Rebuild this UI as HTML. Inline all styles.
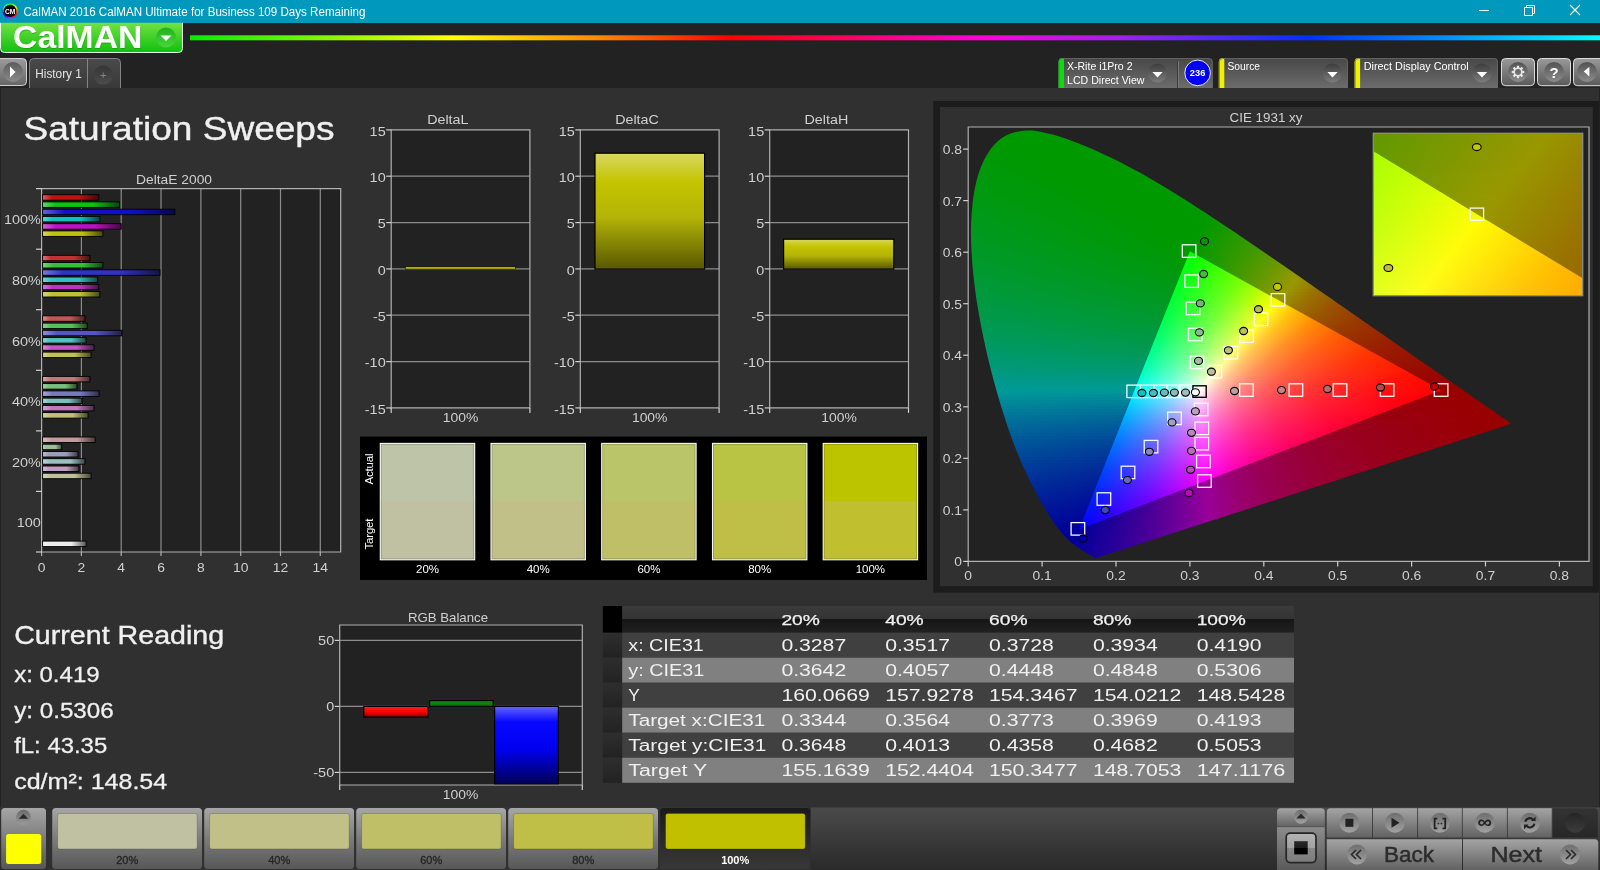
<!DOCTYPE html>
<html><head><meta charset="utf-8"><title>CalMAN 2016</title>
<style>html,body{margin:0;padding:0;background:#303030;overflow:hidden}svg{display:block;will-change:transform;font-family:"Liberation Sans",sans-serif}text{white-space:pre}</style>
</head><body>
<svg width="1600" height="870" viewBox="0 0 1600 870" font-family="'Liberation Sans', sans-serif"><defs><linearGradient id="gbtn" x1="0" y1="0" x2="0" y2="1"><stop offset="0" stop-color="#72e244"/><stop offset="0.5" stop-color="#3fd028"/><stop offset="1" stop-color="#0fc010"/></linearGradient><linearGradient id="gdd" x1="0" y1="0" x2="0" y2="1"><stop offset="0" stop-color="#1fb21f"/><stop offset="1" stop-color="#4ad63a"/></linearGradient><linearGradient id="rb" gradientUnits="userSpaceOnUse" x1="190" y1="0" x2="1600" y2="0"><stop offset="0.0000" stop-color="#00f000"/><stop offset="0.1858" stop-color="#ffff00"/><stop offset="0.2837" stop-color="#ff9000"/><stop offset="0.3830" stop-color="#ff0000"/><stop offset="0.5674" stop-color="#ff00e0"/><stop offset="0.6596" stop-color="#a020f0"/><stop offset="0.7943" stop-color="#0030ff"/><stop offset="1.0000" stop-color="#00ffff"/></linearGradient><linearGradient id="pb" x1="0" y1="0" x2="0" y2="1"><stop offset="0" stop-color="#9c9c9c"/><stop offset="1" stop-color="#666"/></linearGradient><linearGradient id="pbc" x1="0" y1="0" x2="0" y2="1"><stop offset="0" stop-color="#5c5c5c"/><stop offset="1" stop-color="#8a8a8a"/></linearGradient><linearGradient id="tab" x1="0" y1="0" x2="0" y2="1"><stop offset="0" stop-color="#4a4a4a"/><stop offset="1" stop-color="#393939"/></linearGradient><linearGradient id="plusc" x1="0" y1="0" x2="0" y2="1"><stop offset="0" stop-color="#353535"/><stop offset="1" stop-color="#4d4d4d"/></linearGradient><linearGradient id="pnl" x1="0" y1="0" x2="0" y2="1"><stop offset="0" stop-color="#474747"/><stop offset="1" stop-color="#6c6c6c"/></linearGradient><linearGradient id="ddc" x1="0" y1="0" x2="0" y2="1"><stop offset="0" stop-color="#3c3c3c"/><stop offset="1" stop-color="#7c7c7c"/></linearGradient><linearGradient id="tb" x1="0" y1="0" x2="0" y2="1"><stop offset="0" stop-color="#9a9a9a"/><stop offset="1" stop-color="#5a5a5a"/></linearGradient><linearGradient id="tbc" x1="0" y1="0" x2="0" y2="1"><stop offset="0" stop-color="#525252"/><stop offset="1" stop-color="#8c8c8c"/></linearGradient><linearGradient id="hb1" x1="0" y1="0" x2="1" y2="0"><stop offset="0" stop-color="#d66363"/><stop offset="0.17" stop-color="#c01010"/><stop offset="0.66" stop-color="#c01010"/><stop offset="1" stop-color="#480606"/></linearGradient><linearGradient id="hb2" x1="0" y1="0" x2="1" y2="0"><stop offset="0" stop-color="#63d663"/><stop offset="0.17" stop-color="#10c010"/><stop offset="0.66" stop-color="#10c010"/><stop offset="1" stop-color="#064806"/></linearGradient><linearGradient id="hb3" x1="0" y1="0" x2="1" y2="0"><stop offset="0" stop-color="#6363db"/><stop offset="0.17" stop-color="#1010c8"/><stop offset="0.66" stop-color="#1010c8"/><stop offset="1" stop-color="#06064c"/></linearGradient><linearGradient id="hb4" x1="0" y1="0" x2="1" y2="0"><stop offset="0" stop-color="#63d6d6"/><stop offset="0.17" stop-color="#10c0c0"/><stop offset="0.66" stop-color="#10c0c0"/><stop offset="1" stop-color="#064848"/></linearGradient><linearGradient id="hb5" x1="0" y1="0" x2="1" y2="0"><stop offset="0" stop-color="#d663d6"/><stop offset="0.17" stop-color="#c010c0"/><stop offset="0.66" stop-color="#c010c0"/><stop offset="1" stop-color="#480648"/></linearGradient><linearGradient id="hb6" x1="0" y1="0" x2="1" y2="0"><stop offset="0" stop-color="#d6d663"/><stop offset="0.17" stop-color="#c0c010"/><stop offset="0.66" stop-color="#c0c010"/><stop offset="1" stop-color="#484806"/></linearGradient><linearGradient id="hb7" x1="0" y1="0" x2="1" y2="0"><stop offset="0" stop-color="#d67a7a"/><stop offset="0.17" stop-color="#c03333"/><stop offset="0.66" stop-color="#c03333"/><stop offset="1" stop-color="#481313"/></linearGradient><linearGradient id="hb8" x1="0" y1="0" x2="1" y2="0"><stop offset="0" stop-color="#7ad67a"/><stop offset="0.17" stop-color="#33c033"/><stop offset="0.66" stop-color="#33c033"/><stop offset="1" stop-color="#134813"/></linearGradient><linearGradient id="hb9" x1="0" y1="0" x2="1" y2="0"><stop offset="0" stop-color="#7a7ad6"/><stop offset="0.17" stop-color="#3333c0"/><stop offset="0.66" stop-color="#3333c0"/><stop offset="1" stop-color="#131348"/></linearGradient><linearGradient id="hb10" x1="0" y1="0" x2="1" y2="0"><stop offset="0" stop-color="#7ad6d6"/><stop offset="0.17" stop-color="#33c0c0"/><stop offset="0.66" stop-color="#33c0c0"/><stop offset="1" stop-color="#134848"/></linearGradient><linearGradient id="hb11" x1="0" y1="0" x2="1" y2="0"><stop offset="0" stop-color="#d67ad6"/><stop offset="0.17" stop-color="#c033c0"/><stop offset="0.66" stop-color="#c033c0"/><stop offset="1" stop-color="#481348"/></linearGradient><linearGradient id="hb12" x1="0" y1="0" x2="1" y2="0"><stop offset="0" stop-color="#d6d67a"/><stop offset="0.17" stop-color="#c0c033"/><stop offset="0.66" stop-color="#c0c033"/><stop offset="1" stop-color="#484813"/></linearGradient><linearGradient id="hb13" x1="0" y1="0" x2="1" y2="0"><stop offset="0" stop-color="#d69191"/><stop offset="0.17" stop-color="#c05656"/><stop offset="0.66" stop-color="#c05656"/><stop offset="1" stop-color="#482020"/></linearGradient><linearGradient id="hb14" x1="0" y1="0" x2="1" y2="0"><stop offset="0" stop-color="#91d691"/><stop offset="0.17" stop-color="#56c056"/><stop offset="0.66" stop-color="#56c056"/><stop offset="1" stop-color="#204820"/></linearGradient><linearGradient id="hb15" x1="0" y1="0" x2="1" y2="0"><stop offset="0" stop-color="#9191d6"/><stop offset="0.17" stop-color="#5656c0"/><stop offset="0.66" stop-color="#5656c0"/><stop offset="1" stop-color="#202048"/></linearGradient><linearGradient id="hb16" x1="0" y1="0" x2="1" y2="0"><stop offset="0" stop-color="#91d6d6"/><stop offset="0.17" stop-color="#56c0c0"/><stop offset="0.66" stop-color="#56c0c0"/><stop offset="1" stop-color="#204848"/></linearGradient><linearGradient id="hb17" x1="0" y1="0" x2="1" y2="0"><stop offset="0" stop-color="#d691d6"/><stop offset="0.17" stop-color="#c056c0"/><stop offset="0.66" stop-color="#c056c0"/><stop offset="1" stop-color="#482048"/></linearGradient><linearGradient id="hb18" x1="0" y1="0" x2="1" y2="0"><stop offset="0" stop-color="#d6d691"/><stop offset="0.17" stop-color="#c0c056"/><stop offset="0.66" stop-color="#c0c056"/><stop offset="1" stop-color="#484820"/></linearGradient><linearGradient id="hb19" x1="0" y1="0" x2="1" y2="0"><stop offset="0" stop-color="#d6a8a8"/><stop offset="0.17" stop-color="#c07979"/><stop offset="0.66" stop-color="#c07979"/><stop offset="1" stop-color="#482e2e"/></linearGradient><linearGradient id="hb20" x1="0" y1="0" x2="1" y2="0"><stop offset="0" stop-color="#a8d6a8"/><stop offset="0.17" stop-color="#79c079"/><stop offset="0.66" stop-color="#79c079"/><stop offset="1" stop-color="#2e482e"/></linearGradient><linearGradient id="hb21" x1="0" y1="0" x2="1" y2="0"><stop offset="0" stop-color="#a8a8d6"/><stop offset="0.17" stop-color="#7979c0"/><stop offset="0.66" stop-color="#7979c0"/><stop offset="1" stop-color="#2e2e48"/></linearGradient><linearGradient id="hb22" x1="0" y1="0" x2="1" y2="0"><stop offset="0" stop-color="#a8d6d6"/><stop offset="0.17" stop-color="#79c0c0"/><stop offset="0.66" stop-color="#79c0c0"/><stop offset="1" stop-color="#2e4848"/></linearGradient><linearGradient id="hb23" x1="0" y1="0" x2="1" y2="0"><stop offset="0" stop-color="#d6a8d6"/><stop offset="0.17" stop-color="#c079c0"/><stop offset="0.66" stop-color="#c079c0"/><stop offset="1" stop-color="#482e48"/></linearGradient><linearGradient id="hb24" x1="0" y1="0" x2="1" y2="0"><stop offset="0" stop-color="#d6d6a8"/><stop offset="0.17" stop-color="#c0c079"/><stop offset="0.66" stop-color="#c0c079"/><stop offset="1" stop-color="#48482e"/></linearGradient><linearGradient id="hb25" x1="0" y1="0" x2="1" y2="0"><stop offset="0" stop-color="#d6bfbf"/><stop offset="0.17" stop-color="#c09c9c"/><stop offset="0.66" stop-color="#c09c9c"/><stop offset="1" stop-color="#483b3b"/></linearGradient><linearGradient id="hb26" x1="0" y1="0" x2="1" y2="0"><stop offset="0" stop-color="#bfd6bf"/><stop offset="0.17" stop-color="#9cc09c"/><stop offset="0.66" stop-color="#9cc09c"/><stop offset="1" stop-color="#3b483b"/></linearGradient><linearGradient id="hb27" x1="0" y1="0" x2="1" y2="0"><stop offset="0" stop-color="#bfbfd6"/><stop offset="0.17" stop-color="#9c9cc0"/><stop offset="0.66" stop-color="#9c9cc0"/><stop offset="1" stop-color="#3b3b48"/></linearGradient><linearGradient id="hb28" x1="0" y1="0" x2="1" y2="0"><stop offset="0" stop-color="#bfd6d6"/><stop offset="0.17" stop-color="#9cc0c0"/><stop offset="0.66" stop-color="#9cc0c0"/><stop offset="1" stop-color="#3b4848"/></linearGradient><linearGradient id="hb29" x1="0" y1="0" x2="1" y2="0"><stop offset="0" stop-color="#d6bfd6"/><stop offset="0.17" stop-color="#c09cc0"/><stop offset="0.66" stop-color="#c09cc0"/><stop offset="1" stop-color="#483b48"/></linearGradient><linearGradient id="hb30" x1="0" y1="0" x2="1" y2="0"><stop offset="0" stop-color="#d6d6bf"/><stop offset="0.17" stop-color="#c0c09c"/><stop offset="0.66" stop-color="#c0c09c"/><stop offset="1" stop-color="#48483b"/></linearGradient><linearGradient id="hb31" x1="0" y1="0" x2="1" y2="0"><stop offset="0" stop-color="#f2f2f2"/><stop offset="0.17" stop-color="#ebebeb"/><stop offset="0.66" stop-color="#ebebeb"/><stop offset="1" stop-color="#595959"/></linearGradient><linearGradient id="ybar" x1="0" y1="0" x2="0" y2="1"><stop offset="0" stop-color="#d8d860"/><stop offset="0.25" stop-color="#c4c400"/><stop offset="0.55" stop-color="#b4b408"/><stop offset="1" stop-color="#585800"/></linearGradient><linearGradient id="rbar" x1="0" y1="0" x2="0" y2="1"><stop offset="0" stop-color="#ff2020"/><stop offset="0.5" stop-color="#ff0000"/><stop offset="1" stop-color="#8a0000"/></linearGradient><linearGradient id="gbar" x1="0" y1="0" x2="0" y2="1"><stop offset="0" stop-color="#109010"/><stop offset="1" stop-color="#0a700a"/></linearGradient><linearGradient id="bbar" x1="0" y1="0" x2="0" y2="1"><stop offset="0" stop-color="#6464ff"/><stop offset="0.2" stop-color="#0808ff"/><stop offset="0.55" stop-color="#0000f0"/><stop offset="1" stop-color="#000058"/></linearGradient><linearGradient id="thd" x1="0" y1="0" x2="0" y2="1"><stop offset="0" stop-color="#3b3b3b"/><stop offset="0.47" stop-color="#343434"/><stop offset="0.48" stop-color="#151515"/><stop offset="1" stop-color="#212121"/></linearGradient><linearGradient id="rhd" x1="0" y1="0" x2="0" y2="1"><stop offset="0" stop-color="#2e2e2e"/><stop offset="1" stop-color="#222"/></linearGradient><clipPath id="hs"><path d="M1096.9 557.8L1096.8 557.8L1096.7 557.9L1096.7 557.9L1096.5 557.9L1096.4 557.9L1096.3 557.9L1096.1 557.9L1095.9 557.9L1095.6 557.9L1095.4 557.9L1095.1 557.8L1094.9 557.8L1094.6 557.7L1094.3 557.6L1094.1 557.4L1093.8 557.3L1093.4 557.1L1093.0 556.8L1092.6 556.6L1092.1 556.3L1091.6 556.0L1091.0 555.6L1090.4 555.2L1089.7 554.8L1088.9 554.3L1088.1 553.8L1087.2 553.3L1086.2 552.7L1085.1 552.0L1083.9 551.3L1082.5 550.4L1081.0 549.4L1079.3 548.3L1077.6 547.2L1076.0 546.1L1074.6 545.1L1073.4 544.2L1072.4 543.4L1071.4 542.7L1070.5 541.8L1069.5 540.9L1068.3 539.8L1067.1 538.6L1065.8 537.3L1064.4 535.8L1063.0 534.3L1061.5 532.5L1059.9 530.6L1058.3 528.6L1056.6 526.4L1054.9 524.0L1053.1 521.5L1051.2 518.7L1049.2 515.7L1047.1 512.4L1045.0 508.8L1042.8 505.1L1040.5 501.1L1038.1 496.7L1035.7 492.0L1033.1 487.0L1030.4 481.7L1027.6 476.0L1024.7 470.1L1021.8 463.7L1019.0 457.0L1016.1 449.8L1013.2 442.2L1010.3 434.3L1007.4 426.0L1004.6 417.3L1001.8 408.4L998.9 399.0L996.1 389.2L993.3 379.0L990.6 368.7L988.0 358.2L985.6 347.7L983.3 337.1L981.1 326.2L979.1 315.3L977.2 304.3L975.6 293.5L974.3 282.9L973.1 272.5L972.2 262.2L971.5 251.9L971.1 241.9L970.9 232.2L971.1 222.9L971.6 213.9L972.4 205.1L973.4 196.6L974.8 188.5L976.5 180.8L978.5 173.7L980.8 167.2L983.5 161.1L986.5 155.5L989.8 150.3L993.3 145.8L996.9 141.9L1000.8 138.7L1005.0 136.1L1009.3 134.0L1013.9 132.5L1018.5 131.4L1023.1 130.7L1027.8 130.4L1032.7 130.6L1037.6 131.3L1042.6 132.2L1047.6 133.4L1052.6 134.6L1057.6 135.9L1062.6 137.5L1067.6 139.3L1072.7 141.2L1077.6 143.1L1082.5 145.0L1087.3 147.0L1092.1 149.0L1096.8 151.1L1101.5 153.2L1106.1 155.4L1110.8 157.6L1115.3 159.8L1119.9 162.1L1124.4 164.4L1128.9 166.8L1133.4 169.2L1137.9 171.6L1142.4 174.1L1146.8 176.6L1151.3 179.2L1155.7 181.8L1160.2 184.4L1164.6 187.1L1169.1 189.8L1173.5 192.5L1177.9 195.2L1182.3 198.0L1186.7 200.8L1191.1 203.6L1195.5 206.4L1199.9 209.3L1204.3 212.1L1208.7 215.0L1213.1 217.9L1217.5 220.8L1221.9 223.7L1226.3 226.7L1230.7 229.6L1235.1 232.6L1239.5 235.6L1243.9 238.5L1248.3 241.5L1252.7 244.5L1257.1 247.5L1261.5 250.5L1265.9 253.5L1270.2 256.5L1274.6 259.5L1279.0 262.5L1283.4 265.5L1287.7 268.5L1292.1 271.5L1296.4 274.5L1300.7 277.5L1305.0 280.5L1309.3 283.4L1313.6 286.4L1317.8 289.4L1322.0 292.3L1326.2 295.2L1330.4 298.1L1334.6 301.0L1338.7 303.9L1342.9 306.8L1346.9 309.6L1351.0 312.4L1355.0 315.2L1359.0 318.0L1363.0 320.8L1366.9 323.5L1370.8 326.2L1374.7 328.9L1378.5 331.5L1382.3 334.1L1386.0 336.7L1389.7 339.3L1393.3 341.8L1396.8 344.2L1400.3 346.7L1403.8 349.1L1407.2 351.5L1410.5 353.8L1413.7 356.0L1416.9 358.2L1420.0 360.4L1422.9 362.4L1425.9 364.5L1428.7 366.5L1431.6 368.4L1434.3 370.3L1437.0 372.2L1439.7 374.1L1442.3 375.9L1444.8 377.6L1447.2 379.3L1449.6 380.9L1451.8 382.5L1454.0 384.0L1456.2 385.5L1458.2 386.9L1460.2 388.3L1462.2 389.6L1464.0 390.9L1465.8 392.1L1467.5 393.3L1469.2 394.5L1470.8 395.6L1472.3 396.7L1473.6 397.6L1474.9 398.5L1476.2 399.4L1477.6 400.4L1479.2 401.5L1481.1 402.8L1483.1 404.2L1485.3 405.7L1487.5 407.2L1489.5 408.6L1491.3 409.9L1493.0 411.0L1494.5 412.1L1495.9 413.1L1497.2 414.0L1498.4 414.8L1499.5 415.6L1500.6 416.4L1501.6 417.0L1502.5 417.6L1503.3 418.2L1504.0 418.7L1504.7 419.2L1505.3 419.6L1505.9 420.0L1506.4 420.3L1506.8 420.6L1507.2 420.9L1507.7 421.2L1508.1 421.6L1508.6 421.9L1509.1 422.2L1509.5 422.5L1509.9 422.8L1510.2 423.0L1510.4 423.2L1510.7 423.3L1510.8 423.4L1511.0 423.5L1511.1 423.6L1511.1 423.7z"/></clipPath><clipPath id="tri"><path d="M1441.2 390.3L1189.9 251.2L1079.0 529.5z"/></clipPath><linearGradient id="c1" gradientUnits="userSpaceOnUse" x1="1010" x2="1048" y1="0" y2="0"><stop offset="0.000" stop-color="#009900"/><stop offset="1.000" stop-color="#009900"/></linearGradient><linearGradient id="c2" gradientUnits="userSpaceOnUse" x1="1003" x2="1060" y1="0" y2="0"><stop offset="0.000" stop-color="#009900"/><stop offset="1.000" stop-color="#009900"/></linearGradient><linearGradient id="c3" gradientUnits="userSpaceOnUse" x1="998" x2="1069" y1="0" y2="0"><stop offset="0.000" stop-color="#009900"/><stop offset="1.000" stop-color="#009900"/></linearGradient><linearGradient id="c4" gradientUnits="userSpaceOnUse" x1="994" x2="1077" y1="0" y2="0"><stop offset="0.000" stop-color="#009900"/><stop offset="1.000" stop-color="#009900"/></linearGradient><linearGradient id="c5" gradientUnits="userSpaceOnUse" x1="992" x2="1085" y1="0" y2="0"><stop offset="0.000" stop-color="#009900"/><stop offset="1.000" stop-color="#009900"/></linearGradient><linearGradient id="c6" gradientUnits="userSpaceOnUse" x1="989" x2="1092" y1="0" y2="0"><stop offset="0.000" stop-color="#009902"/><stop offset="1.000" stop-color="#009900"/></linearGradient><linearGradient id="c7" gradientUnits="userSpaceOnUse" x1="987" x2="1099" y1="0" y2="0"><stop offset="0.000" stop-color="#009903"/><stop offset="0.679" stop-color="#009900"/><stop offset="1.000" stop-color="#009900"/></linearGradient><linearGradient id="c8" gradientUnits="userSpaceOnUse" x1="985" x2="1106" y1="0" y2="0"><stop offset="0.000" stop-color="#009904"/><stop offset="0.471" stop-color="#009900"/><stop offset="1.000" stop-color="#009900"/></linearGradient><linearGradient id="c9" gradientUnits="userSpaceOnUse" x1="983" x2="1112" y1="0" y2="0"><stop offset="0.000" stop-color="#009905"/><stop offset="0.450" stop-color="#009900"/><stop offset="1.000" stop-color="#009900"/></linearGradient><linearGradient id="c10" gradientUnits="userSpaceOnUse" x1="982" x2="1118" y1="0" y2="0"><stop offset="0.000" stop-color="#009906"/><stop offset="0.456" stop-color="#009900"/><stop offset="1.000" stop-color="#009900"/></linearGradient><linearGradient id="c11" gradientUnits="userSpaceOnUse" x1="980" x2="1124" y1="0" y2="0"><stop offset="0.000" stop-color="#009907"/><stop offset="0.465" stop-color="#009900"/><stop offset="1.000" stop-color="#009900"/></linearGradient><linearGradient id="c12" gradientUnits="userSpaceOnUse" x1="979" x2="1130" y1="0" y2="0"><stop offset="0.000" stop-color="#009908"/><stop offset="0.483" stop-color="#009900"/><stop offset="1.000" stop-color="#009900"/></linearGradient><linearGradient id="c13" gradientUnits="userSpaceOnUse" x1="978" x2="1136" y1="0" y2="0"><stop offset="0.000" stop-color="#009909"/><stop offset="0.494" stop-color="#009900"/><stop offset="1.000" stop-color="#009900"/></linearGradient><linearGradient id="c14" gradientUnits="userSpaceOnUse" x1="977" x2="1141" y1="0" y2="0"><stop offset="0.000" stop-color="#00990a"/><stop offset="0.512" stop-color="#009900"/><stop offset="1.000" stop-color="#009900"/></linearGradient><linearGradient id="c15" gradientUnits="userSpaceOnUse" x1="976" x2="1146" y1="0" y2="0"><stop offset="0.000" stop-color="#00990b"/><stop offset="0.529" stop-color="#009900"/><stop offset="1.000" stop-color="#009900"/></linearGradient><linearGradient id="c16" gradientUnits="userSpaceOnUse" x1="975" x2="1152" y1="0" y2="0"><stop offset="0.000" stop-color="#00990c"/><stop offset="0.542" stop-color="#009900"/><stop offset="1.000" stop-color="#009900"/></linearGradient><linearGradient id="c17" gradientUnits="userSpaceOnUse" x1="974" x2="1157" y1="0" y2="0"><stop offset="0.000" stop-color="#00990d"/><stop offset="0.557" stop-color="#009900"/><stop offset="1.000" stop-color="#009900"/></linearGradient><linearGradient id="c18" gradientUnits="userSpaceOnUse" x1="973" x2="1162" y1="0" y2="0"><stop offset="0.000" stop-color="#00990e"/><stop offset="0.571" stop-color="#009900"/><stop offset="1.000" stop-color="#009900"/></linearGradient><linearGradient id="c19" gradientUnits="userSpaceOnUse" x1="973" x2="1167" y1="0" y2="0"><stop offset="0.000" stop-color="#00990f"/><stop offset="0.582" stop-color="#009900"/><stop offset="1.000" stop-color="#009900"/></linearGradient><linearGradient id="c20" gradientUnits="userSpaceOnUse" x1="972" x2="1172" y1="0" y2="0"><stop offset="0.000" stop-color="#009910"/><stop offset="0.600" stop-color="#009900"/><stop offset="1.000" stop-color="#009900"/></linearGradient><linearGradient id="c21" gradientUnits="userSpaceOnUse" x1="972" x2="1177" y1="0" y2="0"><stop offset="0.000" stop-color="#009911"/><stop offset="0.605" stop-color="#009900"/><stop offset="1.000" stop-color="#009900"/></linearGradient><linearGradient id="c22" gradientUnits="userSpaceOnUse" x1="971" x2="1182" y1="0" y2="0"><stop offset="0.000" stop-color="#009912"/><stop offset="0.621" stop-color="#009900"/><stop offset="1.000" stop-color="#009900"/></linearGradient><linearGradient id="c23" gradientUnits="userSpaceOnUse" x1="971" x2="1186" y1="0" y2="0"><stop offset="0.000" stop-color="#009913"/><stop offset="0.633" stop-color="#009900"/><stop offset="1.000" stop-color="#009900"/></linearGradient><linearGradient id="c24" gradientUnits="userSpaceOnUse" x1="970" x2="1191" y1="0" y2="0"><stop offset="0.000" stop-color="#009914"/><stop offset="0.643" stop-color="#009900"/><stop offset="1.000" stop-color="#009900"/></linearGradient><linearGradient id="c25" gradientUnits="userSpaceOnUse" x1="970" x2="1196" y1="0" y2="0"><stop offset="0.000" stop-color="#009915"/><stop offset="0.650" stop-color="#009900"/><stop offset="1.000" stop-color="#009900"/></linearGradient><linearGradient id="c26" gradientUnits="userSpaceOnUse" x1="970" x2="1200" y1="0" y2="0"><stop offset="0.000" stop-color="#009916"/><stop offset="0.665" stop-color="#009900"/><stop offset="1.000" stop-color="#009900"/></linearGradient><linearGradient id="c27" gradientUnits="userSpaceOnUse" x1="969" x2="1205" y1="0" y2="0"><stop offset="0.000" stop-color="#009917"/><stop offset="0.674" stop-color="#009900"/><stop offset="1.000" stop-color="#009900"/></linearGradient><linearGradient id="c28" gradientUnits="userSpaceOnUse" x1="969" x2="1210" y1="0" y2="0"><stop offset="0.000" stop-color="#009918"/><stop offset="0.680" stop-color="#009900"/><stop offset="0.988" stop-color="#019900"/><stop offset="1.000" stop-color="#049900"/></linearGradient><linearGradient id="c29" gradientUnits="userSpaceOnUse" x1="969" x2="1214" y1="0" y2="0"><stop offset="0.000" stop-color="#00991a"/><stop offset="0.690" stop-color="#009900"/><stop offset="0.967" stop-color="#029900"/><stop offset="1.000" stop-color="#089900"/></linearGradient><linearGradient id="c30" gradientUnits="userSpaceOnUse" x1="969" x2="1219" y1="0" y2="0"><stop offset="0.000" stop-color="#00991b"/><stop offset="0.700" stop-color="#009900"/><stop offset="0.944" stop-color="#029900"/><stop offset="1.000" stop-color="#0e9900"/></linearGradient><linearGradient id="c31" gradientUnits="userSpaceOnUse" x1="969" x2="1223" y1="0" y2="0"><stop offset="0.000" stop-color="#00991c"/><stop offset="0.709" stop-color="#009900"/><stop offset="0.925" stop-color="#029900"/><stop offset="1.000" stop-color="#129900"/></linearGradient><linearGradient id="c32" gradientUnits="userSpaceOnUse" x1="969" x2="1228" y1="0" y2="0"><stop offset="0.000" stop-color="#00991d"/><stop offset="0.714" stop-color="#009900"/><stop offset="0.903" stop-color="#029900"/><stop offset="1.000" stop-color="#189900"/></linearGradient><linearGradient id="c33" gradientUnits="userSpaceOnUse" x1="968" x2="1232" y1="0" y2="0"><stop offset="0.000" stop-color="#00991e"/><stop offset="0.723" stop-color="#009900"/><stop offset="0.883" stop-color="#019900"/><stop offset="1.000" stop-color="#1d9900"/></linearGradient><linearGradient id="c34" gradientUnits="userSpaceOnUse" x1="968" x2="1237" y1="0" y2="0"><stop offset="0.000" stop-color="#00991f"/><stop offset="0.732" stop-color="#009900"/><stop offset="0.862" stop-color="#029900"/><stop offset="1.000" stop-color="#239900"/></linearGradient><linearGradient id="c35" gradientUnits="userSpaceOnUse" x1="968" x2="1241" y1="0" y2="0"><stop offset="0.000" stop-color="#009921"/><stop offset="0.740" stop-color="#009900"/><stop offset="0.846" stop-color="#029900"/><stop offset="1.000" stop-color="#299900"/></linearGradient><linearGradient id="c36" gradientUnits="userSpaceOnUse" x1="968" x2="1246" y1="0" y2="0"><stop offset="0.000" stop-color="#009922"/><stop offset="0.680" stop-color="#009901"/><stop offset="0.827" stop-color="#029900"/><stop offset="1.000" stop-color="#309900"/></linearGradient><linearGradient id="c37" gradientUnits="userSpaceOnUse" x1="968" x2="1250" y1="0" y2="0"><stop offset="0.000" stop-color="#009923"/><stop offset="0.670" stop-color="#009903"/><stop offset="0.809" stop-color="#019900"/><stop offset="1.000" stop-color="#369900"/></linearGradient><linearGradient id="c38" gradientUnits="userSpaceOnUse" x1="969" x2="1254" y1="0" y2="0"><stop offset="0.000" stop-color="#009924"/><stop offset="0.656" stop-color="#009904"/><stop offset="0.779" stop-color="#009900"/><stop offset="0.881" stop-color="#199900"/><stop offset="1.000" stop-color="#3c9900"/></linearGradient><linearGradient id="c39" gradientUnits="userSpaceOnUse" x1="969" x2="1259" y1="0" y2="0"><stop offset="0.000" stop-color="#009926"/><stop offset="0.645" stop-color="#009905"/><stop offset="0.776" stop-color="#029900"/><stop offset="1.000" stop-color="#449900"/></linearGradient><linearGradient id="c40" gradientUnits="userSpaceOnUse" x1="969" x2="1263" y1="0" y2="0"><stop offset="0.000" stop-color="#009927"/><stop offset="0.633" stop-color="#009907"/><stop offset="0.762" stop-color="#029900"/><stop offset="0.990" stop-color="#479900"/><stop offset="1.000" stop-color="#4b9900"/></linearGradient><linearGradient id="c41" gradientUnits="userSpaceOnUse" x1="969" x2="1268" y1="0" y2="0"><stop offset="0.000" stop-color="#009928"/><stop offset="0.619" stop-color="#009909"/><stop offset="0.746" stop-color="#029900"/><stop offset="0.967" stop-color="#479900"/><stop offset="1.000" stop-color="#539900"/></linearGradient><linearGradient id="c42" gradientUnits="userSpaceOnUse" x1="969" x2="1272" y1="0" y2="0"><stop offset="0.000" stop-color="#00992a"/><stop offset="0.607" stop-color="#00990a"/><stop offset="0.729" stop-color="#019901"/><stop offset="0.944" stop-color="#469900"/><stop offset="1.000" stop-color="#5a9900"/></linearGradient><linearGradient id="c43" gradientUnits="userSpaceOnUse" x1="969" x2="1276" y1="0" y2="0"><stop offset="0.000" stop-color="#00992b"/><stop offset="0.596" stop-color="#00990c"/><stop offset="0.717" stop-color="#029903"/><stop offset="0.831" stop-color="#259900"/><stop offset="1.000" stop-color="#629900"/></linearGradient><linearGradient id="c44" gradientUnits="userSpaceOnUse" x1="969" x2="1281" y1="0" y2="0"><stop offset="0.000" stop-color="#00992c"/><stop offset="0.587" stop-color="#00990d"/><stop offset="0.702" stop-color="#029905"/><stop offset="0.804" stop-color="#229900"/><stop offset="0.994" stop-color="#699900"/><stop offset="1.000" stop-color="#6c9900"/></linearGradient><linearGradient id="c45" gradientUnits="userSpaceOnUse" x1="970" x2="1285" y1="0" y2="0"><stop offset="0.000" stop-color="#00992e"/><stop offset="0.578" stop-color="#00990f"/><stop offset="0.689" stop-color="#029907"/><stop offset="0.803" stop-color="#279900"/><stop offset="0.984" stop-color="#6d9900"/><stop offset="1.000" stop-color="#749900"/></linearGradient><linearGradient id="c46" gradientUnits="userSpaceOnUse" x1="970" x2="1289" y1="0" y2="0"><stop offset="0.000" stop-color="#00992f"/><stop offset="0.567" stop-color="#009910"/><stop offset="0.677" stop-color="#029908"/><stop offset="0.806" stop-color="#2e9900"/><stop offset="0.981" stop-color="#759900"/><stop offset="1.000" stop-color="#7e9900"/></linearGradient><linearGradient id="c47" gradientUnits="userSpaceOnUse" x1="970" x2="1294" y1="0" y2="0"><stop offset="0.000" stop-color="#009931"/><stop offset="0.556" stop-color="#009912"/><stop offset="0.660" stop-color="#01990a"/><stop offset="0.809" stop-color="#359900"/><stop offset="0.975" stop-color="#7d9900"/><stop offset="1.000" stop-color="#899900"/></linearGradient><linearGradient id="c48" gradientUnits="userSpaceOnUse" x1="971" x2="1298" y1="0" y2="0"><stop offset="0.000" stop-color="#009932"/><stop offset="0.547" stop-color="#009914"/><stop offset="0.648" stop-color="#02990c"/><stop offset="0.813" stop-color="#3e9900"/><stop offset="0.976" stop-color="#869900"/><stop offset="1.000" stop-color="#939900"/></linearGradient><linearGradient id="c49" gradientUnits="userSpaceOnUse" x1="971" x2="1302" y1="0" y2="0"><stop offset="0.000" stop-color="#009934"/><stop offset="0.538" stop-color="#009916"/><stop offset="0.637" stop-color="#02990e"/><stop offset="0.819" stop-color="#469900"/><stop offset="0.973" stop-color="#8f9900"/><stop offset="0.994" stop-color="#999800"/><stop offset="1.000" stop-color="#999500"/></linearGradient><linearGradient id="c50" gradientUnits="userSpaceOnUse" x1="971" x2="1307" y1="0" y2="0"><stop offset="0.000" stop-color="#009935"/><stop offset="0.530" stop-color="#009917"/><stop offset="0.625" stop-color="#029910"/><stop offset="0.804" stop-color="#479900"/><stop offset="0.952" stop-color="#909900"/><stop offset="0.973" stop-color="#999700"/><stop offset="1.000" stop-color="#998900"/></linearGradient><linearGradient id="c51" gradientUnits="userSpaceOnUse" x1="971" x2="1311" y1="0" y2="0"><stop offset="0.000" stop-color="#009937"/><stop offset="0.521" stop-color="#009919"/><stop offset="0.612" stop-color="#019912"/><stop offset="0.785" stop-color="#469902"/><stop offset="0.932" stop-color="#8f9900"/><stop offset="0.953" stop-color="#999800"/><stop offset="1.000" stop-color="#998000"/></linearGradient><linearGradient id="c52" gradientUnits="userSpaceOnUse" x1="972" x2="1315" y1="0" y2="0"><stop offset="0.000" stop-color="#009939"/><stop offset="0.513" stop-color="#00991b"/><stop offset="0.601" stop-color="#019914"/><stop offset="0.770" stop-color="#469904"/><stop offset="0.843" stop-color="#699900"/><stop offset="0.933" stop-color="#999800"/><stop offset="1.000" stop-color="#997800"/></linearGradient><linearGradient id="c53" gradientUnits="userSpaceOnUse" x1="972" x2="1320" y1="0" y2="0"><stop offset="0.000" stop-color="#00993a"/><stop offset="0.506" stop-color="#00991d"/><stop offset="0.589" stop-color="#029916"/><stop offset="0.753" stop-color="#469907"/><stop offset="0.839" stop-color="#719900"/><stop offset="0.914" stop-color="#999700"/><stop offset="0.991" stop-color="#997200"/><stop offset="1.000" stop-color="#996f00"/></linearGradient><linearGradient id="c54" gradientUnits="userSpaceOnUse" x1="973" x2="1324" y1="0" y2="0"><stop offset="0.000" stop-color="#00993c"/><stop offset="0.499" stop-color="#00991f"/><stop offset="0.578" stop-color="#029919"/><stop offset="0.741" stop-color="#479909"/><stop offset="0.840" stop-color="#7b9900"/><stop offset="0.895" stop-color="#999800"/><stop offset="0.972" stop-color="#997300"/><stop offset="1.000" stop-color="#996800"/></linearGradient><linearGradient id="c55" gradientUnits="userSpaceOnUse" x1="973" x2="1328" y1="0" y2="0"><stop offset="0.000" stop-color="#00993e"/><stop offset="0.490" stop-color="#009921"/><stop offset="0.569" stop-color="#02991b"/><stop offset="0.727" stop-color="#47990c"/><stop offset="0.845" stop-color="#879900"/><stop offset="0.879" stop-color="#999700"/><stop offset="0.952" stop-color="#997300"/><stop offset="1.000" stop-color="#996100"/></linearGradient><linearGradient id="c56" gradientUnits="userSpaceOnUse" x1="973" x2="1333" y1="0" y2="0"><stop offset="0.000" stop-color="#009940"/><stop offset="0.483" stop-color="#009923"/><stop offset="0.556" stop-color="#01991d"/><stop offset="0.708" stop-color="#46990f"/><stop offset="0.839" stop-color="#8e9900"/><stop offset="0.858" stop-color="#999700"/><stop offset="0.931" stop-color="#997300"/><stop offset="1.000" stop-color="#995a00"/></linearGradient><linearGradient id="c57" gradientUnits="userSpaceOnUse" x1="974" x2="1337" y1="0" y2="0"><stop offset="0.000" stop-color="#009941"/><stop offset="0.477" stop-color="#009925"/><stop offset="0.545" stop-color="#029920"/><stop offset="0.697" stop-color="#479911"/><stop offset="0.824" stop-color="#8f9902"/><stop offset="0.843" stop-color="#999600"/><stop offset="0.915" stop-color="#997200"/><stop offset="1.000" stop-color="#995500"/></linearGradient><linearGradient id="c58" gradientUnits="userSpaceOnUse" x1="974" x2="1341" y1="0" y2="0"><stop offset="0.000" stop-color="#009943"/><stop offset="0.471" stop-color="#009927"/><stop offset="0.537" stop-color="#029922"/><stop offset="0.684" stop-color="#479914"/><stop offset="0.807" stop-color="#8e9905"/><stop offset="0.826" stop-color="#999702"/><stop offset="0.894" stop-color="#997300"/><stop offset="0.989" stop-color="#995200"/><stop offset="1.000" stop-color="#994f00"/></linearGradient><linearGradient id="c59" gradientUnits="userSpaceOnUse" x1="975" x2="1346" y1="0" y2="0"><stop offset="0.000" stop-color="#009945"/><stop offset="0.464" stop-color="#00992a"/><stop offset="0.526" stop-color="#029924"/><stop offset="0.668" stop-color="#479916"/><stop offset="0.790" stop-color="#8f9908"/><stop offset="0.806" stop-color="#999805"/><stop offset="0.865" stop-color="#997600"/><stop offset="0.957" stop-color="#995500"/><stop offset="1.000" stop-color="#994a00"/></linearGradient><linearGradient id="c60" gradientUnits="userSpaceOnUse" x1="975" x2="1350" y1="0" y2="0"><stop offset="0.000" stop-color="#009947"/><stop offset="0.459" stop-color="#00992c"/><stop offset="0.515" stop-color="#019927"/><stop offset="0.653" stop-color="#45991a"/><stop offset="0.771" stop-color="#8d990b"/><stop offset="0.792" stop-color="#999708"/><stop offset="0.859" stop-color="#997200"/><stop offset="0.952" stop-color="#995100"/><stop offset="1.000" stop-color="#994500"/></linearGradient><linearGradient id="c61" gradientUnits="userSpaceOnUse" x1="976" x2="1354" y1="0" y2="0"><stop offset="0.000" stop-color="#009949"/><stop offset="0.452" stop-color="#00992e"/><stop offset="0.505" stop-color="#01992a"/><stop offset="0.643" stop-color="#46991c"/><stop offset="0.759" stop-color="#8f990e"/><stop offset="0.775" stop-color="#99970c"/><stop offset="0.839" stop-color="#997302"/><stop offset="0.929" stop-color="#995200"/><stop offset="1.000" stop-color="#994000"/></linearGradient><linearGradient id="c62" gradientUnits="userSpaceOnUse" x1="976" x2="1359" y1="0" y2="0"><stop offset="0.000" stop-color="#00994b"/><stop offset="0.446" stop-color="#009931"/><stop offset="0.496" stop-color="#02992c"/><stop offset="0.629" stop-color="#46991f"/><stop offset="0.742" stop-color="#8f9912"/><stop offset="0.757" stop-color="#99980f"/><stop offset="0.820" stop-color="#997305"/><stop offset="0.885" stop-color="#995900"/><stop offset="1.000" stop-color="#993b00"/></linearGradient><linearGradient id="c63" gradientUnits="userSpaceOnUse" x1="977" x2="1363" y1="0" y2="0"><stop offset="0.000" stop-color="#00994d"/><stop offset="0.443" stop-color="#009933"/><stop offset="0.487" stop-color="#02992f"/><stop offset="0.617" stop-color="#469923"/><stop offset="0.725" stop-color="#8e9915"/><stop offset="0.744" stop-color="#999713"/><stop offset="0.806" stop-color="#997207"/><stop offset="0.883" stop-color="#995400"/><stop offset="1.000" stop-color="#993700"/></linearGradient><linearGradient id="c64" gradientUnits="userSpaceOnUse" x1="977" x2="1367" y1="0" y2="0"><stop offset="0.000" stop-color="#00994f"/><stop offset="0.438" stop-color="#009935"/><stop offset="0.479" stop-color="#029932"/><stop offset="0.605" stop-color="#469926"/><stop offset="0.713" stop-color="#8f9919"/><stop offset="0.728" stop-color="#999816"/><stop offset="0.787" stop-color="#99730a"/><stop offset="0.872" stop-color="#995200"/><stop offset="0.995" stop-color="#993500"/><stop offset="1.000" stop-color="#993400"/></linearGradient><linearGradient id="c65" gradientUnits="userSpaceOnUse" x1="978" x2="1372" y1="0" y2="0"><stop offset="0.000" stop-color="#009952"/><stop offset="0.431" stop-color="#009938"/><stop offset="0.467" stop-color="#019935"/><stop offset="0.591" stop-color="#469929"/><stop offset="0.695" stop-color="#8e991d"/><stop offset="0.713" stop-color="#99961a"/><stop offset="0.772" stop-color="#99720d"/><stop offset="0.853" stop-color="#995102"/><stop offset="0.975" stop-color="#993400"/><stop offset="1.000" stop-color="#993000"/></linearGradient><linearGradient id="c66" gradientUnits="userSpaceOnUse" x1="978" x2="1376" y1="0" y2="0"><stop offset="0.000" stop-color="#009954"/><stop offset="0.427" stop-color="#00993b"/><stop offset="0.460" stop-color="#019938"/><stop offset="0.580" stop-color="#46992d"/><stop offset="0.683" stop-color="#8f9920"/><stop offset="0.698" stop-color="#99971e"/><stop offset="0.756" stop-color="#997210"/><stop offset="0.837" stop-color="#995104"/><stop offset="0.910" stop-color="#993d00"/><stop offset="1.000" stop-color="#992c00"/></linearGradient><linearGradient id="c67" gradientUnits="userSpaceOnUse" x1="979" x2="1380" y1="0" y2="0"><stop offset="0.000" stop-color="#009956"/><stop offset="0.424" stop-color="#00993d"/><stop offset="0.451" stop-color="#02993b"/><stop offset="0.569" stop-color="#469930"/><stop offset="0.668" stop-color="#8e9924"/><stop offset="0.683" stop-color="#999822"/><stop offset="0.738" stop-color="#997314"/><stop offset="0.815" stop-color="#995207"/><stop offset="0.903" stop-color="#993b00"/><stop offset="1.000" stop-color="#992900"/></linearGradient><linearGradient id="c68" gradientUnits="userSpaceOnUse" x1="980" x2="1385" y1="0" y2="0"><stop offset="0.000" stop-color="#009958"/><stop offset="0.420" stop-color="#009940"/><stop offset="0.442" stop-color="#02993e"/><stop offset="0.558" stop-color="#479933"/><stop offset="0.654" stop-color="#8f9928"/><stop offset="0.669" stop-color="#999726"/><stop offset="0.723" stop-color="#997217"/><stop offset="0.800" stop-color="#995109"/><stop offset="0.901" stop-color="#993600"/><stop offset="1.000" stop-color="#992600"/></linearGradient><linearGradient id="c69" gradientUnits="userSpaceOnUse" x1="980" x2="1389" y1="0" y2="0"><stop offset="0.000" stop-color="#00995b"/><stop offset="0.418" stop-color="#009943"/><stop offset="0.435" stop-color="#029942"/><stop offset="0.548" stop-color="#479937"/><stop offset="0.643" stop-color="#90992c"/><stop offset="0.655" stop-color="#99972a"/><stop offset="0.707" stop-color="#99741b"/><stop offset="0.780" stop-color="#99530c"/><stop offset="0.888" stop-color="#993500"/><stop offset="1.000" stop-color="#992300"/></linearGradient><linearGradient id="c70" gradientUnits="userSpaceOnUse" x1="981" x2="1393" y1="0" y2="0"><stop offset="0.000" stop-color="#00995d"/><stop offset="0.415" stop-color="#009946"/><stop offset="0.430" stop-color="#049945"/><stop offset="0.539" stop-color="#49993b"/><stop offset="0.631" stop-color="#919930"/><stop offset="0.643" stop-color="#99962e"/><stop offset="0.694" stop-color="#99721e"/><stop offset="0.767" stop-color="#99510f"/><stop offset="0.874" stop-color="#993401"/><stop offset="1.000" stop-color="#992000"/></linearGradient><linearGradient id="c71" gradientUnits="userSpaceOnUse" x1="981" x2="1398" y1="0" y2="0"><stop offset="0.000" stop-color="#009960"/><stop offset="0.412" stop-color="#009949"/><stop offset="0.501" stop-color="#369941"/><stop offset="0.595" stop-color="#7d9937"/><stop offset="0.628" stop-color="#999733"/><stop offset="0.679" stop-color="#997221"/><stop offset="0.748" stop-color="#995212"/><stop offset="0.851" stop-color="#993504"/><stop offset="0.935" stop-color="#992600"/><stop offset="1.000" stop-color="#991d00"/></linearGradient><linearGradient id="c72" gradientUnits="userSpaceOnUse" x1="982" x2="1402" y1="0" y2="0"><stop offset="0.000" stop-color="#009963"/><stop offset="0.410" stop-color="#02994c"/><stop offset="0.514" stop-color="#479943"/><stop offset="0.602" stop-color="#8f9939"/><stop offset="0.614" stop-color="#999838"/><stop offset="0.662" stop-color="#997426"/><stop offset="0.731" stop-color="#995215"/><stop offset="0.831" stop-color="#993506"/><stop offset="0.926" stop-color="#992400"/><stop offset="1.000" stop-color="#991a00"/></linearGradient><linearGradient id="c73" gradientUnits="userSpaceOnUse" x1="983" x2="1406" y1="0" y2="0"><stop offset="0.000" stop-color="#009965"/><stop offset="0.400" stop-color="#019950"/><stop offset="0.501" stop-color="#459948"/><stop offset="0.589" stop-color="#8e993e"/><stop offset="0.603" stop-color="#99963c"/><stop offset="0.650" stop-color="#997229"/><stop offset="0.716" stop-color="#995218"/><stop offset="0.816" stop-color="#993508"/><stop offset="0.927" stop-color="#992100"/><stop offset="1.000" stop-color="#991800"/></linearGradient><linearGradient id="c74" gradientUnits="userSpaceOnUse" x1="983" x2="1410" y1="0" y2="0"><stop offset="0.000" stop-color="#009968"/><stop offset="0.393" stop-color="#019954"/><stop offset="0.492" stop-color="#45994c"/><stop offset="0.576" stop-color="#8d9943"/><stop offset="0.590" stop-color="#999741"/><stop offset="0.637" stop-color="#99732d"/><stop offset="0.703" stop-color="#99521b"/><stop offset="0.799" stop-color="#99350b"/><stop offset="0.927" stop-color="#991e00"/><stop offset="1.000" stop-color="#991500"/></linearGradient><linearGradient id="c75" gradientUnits="userSpaceOnUse" x1="984" x2="1415" y1="0" y2="0"><stop offset="0.000" stop-color="#00996b"/><stop offset="0.385" stop-color="#019958"/><stop offset="0.483" stop-color="#469950"/><stop offset="0.564" stop-color="#8e9948"/><stop offset="0.575" stop-color="#999847"/><stop offset="0.619" stop-color="#997432"/><stop offset="0.682" stop-color="#99531f"/><stop offset="0.775" stop-color="#99360e"/><stop offset="0.919" stop-color="#991c00"/><stop offset="1.000" stop-color="#991300"/></linearGradient><linearGradient id="c76" gradientUnits="userSpaceOnUse" x1="985" x2="1419" y1="0" y2="0"><stop offset="0.000" stop-color="#00996e"/><stop offset="0.378" stop-color="#02995c"/><stop offset="0.472" stop-color="#469955"/><stop offset="0.553" stop-color="#8f994d"/><stop offset="0.565" stop-color="#99974b"/><stop offset="0.608" stop-color="#997335"/><stop offset="0.671" stop-color="#995221"/><stop offset="0.763" stop-color="#993410"/><stop offset="0.906" stop-color="#991b00"/><stop offset="1.000" stop-color="#991100"/></linearGradient><linearGradient id="c77" gradientUnits="userSpaceOnUse" x1="985" x2="1423" y1="0" y2="0"><stop offset="0.000" stop-color="#009971"/><stop offset="0.372" stop-color="#029960"/><stop offset="0.463" stop-color="#46995a"/><stop offset="0.541" stop-color="#8e9953"/><stop offset="0.553" stop-color="#999851"/><stop offset="0.596" stop-color="#99733a"/><stop offset="0.655" stop-color="#995225"/><stop offset="0.744" stop-color="#993513"/><stop offset="0.881" stop-color="#991c03"/><stop offset="1.000" stop-color="#990f00"/></linearGradient><linearGradient id="c78" gradientUnits="userSpaceOnUse" x1="986" x2="1428" y1="0" y2="0"><stop offset="0.000" stop-color="#009974"/><stop offset="0.362" stop-color="#019965"/><stop offset="0.452" stop-color="#46995f"/><stop offset="0.527" stop-color="#8d9958"/><stop offset="0.541" stop-color="#999656"/><stop offset="0.584" stop-color="#99713d"/><stop offset="0.643" stop-color="#995128"/><stop offset="0.731" stop-color="#993415"/><stop offset="0.867" stop-color="#991b04"/><stop offset="0.964" stop-color="#991000"/><stop offset="1.000" stop-color="#990d00"/></linearGradient><linearGradient id="c79" gradientUnits="userSpaceOnUse" x1="987" x2="1432" y1="0" y2="0"><stop offset="0.000" stop-color="#009978"/><stop offset="0.355" stop-color="#01996a"/><stop offset="0.443" stop-color="#469964"/><stop offset="0.517" stop-color="#8e995e"/><stop offset="0.528" stop-color="#99975c"/><stop offset="0.569" stop-color="#997343"/><stop offset="0.625" stop-color="#99532d"/><stop offset="0.708" stop-color="#993519"/><stop offset="0.838" stop-color="#991c07"/><stop offset="0.953" stop-color="#990f00"/><stop offset="1.000" stop-color="#990b00"/></linearGradient><linearGradient id="c80" gradientUnits="userSpaceOnUse" x1="988" x2="1436" y1="0" y2="0"><stop offset="0.000" stop-color="#00997b"/><stop offset="0.348" stop-color="#01996e"/><stop offset="0.433" stop-color="#469969"/><stop offset="0.504" stop-color="#8d9964"/><stop offset="0.516" stop-color="#999863"/><stop offset="0.556" stop-color="#997348"/><stop offset="0.612" stop-color="#995230"/><stop offset="0.694" stop-color="#99351b"/><stop offset="0.821" stop-color="#991c09"/><stop offset="0.953" stop-color="#990d00"/><stop offset="1.000" stop-color="#990900"/></linearGradient><linearGradient id="c81" gradientUnits="userSpaceOnUse" x1="988" x2="1441" y1="0" y2="0"><stop offset="0.000" stop-color="#00997f"/><stop offset="0.342" stop-color="#029973"/><stop offset="0.424" stop-color="#45996f"/><stop offset="0.494" stop-color="#8e996a"/><stop offset="0.506" stop-color="#999768"/><stop offset="0.545" stop-color="#99714c"/><stop offset="0.600" stop-color="#995133"/><stop offset="0.682" stop-color="#99341d"/><stop offset="0.808" stop-color="#991b0a"/><stop offset="0.954" stop-color="#990a00"/><stop offset="1.000" stop-color="#990700"/></linearGradient><linearGradient id="c82" gradientUnits="userSpaceOnUse" x1="989" x2="1445" y1="0" y2="0"><stop offset="0.000" stop-color="#009982"/><stop offset="0.333" stop-color="#009979"/><stop offset="0.414" stop-color="#459975"/><stop offset="0.482" stop-color="#8d9971"/><stop offset="0.493" stop-color="#99986f"/><stop offset="0.531" stop-color="#997352"/><stop offset="0.583" stop-color="#995239"/><stop offset="0.660" stop-color="#993522"/><stop offset="0.781" stop-color="#991c0e"/><stop offset="0.950" stop-color="#990900"/><stop offset="1.000" stop-color="#990500"/></linearGradient><linearGradient id="c83" gradientUnits="userSpaceOnUse" x1="990" x2="1449" y1="0" y2="0"><stop offset="0.000" stop-color="#009986"/><stop offset="0.327" stop-color="#01997e"/><stop offset="0.405" stop-color="#45997b"/><stop offset="0.471" stop-color="#8c9978"/><stop offset="0.481" stop-color="#999977"/><stop offset="0.519" stop-color="#997358"/><stop offset="0.569" stop-color="#99533d"/><stop offset="0.643" stop-color="#993625"/><stop offset="0.758" stop-color="#991c11"/><stop offset="0.946" stop-color="#990700"/><stop offset="1.000" stop-color="#990300"/></linearGradient><linearGradient id="c84" gradientUnits="userSpaceOnUse" x1="991" x2="1454" y1="0" y2="0"><stop offset="0.000" stop-color="#00998a"/><stop offset="0.320" stop-color="#019984"/><stop offset="0.395" stop-color="#459981"/><stop offset="0.460" stop-color="#8d997f"/><stop offset="0.471" stop-color="#99977c"/><stop offset="0.505" stop-color="#99735e"/><stop offset="0.555" stop-color="#995342"/><stop offset="0.629" stop-color="#993528"/><stop offset="0.743" stop-color="#991c12"/><stop offset="0.933" stop-color="#990600"/><stop offset="1.000" stop-color="#990200"/></linearGradient><linearGradient id="c85" gradientUnits="userSpaceOnUse" x1="992" x2="1458" y1="0" y2="0"><stop offset="0.000" stop-color="#00998e"/><stop offset="0.313" stop-color="#019989"/><stop offset="0.386" stop-color="#459988"/><stop offset="0.448" stop-color="#8c9986"/><stop offset="0.459" stop-color="#999885"/><stop offset="0.494" stop-color="#997464"/><stop offset="0.541" stop-color="#995347"/><stop offset="0.612" stop-color="#99362d"/><stop offset="0.721" stop-color="#991c16"/><stop offset="0.903" stop-color="#990702"/><stop offset="1.000" stop-color="#990000"/></linearGradient><linearGradient id="c86" gradientUnits="userSpaceOnUse" x1="992" x2="1462" y1="0" y2="0"><stop offset="0.000" stop-color="#009992"/><stop offset="0.309" stop-color="#02998f"/><stop offset="0.381" stop-color="#47998e"/><stop offset="0.440" stop-color="#8d998d"/><stop offset="0.449" stop-color="#99998d"/><stop offset="0.483" stop-color="#99746a"/><stop offset="0.530" stop-color="#99534b"/><stop offset="0.598" stop-color="#993630"/><stop offset="0.704" stop-color="#991c18"/><stop offset="0.883" stop-color="#990704"/><stop offset="0.996" stop-color="#990000"/><stop offset="1.000" stop-color="#990000"/></linearGradient><linearGradient id="c87" gradientUnits="userSpaceOnUse" x1="993" x2="1467" y1="0" y2="0"><stop offset="0.000" stop-color="#009996"/><stop offset="0.300" stop-color="#009996"/><stop offset="0.369" stop-color="#449996"/><stop offset="0.428" stop-color="#8c9995"/><stop offset="0.439" stop-color="#999794"/><stop offset="0.470" stop-color="#997471"/><stop offset="0.515" stop-color="#995451"/><stop offset="0.580" stop-color="#993635"/><stop offset="0.681" stop-color="#991d1c"/><stop offset="0.850" stop-color="#990807"/><stop offset="0.979" stop-color="#990000"/><stop offset="1.000" stop-color="#990000"/></linearGradient><linearGradient id="c88" gradientUnits="userSpaceOnUse" x1="994" x2="1471" y1="0" y2="0"><stop offset="0.000" stop-color="#009799"/><stop offset="0.294" stop-color="#019699"/><stop offset="0.363" stop-color="#459599"/><stop offset="0.421" stop-color="#8c9599"/><stop offset="0.432" stop-color="#999397"/><stop offset="0.463" stop-color="#997074"/><stop offset="0.509" stop-color="#994f52"/><stop offset="0.577" stop-color="#993335"/><stop offset="0.681" stop-color="#991a1c"/><stop offset="0.857" stop-color="#990506"/><stop offset="0.971" stop-color="#990000"/><stop offset="1.000" stop-color="#990000"/></linearGradient><linearGradient id="c89" gradientUnits="userSpaceOnUse" x1="995" x2="1475" y1="0" y2="0"><stop offset="0.000" stop-color="#009399"/><stop offset="0.287" stop-color="#018f99"/><stop offset="0.358" stop-color="#468e99"/><stop offset="0.419" stop-color="#8f8d99"/><stop offset="0.427" stop-color="#998b98"/><stop offset="0.460" stop-color="#996973"/><stop offset="0.506" stop-color="#994a52"/><stop offset="0.575" stop-color="#992f35"/><stop offset="0.681" stop-color="#99171c"/><stop offset="0.858" stop-color="#990306"/><stop offset="0.979" stop-color="#990000"/><stop offset="1.000" stop-color="#990000"/></linearGradient><linearGradient id="c90" gradientUnits="userSpaceOnUse" x1="996" x2="1480" y1="0" y2="0"><stop offset="0.000" stop-color="#008e99"/><stop offset="0.281" stop-color="#018999"/><stop offset="0.353" stop-color="#478799"/><stop offset="0.413" stop-color="#8e8599"/><stop offset="0.421" stop-color="#998498"/><stop offset="0.455" stop-color="#996374"/><stop offset="0.500" stop-color="#994654"/><stop offset="0.568" stop-color="#992c36"/><stop offset="0.674" stop-color="#99151d"/><stop offset="0.849" stop-color="#990207"/><stop offset="0.988" stop-color="#990000"/><stop offset="1.000" stop-color="#990000"/></linearGradient><linearGradient id="c91" gradientUnits="userSpaceOnUse" x1="997" x2="1484" y1="0" y2="0"><stop offset="0.000" stop-color="#008a99"/><stop offset="0.275" stop-color="#028399"/><stop offset="0.347" stop-color="#468199"/><stop offset="0.409" stop-color="#8e7e99"/><stop offset="0.417" stop-color="#997d99"/><stop offset="0.450" stop-color="#995e75"/><stop offset="0.497" stop-color="#994254"/><stop offset="0.565" stop-color="#992937"/><stop offset="0.671" stop-color="#99131d"/><stop offset="0.848" stop-color="#990008"/><stop offset="0.992" stop-color="#990000"/><stop offset="1.000" stop-color="#990000"/></linearGradient><linearGradient id="c92" gradientUnits="userSpaceOnUse" x1="998" x2="1488" y1="0" y2="0"><stop offset="0.000" stop-color="#008699"/><stop offset="0.269" stop-color="#027e99"/><stop offset="0.343" stop-color="#477a99"/><stop offset="0.404" stop-color="#8e7799"/><stop offset="0.414" stop-color="#997497"/><stop offset="0.449" stop-color="#995672"/><stop offset="0.498" stop-color="#993b51"/><stop offset="0.569" stop-color="#992434"/><stop offset="0.682" stop-color="#990f1b"/><stop offset="0.847" stop-color="#990008"/><stop offset="0.994" stop-color="#990000"/><stop offset="1.000" stop-color="#990000"/></linearGradient><linearGradient id="c93" gradientUnits="userSpaceOnUse" x1="999" x2="1493" y1="0" y2="0"><stop offset="0.000" stop-color="#008299"/><stop offset="0.261" stop-color="#017899"/><stop offset="0.336" stop-color="#457499"/><stop offset="0.399" stop-color="#8d7099"/><stop offset="0.409" stop-color="#996e97"/><stop offset="0.443" stop-color="#995273"/><stop offset="0.492" stop-color="#993852"/><stop offset="0.563" stop-color="#992136"/><stop offset="0.674" stop-color="#990d1c"/><stop offset="0.826" stop-color="#99000a"/><stop offset="0.992" stop-color="#990000"/><stop offset="1.000" stop-color="#990000"/></linearGradient><linearGradient id="c94" gradientUnits="userSpaceOnUse" x1="999" x2="1497" y1="0" y2="0"><stop offset="0.000" stop-color="#007e99"/><stop offset="0.257" stop-color="#017399"/><stop offset="0.333" stop-color="#466e99"/><stop offset="0.398" stop-color="#906999"/><stop offset="0.406" stop-color="#996898"/><stop offset="0.440" stop-color="#994d74"/><stop offset="0.488" stop-color="#993554"/><stop offset="0.558" stop-color="#991f37"/><stop offset="0.669" stop-color="#990b1d"/><stop offset="0.805" stop-color="#99000c"/><stop offset="0.992" stop-color="#990000"/><stop offset="1.000" stop-color="#990000"/></linearGradient><linearGradient id="c95" gradientUnits="userSpaceOnUse" x1="1000" x2="1501" y1="0" y2="0"><stop offset="0.000" stop-color="#007a99"/><stop offset="0.251" stop-color="#016e99"/><stop offset="0.327" stop-color="#456999"/><stop offset="0.391" stop-color="#8d6399"/><stop offset="0.401" stop-color="#996299"/><stop offset="0.437" stop-color="#994773"/><stop offset="0.487" stop-color="#993052"/><stop offset="0.561" stop-color="#991b35"/><stop offset="0.675" stop-color="#99081c"/><stop offset="0.786" stop-color="#99000e"/><stop offset="0.990" stop-color="#990000"/><stop offset="1.000" stop-color="#990000"/></linearGradient><linearGradient id="c96" gradientUnits="userSpaceOnUse" x1="1001" x2="1505" y1="0" y2="0"><stop offset="0.000" stop-color="#007699"/><stop offset="0.246" stop-color="#016999"/><stop offset="0.323" stop-color="#466499"/><stop offset="0.389" stop-color="#8f5d99"/><stop offset="0.399" stop-color="#995b97"/><stop offset="0.435" stop-color="#994273"/><stop offset="0.486" stop-color="#992b51"/><stop offset="0.562" stop-color="#991734"/><stop offset="0.679" stop-color="#99061b"/><stop offset="0.770" stop-color="#99000f"/><stop offset="0.986" stop-color="#990000"/><stop offset="1.000" stop-color="#990000"/></linearGradient><linearGradient id="c97" gradientUnits="userSpaceOnUse" x1="1002" x2="1510" y1="0" y2="0"><stop offset="0.000" stop-color="#007299"/><stop offset="0.240" stop-color="#026599"/><stop offset="0.319" stop-color="#475e99"/><stop offset="0.384" stop-color="#8f5899"/><stop offset="0.394" stop-color="#995597"/><stop offset="0.431" stop-color="#993d72"/><stop offset="0.482" stop-color="#992751"/><stop offset="0.559" stop-color="#991434"/><stop offset="0.677" stop-color="#99041b"/><stop offset="0.764" stop-color="#990010"/><stop offset="0.986" stop-color="#990000"/><stop offset="1.000" stop-color="#990000"/></linearGradient><linearGradient id="c98" gradientUnits="userSpaceOnUse" x1="1003" x2="1514" y1="0" y2="0"><stop offset="0.000" stop-color="#006e99"/><stop offset="0.235" stop-color="#026099"/><stop offset="0.313" stop-color="#465999"/><stop offset="0.380" stop-color="#8e5299"/><stop offset="0.389" stop-color="#995098"/><stop offset="0.427" stop-color="#993973"/><stop offset="0.479" stop-color="#992451"/><stop offset="0.556" stop-color="#991235"/><stop offset="0.675" stop-color="#99021b"/><stop offset="0.877" stop-color="#990006"/><stop offset="1.000" stop-color="#990000"/></linearGradient><linearGradient id="c99" gradientUnits="userSpaceOnUse" x1="1004" x2="1513" y1="0" y2="0"><stop offset="0.000" stop-color="#006b99"/><stop offset="0.230" stop-color="#015c99"/><stop offset="0.310" stop-color="#455599"/><stop offset="0.379" stop-color="#8e4d99"/><stop offset="0.389" stop-color="#994b98"/><stop offset="0.426" stop-color="#993574"/><stop offset="0.479" stop-color="#992152"/><stop offset="0.556" stop-color="#991036"/><stop offset="0.676" stop-color="#99001c"/><stop offset="0.876" stop-color="#990007"/><stop offset="1.000" stop-color="#990000"/></linearGradient><linearGradient id="c100" gradientUnits="userSpaceOnUse" x1="1005" x2="1503" y1="0" y2="0"><stop offset="0.000" stop-color="#006799"/><stop offset="0.231" stop-color="#015899"/><stop offset="0.315" stop-color="#465099"/><stop offset="0.386" stop-color="#8e4799"/><stop offset="0.398" stop-color="#994596"/><stop offset="0.438" stop-color="#992f71"/><stop offset="0.494" stop-color="#991d51"/><stop offset="0.576" stop-color="#990c34"/><stop offset="0.695" stop-color="#99001c"/><stop offset="0.904" stop-color="#990007"/><stop offset="1.000" stop-color="#990001"/></linearGradient><linearGradient id="c101" gradientUnits="userSpaceOnUse" x1="1006" x2="1494" y1="0" y2="0"><stop offset="0.000" stop-color="#006399"/><stop offset="0.232" stop-color="#015499"/><stop offset="0.320" stop-color="#474b99"/><stop offset="0.393" stop-color="#904299"/><stop offset="0.404" stop-color="#994097"/><stop offset="0.445" stop-color="#992c72"/><stop offset="0.502" stop-color="#991a52"/><stop offset="0.586" stop-color="#990a35"/><stop offset="0.693" stop-color="#99001f"/><stop offset="0.895" stop-color="#990009"/><stop offset="1.000" stop-color="#990002"/></linearGradient><linearGradient id="c102" gradientUnits="userSpaceOnUse" x1="1007" x2="1485" y1="0" y2="0"><stop offset="0.000" stop-color="#006099"/><stop offset="0.232" stop-color="#025099"/><stop offset="0.322" stop-color="#464799"/><stop offset="0.400" stop-color="#903d99"/><stop offset="0.410" stop-color="#993b97"/><stop offset="0.452" stop-color="#992873"/><stop offset="0.510" stop-color="#991752"/><stop offset="0.596" stop-color="#990836"/><stop offset="0.690" stop-color="#990022"/><stop offset="0.887" stop-color="#99000c"/><stop offset="1.000" stop-color="#990004"/></linearGradient><linearGradient id="c103" gradientUnits="userSpaceOnUse" x1="1008" x2="1476" y1="0" y2="0"><stop offset="0.000" stop-color="#005c99"/><stop offset="0.233" stop-color="#024c99"/><stop offset="0.327" stop-color="#474399"/><stop offset="0.406" stop-color="#8f3999"/><stop offset="0.417" stop-color="#993798"/><stop offset="0.459" stop-color="#992574"/><stop offset="0.521" stop-color="#991452"/><stop offset="0.611" stop-color="#990635"/><stop offset="0.692" stop-color="#990025"/><stop offset="0.885" stop-color="#99000e"/><stop offset="1.000" stop-color="#990006"/></linearGradient><linearGradient id="c104" gradientUnits="userSpaceOnUse" x1="1010" x2="1466" y1="0" y2="0"><stop offset="0.000" stop-color="#005999"/><stop offset="0.230" stop-color="#014899"/><stop offset="0.329" stop-color="#463f99"/><stop offset="0.412" stop-color="#8f3499"/><stop offset="0.425" stop-color="#993196"/><stop offset="0.471" stop-color="#992072"/><stop offset="0.537" stop-color="#991051"/><stop offset="0.634" stop-color="#990334"/><stop offset="0.746" stop-color="#990020"/><stop offset="0.971" stop-color="#99000a"/><stop offset="1.000" stop-color="#990008"/></linearGradient><linearGradient id="c105" gradientUnits="userSpaceOnUse" x1="1011" x2="1457" y1="0" y2="0"><stop offset="0.000" stop-color="#005699"/><stop offset="0.231" stop-color="#014599"/><stop offset="0.332" stop-color="#453b99"/><stop offset="0.417" stop-color="#8d3099"/><stop offset="0.433" stop-color="#992d97"/><stop offset="0.480" stop-color="#991d73"/><stop offset="0.547" stop-color="#990e52"/><stop offset="0.646" stop-color="#990135"/><stop offset="0.800" stop-color="#99001b"/><stop offset="1.000" stop-color="#99000a"/></linearGradient><linearGradient id="c106" gradientUnits="userSpaceOnUse" x1="1012" x2="1448" y1="0" y2="0"><stop offset="0.000" stop-color="#005299"/><stop offset="0.232" stop-color="#014199"/><stop offset="0.337" stop-color="#463799"/><stop offset="0.427" stop-color="#8e2b99"/><stop offset="0.440" stop-color="#992997"/><stop offset="0.491" stop-color="#991972"/><stop offset="0.562" stop-color="#990b51"/><stop offset="0.665" stop-color="#990034"/><stop offset="0.826" stop-color="#99001b"/><stop offset="1.000" stop-color="#99000c"/></linearGradient><linearGradient id="c107" gradientUnits="userSpaceOnUse" x1="1013" x2="1438" y1="0" y2="0"><stop offset="0.000" stop-color="#004f99"/><stop offset="0.233" stop-color="#013e99"/><stop offset="0.344" stop-color="#473399"/><stop offset="0.438" stop-color="#902799"/><stop offset="0.449" stop-color="#992597"/><stop offset="0.501" stop-color="#991673"/><stop offset="0.574" stop-color="#990952"/><stop offset="0.666" stop-color="#990038"/><stop offset="0.824" stop-color="#99001e"/><stop offset="1.000" stop-color="#99000e"/></linearGradient><linearGradient id="c108" gradientUnits="userSpaceOnUse" x1="1014" x2="1429" y1="0" y2="0"><stop offset="0.000" stop-color="#004c99"/><stop offset="0.234" stop-color="#023b99"/><stop offset="0.347" stop-color="#462f99"/><stop offset="0.443" stop-color="#8e2399"/><stop offset="0.458" stop-color="#992198"/><stop offset="0.511" stop-color="#991373"/><stop offset="0.586" stop-color="#990652"/><stop offset="0.665" stop-color="#99003c"/><stop offset="0.817" stop-color="#990022"/><stop offset="1.000" stop-color="#990010"/></linearGradient><linearGradient id="c109" gradientUnits="userSpaceOnUse" x1="1015" x2="1420" y1="0" y2="0"><stop offset="0.000" stop-color="#004999"/><stop offset="0.235" stop-color="#023899"/><stop offset="0.353" stop-color="#472c99"/><stop offset="0.454" stop-color="#901f99"/><stop offset="0.469" stop-color="#991d96"/><stop offset="0.526" stop-color="#990f71"/><stop offset="0.605" stop-color="#990351"/><stop offset="0.684" stop-color="#99003c"/><stop offset="0.844" stop-color="#990021"/><stop offset="1.000" stop-color="#990012"/></linearGradient><linearGradient id="c110" gradientUnits="userSpaceOnUse" x1="1016" x2="1411" y1="0" y2="0"><stop offset="0.000" stop-color="#004699"/><stop offset="0.233" stop-color="#013599"/><stop offset="0.357" stop-color="#462899"/><stop offset="0.461" stop-color="#8d1c99"/><stop offset="0.478" stop-color="#991997"/><stop offset="0.537" stop-color="#990c72"/><stop offset="0.618" stop-color="#990152"/><stop offset="0.737" stop-color="#990035"/><stop offset="0.924" stop-color="#99001b"/><stop offset="1.000" stop-color="#990015"/></linearGradient><linearGradient id="c111" gradientUnits="userSpaceOnUse" x1="1018" x2="1401" y1="0" y2="0"><stop offset="0.000" stop-color="#004399"/><stop offset="0.232" stop-color="#013299"/><stop offset="0.363" stop-color="#462599"/><stop offset="0.473" stop-color="#8f1899"/><stop offset="0.488" stop-color="#991597"/><stop offset="0.548" stop-color="#990973"/><stop offset="0.634" stop-color="#990052"/><stop offset="0.760" stop-color="#990035"/><stop offset="0.956" stop-color="#99001b"/><stop offset="1.000" stop-color="#990017"/></linearGradient><linearGradient id="c112" gradientUnits="userSpaceOnUse" x1="1019" x2="1392" y1="0" y2="0"><stop offset="0.000" stop-color="#004099"/><stop offset="0.233" stop-color="#012f99"/><stop offset="0.367" stop-color="#462299"/><stop offset="0.483" stop-color="#8f1499"/><stop offset="0.499" stop-color="#991298"/><stop offset="0.563" stop-color="#990672"/><stop offset="0.635" stop-color="#990057"/><stop offset="0.759" stop-color="#990039"/><stop offset="0.949" stop-color="#99001f"/><stop offset="1.000" stop-color="#99001a"/></linearGradient><linearGradient id="c113" gradientUnits="userSpaceOnUse" x1="1020" x2="1383" y1="0" y2="0"><stop offset="0.000" stop-color="#003d99"/><stop offset="0.234" stop-color="#022c99"/><stop offset="0.375" stop-color="#461f99"/><stop offset="0.493" stop-color="#8f1199"/><stop offset="0.510" stop-color="#990e98"/><stop offset="0.576" stop-color="#990473"/><stop offset="0.645" stop-color="#990059"/><stop offset="0.769" stop-color="#99003b"/><stop offset="0.959" stop-color="#990021"/><stop offset="1.000" stop-color="#99001d"/></linearGradient><linearGradient id="c114" gradientUnits="userSpaceOnUse" x1="1022" x2="1374" y1="0" y2="0"><stop offset="0.000" stop-color="#003a99"/><stop offset="0.233" stop-color="#022999"/><stop offset="0.381" stop-color="#471b99"/><stop offset="0.506" stop-color="#900d99"/><stop offset="0.523" stop-color="#990b96"/><stop offset="0.591" stop-color="#990172"/><stop offset="0.688" stop-color="#990052"/><stop offset="0.830" stop-color="#990035"/><stop offset="1.000" stop-color="#990020"/></linearGradient><linearGradient id="c115" gradientUnits="userSpaceOnUse" x1="1023" x2="1364" y1="0" y2="0"><stop offset="0.000" stop-color="#003799"/><stop offset="0.235" stop-color="#022699"/><stop offset="0.387" stop-color="#461999"/><stop offset="0.516" stop-color="#8e0a99"/><stop offset="0.537" stop-color="#990797"/><stop offset="0.610" stop-color="#990072"/><stop offset="0.713" stop-color="#990051"/><stop offset="0.862" stop-color="#990034"/><stop offset="1.000" stop-color="#990023"/></linearGradient><linearGradient id="c116" gradientUnits="userSpaceOnUse" x1="1025" x2="1355" y1="0" y2="0"><stop offset="0.000" stop-color="#003499"/><stop offset="0.230" stop-color="#012499"/><stop offset="0.391" stop-color="#451699"/><stop offset="0.527" stop-color="#8e0799"/><stop offset="0.548" stop-color="#990497"/><stop offset="0.609" stop-color="#990079"/><stop offset="0.709" stop-color="#990057"/><stop offset="0.855" stop-color="#990039"/><stop offset="1.000" stop-color="#990027"/></linearGradient><linearGradient id="c117" gradientUnits="userSpaceOnUse" x1="1026" x2="1346" y1="0" y2="0"><stop offset="0.000" stop-color="#003199"/><stop offset="0.231" stop-color="#012299"/><stop offset="0.400" stop-color="#461399"/><stop offset="0.544" stop-color="#900499"/><stop offset="0.562" stop-color="#990198"/><stop offset="0.641" stop-color="#990073"/><stop offset="0.750" stop-color="#990052"/><stop offset="0.912" stop-color="#990035"/><stop offset="1.000" stop-color="#99002a"/></linearGradient><linearGradient id="c118" gradientUnits="userSpaceOnUse" x1="1028" x2="1337" y1="0" y2="0"><stop offset="0.000" stop-color="#002e99"/><stop offset="0.230" stop-color="#011f99"/><stop offset="0.408" stop-color="#471099"/><stop offset="0.557" stop-color="#8f0199"/><stop offset="0.579" stop-color="#990096"/><stop offset="0.663" stop-color="#990072"/><stop offset="0.780" stop-color="#990051"/><stop offset="0.951" stop-color="#990034"/><stop offset="1.000" stop-color="#99002e"/></linearGradient><linearGradient id="c119" gradientUnits="userSpaceOnUse" x1="1029" x2="1327" y1="0" y2="0"><stop offset="0.000" stop-color="#002b99"/><stop offset="0.232" stop-color="#021d99"/><stop offset="0.416" stop-color="#460e99"/><stop offset="0.574" stop-color="#8f0099"/><stop offset="0.597" stop-color="#990097"/><stop offset="0.685" stop-color="#990072"/><stop offset="0.809" stop-color="#990051"/><stop offset="0.990" stop-color="#990034"/><stop offset="1.000" stop-color="#990033"/></linearGradient><linearGradient id="c120" gradientUnits="userSpaceOnUse" x1="1031" x2="1318" y1="0" y2="0"><stop offset="0.000" stop-color="#002999"/><stop offset="0.230" stop-color="#021a99"/><stop offset="0.425" stop-color="#470b99"/><stop offset="0.564" stop-color="#830099"/><stop offset="0.613" stop-color="#990097"/><stop offset="0.704" stop-color="#990073"/><stop offset="0.833" stop-color="#990052"/><stop offset="1.000" stop-color="#990037"/></linearGradient><linearGradient id="c121" gradientUnits="userSpaceOnUse" x1="1032" x2="1309" y1="0" y2="0"><stop offset="0.000" stop-color="#002699"/><stop offset="0.231" stop-color="#021899"/><stop offset="0.437" stop-color="#470899"/><stop offset="0.556" stop-color="#780099"/><stop offset="0.632" stop-color="#990097"/><stop offset="0.729" stop-color="#990072"/><stop offset="0.866" stop-color="#990051"/><stop offset="1.000" stop-color="#99003c"/></linearGradient><linearGradient id="c122" gradientUnits="userSpaceOnUse" x1="1034" x2="1300" y1="0" y2="0"><stop offset="0.000" stop-color="#002399"/><stop offset="0.226" stop-color="#011699"/><stop offset="0.444" stop-color="#470699"/><stop offset="0.545" stop-color="#6d0099"/><stop offset="0.650" stop-color="#990098"/><stop offset="0.752" stop-color="#990073"/><stop offset="0.895" stop-color="#990052"/><stop offset="1.000" stop-color="#990041"/></linearGradient><linearGradient id="c123" gradientUnits="userSpaceOnUse" x1="1035" x2="1290" y1="0" y2="0"><stop offset="0.000" stop-color="#002199"/><stop offset="0.227" stop-color="#011499"/><stop offset="0.455" stop-color="#460499"/><stop offset="0.557" stop-color="#6a0099"/><stop offset="0.675" stop-color="#990098"/><stop offset="0.780" stop-color="#990073"/><stop offset="0.929" stop-color="#990052"/><stop offset="1.000" stop-color="#990047"/></linearGradient><linearGradient id="c124" gradientUnits="userSpaceOnUse" x1="1037" x2="1281" y1="0" y2="0"><stop offset="0.000" stop-color="#001e99"/><stop offset="0.225" stop-color="#011299"/><stop offset="0.467" stop-color="#470199"/><stop offset="0.672" stop-color="#900099"/><stop offset="0.701" stop-color="#990097"/><stop offset="0.816" stop-color="#990072"/><stop offset="0.975" stop-color="#990051"/><stop offset="1.000" stop-color="#99004d"/></linearGradient><linearGradient id="c125" gradientUnits="userSpaceOnUse" x1="1039" x2="1272" y1="0" y2="0"><stop offset="0.000" stop-color="#001b99"/><stop offset="0.223" stop-color="#020f99"/><stop offset="0.481" stop-color="#470099"/><stop offset="0.695" stop-color="#8f0099"/><stop offset="0.725" stop-color="#990097"/><stop offset="0.845" stop-color="#990072"/><stop offset="1.000" stop-color="#990054"/></linearGradient><linearGradient id="c126" gradientUnits="userSpaceOnUse" x1="1040" x2="1262" y1="0" y2="0"><stop offset="0.000" stop-color="#001999"/><stop offset="0.225" stop-color="#020d99"/><stop offset="0.482" stop-color="#430099"/><stop offset="0.716" stop-color="#8c0099"/><stop offset="0.757" stop-color="#990098"/><stop offset="0.883" stop-color="#990073"/><stop offset="1.000" stop-color="#99005c"/></linearGradient><linearGradient id="c127" gradientUnits="userSpaceOnUse" x1="1042" x2="1253" y1="0" y2="0"><stop offset="0.000" stop-color="#001699"/><stop offset="0.223" stop-color="#020b99"/><stop offset="0.460" stop-color="#390099"/><stop offset="0.711" stop-color="#810099"/><stop offset="0.787" stop-color="#990098"/><stop offset="0.924" stop-color="#990073"/><stop offset="1.000" stop-color="#990064"/></linearGradient><linearGradient id="c128" gradientUnits="userSpaceOnUse" x1="1044" x2="1244" y1="0" y2="0"><stop offset="0.000" stop-color="#001499"/><stop offset="0.215" stop-color="#010a99"/><stop offset="0.440" stop-color="#320099"/><stop offset="0.715" stop-color="#7a0099"/><stop offset="0.820" stop-color="#990098"/><stop offset="0.965" stop-color="#990073"/><stop offset="1.000" stop-color="#99006c"/></linearGradient><linearGradient id="c129" gradientUnits="userSpaceOnUse" x1="1046" x2="1235" y1="0" y2="0"><stop offset="0.000" stop-color="#001199"/><stop offset="0.212" stop-color="#010899"/><stop offset="0.418" stop-color="#2b0099"/><stop offset="0.714" stop-color="#710099"/><stop offset="0.862" stop-color="#990097"/><stop offset="1.000" stop-color="#990076"/></linearGradient><linearGradient id="c130" gradientUnits="userSpaceOnUse" x1="1048" x2="1225" y1="0" y2="0"><stop offset="0.000" stop-color="#000f99"/><stop offset="0.209" stop-color="#020699"/><stop offset="0.401" stop-color="#250099"/><stop offset="0.729" stop-color="#6c0099"/><stop offset="0.910" stop-color="#990097"/><stop offset="1.000" stop-color="#990082"/></linearGradient><linearGradient id="c131" gradientUnits="userSpaceOnUse" x1="1050" x2="1216" y1="0" y2="0"><stop offset="0.000" stop-color="#000c99"/><stop offset="0.205" stop-color="#020499"/><stop offset="0.392" stop-color="#210099"/><stop offset="0.747" stop-color="#680099"/><stop offset="0.958" stop-color="#990098"/><stop offset="1.000" stop-color="#99008e"/></linearGradient><linearGradient id="c132" gradientUnits="userSpaceOnUse" x1="1052" x2="1207" y1="0" y2="0"><stop offset="0.000" stop-color="#000a99"/><stop offset="0.200" stop-color="#020299"/><stop offset="0.619" stop-color="#470099"/><stop offset="0.974" stop-color="#910099"/><stop offset="1.000" stop-color="#970099"/></linearGradient><linearGradient id="c133" gradientUnits="userSpaceOnUse" x1="1054" x2="1198" y1="0" y2="0"><stop offset="0.000" stop-color="#000799"/><stop offset="0.194" stop-color="#020199"/><stop offset="0.646" stop-color="#470099"/><stop offset="1.000" stop-color="#8a0099"/></linearGradient><linearGradient id="c134" gradientUnits="userSpaceOnUse" x1="1056" x2="1188" y1="0" y2="0"><stop offset="0.000" stop-color="#000599"/><stop offset="0.189" stop-color="#020099"/><stop offset="0.689" stop-color="#470099"/><stop offset="1.000" stop-color="#7b0099"/></linearGradient><linearGradient id="c135" gradientUnits="userSpaceOnUse" x1="1059" x2="1179" y1="0" y2="0"><stop offset="0.000" stop-color="#000299"/><stop offset="0.167" stop-color="#010099"/><stop offset="0.725" stop-color="#470099"/><stop offset="1.000" stop-color="#6f0099"/></linearGradient><linearGradient id="c136" gradientUnits="userSpaceOnUse" x1="1061" x2="1170" y1="0" y2="0"><stop offset="0.000" stop-color="#000099"/><stop offset="0.156" stop-color="#020099"/><stop offset="0.780" stop-color="#470099"/><stop offset="1.000" stop-color="#640099"/></linearGradient><linearGradient id="c137" gradientUnits="userSpaceOnUse" x1="1064" x2="1161" y1="0" y2="0"><stop offset="0.000" stop-color="#000099"/><stop offset="0.134" stop-color="#020099"/><stop offset="0.835" stop-color="#470099"/><stop offset="1.000" stop-color="#590099"/></linearGradient><linearGradient id="c138" gradientUnits="userSpaceOnUse" x1="1067" x2="1151" y1="0" y2="0"><stop offset="0.000" stop-color="#000099"/><stop offset="0.119" stop-color="#030099"/><stop offset="0.940" stop-color="#480099"/><stop offset="1.000" stop-color="#4e0099"/></linearGradient><linearGradient id="c139" gradientUnits="userSpaceOnUse" x1="1071" x2="1142" y1="0" y2="0"><stop offset="0.000" stop-color="#000099"/><stop offset="0.761" stop-color="#320099"/><stop offset="1.000" stop-color="#440099"/></linearGradient><linearGradient id="c140" gradientUnits="userSpaceOnUse" x1="1075" x2="1133" y1="0" y2="0"><stop offset="0.000" stop-color="#030099"/><stop offset="1.000" stop-color="#3b0099"/></linearGradient><linearGradient id="c141" gradientUnits="userSpaceOnUse" x1="1079" x2="1124" y1="0" y2="0"><stop offset="0.000" stop-color="#080099"/><stop offset="1.000" stop-color="#320099"/></linearGradient><linearGradient id="c142" gradientUnits="userSpaceOnUse" x1="1084" x2="1114" y1="0" y2="0"><stop offset="0.000" stop-color="#0d0099"/><stop offset="1.000" stop-color="#290099"/></linearGradient><linearGradient id="c143" gradientUnits="userSpaceOnUse" x1="1089" x2="1105" y1="0" y2="0"><stop offset="0.000" stop-color="#120099"/><stop offset="1.000" stop-color="#210099"/></linearGradient><linearGradient id="c144" gradientUnits="userSpaceOnUse" x1="1187" x2="1194" y1="0" y2="0"><stop offset="0.000" stop-color="#00ff01"/><stop offset="1.000" stop-color="#06ff00"/></linearGradient><linearGradient id="c145" gradientUnits="userSpaceOnUse" x1="1186" x2="1198" y1="0" y2="0"><stop offset="0.000" stop-color="#00ff03"/><stop offset="0.667" stop-color="#08ff00"/><stop offset="1.000" stop-color="#0eff00"/></linearGradient><linearGradient id="c146" gradientUnits="userSpaceOnUse" x1="1185" x2="1201" y1="0" y2="0"><stop offset="0.000" stop-color="#00ff05"/><stop offset="0.562" stop-color="#09ff01"/><stop offset="1.000" stop-color="#14ff00"/></linearGradient><linearGradient id="c147" gradientUnits="userSpaceOnUse" x1="1185" x2="1205" y1="0" y2="0"><stop offset="0.000" stop-color="#00ff06"/><stop offset="0.550" stop-color="#0dff02"/><stop offset="1.000" stop-color="#1cff00"/></linearGradient><linearGradient id="c148" gradientUnits="userSpaceOnUse" x1="1184" x2="1208" y1="0" y2="0"><stop offset="0.000" stop-color="#00ff08"/><stop offset="0.375" stop-color="#0aff05"/><stop offset="1.000" stop-color="#23ff00"/></linearGradient><linearGradient id="c149" gradientUnits="userSpaceOnUse" x1="1183" x2="1212" y1="0" y2="0"><stop offset="0.000" stop-color="#00ff0a"/><stop offset="0.276" stop-color="#08ff07"/><stop offset="1.000" stop-color="#2bff00"/></linearGradient><linearGradient id="c150" gradientUnits="userSpaceOnUse" x1="1182" x2="1216" y1="0" y2="0"><stop offset="0.000" stop-color="#00ff0d"/><stop offset="0.235" stop-color="#08ff09"/><stop offset="1.000" stop-color="#34ff00"/></linearGradient><linearGradient id="c151" gradientUnits="userSpaceOnUse" x1="1181" x2="1219" y1="0" y2="0"><stop offset="0.000" stop-color="#00ff0f"/><stop offset="0.211" stop-color="#08ff0b"/><stop offset="1.000" stop-color="#3cff00"/></linearGradient><linearGradient id="c152" gradientUnits="userSpaceOnUse" x1="1181" x2="1223" y1="0" y2="0"><stop offset="0.000" stop-color="#00ff10"/><stop offset="0.214" stop-color="#0bff0d"/><stop offset="1.000" stop-color="#45ff00"/></linearGradient><linearGradient id="c153" gradientUnits="userSpaceOnUse" x1="1180" x2="1226" y1="0" y2="0"><stop offset="0.000" stop-color="#00ff12"/><stop offset="0.174" stop-color="#09ff0f"/><stop offset="1.000" stop-color="#4dff00"/></linearGradient><linearGradient id="c154" gradientUnits="userSpaceOnUse" x1="1179" x2="1230" y1="0" y2="0"><stop offset="0.000" stop-color="#00ff15"/><stop offset="0.137" stop-color="#07ff12"/><stop offset="1.000" stop-color="#57ff00"/></linearGradient><linearGradient id="c155" gradientUnits="userSpaceOnUse" x1="1178" x2="1234" y1="0" y2="0"><stop offset="0.000" stop-color="#00ff17"/><stop offset="0.125" stop-color="#06ff14"/><stop offset="1.000" stop-color="#61ff00"/></linearGradient><linearGradient id="c156" gradientUnits="userSpaceOnUse" x1="1178" x2="1237" y1="0" y2="0"><stop offset="0.000" stop-color="#00ff19"/><stop offset="0.169" stop-color="#0dff15"/><stop offset="1.000" stop-color="#6aff00"/></linearGradient><linearGradient id="c157" gradientUnits="userSpaceOnUse" x1="1177" x2="1241" y1="0" y2="0"><stop offset="0.000" stop-color="#00ff1b"/><stop offset="0.141" stop-color="#0bff17"/><stop offset="1.000" stop-color="#75ff00"/></linearGradient><linearGradient id="c158" gradientUnits="userSpaceOnUse" x1="1176" x2="1244" y1="0" y2="0"><stop offset="0.000" stop-color="#00ff1d"/><stop offset="0.103" stop-color="#07ff1a"/><stop offset="0.926" stop-color="#73ff01"/><stop offset="1.000" stop-color="#7eff00"/></linearGradient><linearGradient id="c159" gradientUnits="userSpaceOnUse" x1="1175" x2="1248" y1="0" y2="0"><stop offset="0.000" stop-color="#00ff20"/><stop offset="0.096" stop-color="#07ff1d"/><stop offset="0.863" stop-color="#74ff03"/><stop offset="1.000" stop-color="#8aff00"/></linearGradient><linearGradient id="c160" gradientUnits="userSpaceOnUse" x1="1174" x2="1252" y1="0" y2="0"><stop offset="0.000" stop-color="#00ff22"/><stop offset="0.090" stop-color="#07ff1f"/><stop offset="0.795" stop-color="#72ff06"/><stop offset="1.000" stop-color="#97ff00"/></linearGradient><linearGradient id="c161" gradientUnits="userSpaceOnUse" x1="1174" x2="1255" y1="0" y2="0"><stop offset="0.000" stop-color="#00ff24"/><stop offset="0.111" stop-color="#0cff20"/><stop offset="0.790" stop-color="#7aff07"/><stop offset="1.000" stop-color="#a1ff00"/></linearGradient><linearGradient id="c162" gradientUnits="userSpaceOnUse" x1="1173" x2="1259" y1="0" y2="0"><stop offset="0.000" stop-color="#00ff26"/><stop offset="0.093" stop-color="#0aff23"/><stop offset="0.721" stop-color="#76ff0a"/><stop offset="1.000" stop-color="#aeff00"/></linearGradient><linearGradient id="c163" gradientUnits="userSpaceOnUse" x1="1172" x2="1263" y1="0" y2="0"><stop offset="0.000" stop-color="#00ff29"/><stop offset="0.077" stop-color="#07ff26"/><stop offset="0.670" stop-color="#74ff0e"/><stop offset="1.000" stop-color="#bcff00"/></linearGradient><linearGradient id="c164" gradientUnits="userSpaceOnUse" x1="1171" x2="1266" y1="0" y2="0"><stop offset="0.000" stop-color="#00ff2b"/><stop offset="0.063" stop-color="#05ff29"/><stop offset="0.632" stop-color="#73ff11"/><stop offset="1.000" stop-color="#c8ff00"/></linearGradient><linearGradient id="c165" gradientUnits="userSpaceOnUse" x1="1170" x2="1270" y1="0" y2="0"><stop offset="0.000" stop-color="#00ff2e"/><stop offset="0.070" stop-color="#07ff2b"/><stop offset="0.600" stop-color="#73ff13"/><stop offset="1.000" stop-color="#d7ff00"/></linearGradient><linearGradient id="c166" gradientUnits="userSpaceOnUse" x1="1170" x2="1273" y1="0" y2="0"><stop offset="0.000" stop-color="#00ff30"/><stop offset="0.078" stop-color="#0aff2d"/><stop offset="0.583" stop-color="#76ff15"/><stop offset="1.000" stop-color="#e4ff00"/></linearGradient><linearGradient id="c167" gradientUnits="userSpaceOnUse" x1="1169" x2="1277" y1="0" y2="0"><stop offset="0.000" stop-color="#00ff33"/><stop offset="0.065" stop-color="#08ff30"/><stop offset="0.546" stop-color="#75ff19"/><stop offset="0.954" stop-color="#e6ff00"/><stop offset="1.000" stop-color="#f4ff00"/></linearGradient><linearGradient id="c168" gradientUnits="userSpaceOnUse" x1="1168" x2="1281" y1="0" y2="0"><stop offset="0.000" stop-color="#00ff36"/><stop offset="0.053" stop-color="#06ff33"/><stop offset="0.513" stop-color="#73ff1c"/><stop offset="0.903" stop-color="#e5ff04"/><stop offset="0.991" stop-color="#fffc00"/><stop offset="1.000" stop-color="#fff900"/></linearGradient><linearGradient id="c169" gradientUnits="userSpaceOnUse" x1="1167" x2="1284" y1="0" y2="0"><stop offset="0.000" stop-color="#00ff38"/><stop offset="0.051" stop-color="#06ff36"/><stop offset="0.487" stop-color="#71ff1f"/><stop offset="0.863" stop-color="#e4ff07"/><stop offset="0.949" stop-color="#fffd01"/><stop offset="1.000" stop-color="#ffec00"/></linearGradient><linearGradient id="c170" gradientUnits="userSpaceOnUse" x1="1166" x2="1288" y1="0" y2="0"><stop offset="0.000" stop-color="#00ff3b"/><stop offset="0.049" stop-color="#05ff39"/><stop offset="0.467" stop-color="#72ff22"/><stop offset="0.820" stop-color="#e3ff0b"/><stop offset="0.902" stop-color="#fffd05"/><stop offset="1.000" stop-color="#ffdd00"/></linearGradient><linearGradient id="c171" gradientUnits="userSpaceOnUse" x1="1166" x2="1291" y1="0" y2="0"><stop offset="0.000" stop-color="#00ff3e"/><stop offset="0.064" stop-color="#0bff3a"/><stop offset="0.464" stop-color="#77ff24"/><stop offset="0.808" stop-color="#ebff0d"/><stop offset="0.872" stop-color="#fffb08"/><stop offset="1.000" stop-color="#ffd100"/></linearGradient><linearGradient id="c172" gradientUnits="userSpaceOnUse" x1="1165" x2="1295" y1="0" y2="0"><stop offset="0.000" stop-color="#00ff40"/><stop offset="0.054" stop-color="#08ff3e"/><stop offset="0.438" stop-color="#76ff28"/><stop offset="0.762" stop-color="#e7ff11"/><stop offset="0.831" stop-color="#fffc0b"/><stop offset="1.000" stop-color="#ffc500"/></linearGradient><linearGradient id="c173" gradientUnits="userSpaceOnUse" x1="1164" x2="1299" y1="0" y2="0"><stop offset="0.000" stop-color="#00ff43"/><stop offset="0.044" stop-color="#06ff41"/><stop offset="0.415" stop-color="#74ff2b"/><stop offset="0.726" stop-color="#e6ff15"/><stop offset="0.793" stop-color="#fffd0f"/><stop offset="0.963" stop-color="#ffc300"/><stop offset="1.000" stop-color="#ffb900"/></linearGradient><linearGradient id="c174" gradientUnits="userSpaceOnUse" x1="1163" x2="1302" y1="0" y2="0"><stop offset="0.000" stop-color="#00ff46"/><stop offset="0.043" stop-color="#06ff44"/><stop offset="0.396" stop-color="#72ff2f"/><stop offset="0.698" stop-color="#e5ff19"/><stop offset="0.763" stop-color="#fffe13"/><stop offset="0.928" stop-color="#ffc303"/><stop offset="1.000" stop-color="#ffaf00"/></linearGradient><linearGradient id="c175" gradientUnits="userSpaceOnUse" x1="1162" x2="1306" y1="0" y2="0"><stop offset="0.000" stop-color="#00ff49"/><stop offset="0.042" stop-color="#05ff47"/><stop offset="0.382" stop-color="#73ff32"/><stop offset="0.667" stop-color="#e4ff1d"/><stop offset="0.729" stop-color="#fffe17"/><stop offset="0.882" stop-color="#ffc507"/><stop offset="1.000" stop-color="#ffa500"/></linearGradient><linearGradient id="c176" gradientUnits="userSpaceOnUse" x1="1162" x2="1309" y1="0" y2="0"><stop offset="0.000" stop-color="#00ff4c"/><stop offset="0.048" stop-color="#09ff49"/><stop offset="0.374" stop-color="#76ff35"/><stop offset="0.653" stop-color="#e9ff1f"/><stop offset="0.707" stop-color="#fffc1a"/><stop offset="0.857" stop-color="#ffc309"/><stop offset="1.000" stop-color="#ff9d00"/></linearGradient><linearGradient id="c177" gradientUnits="userSpaceOnUse" x1="1161" x2="1313" y1="0" y2="0"><stop offset="0.000" stop-color="#00ff4f"/><stop offset="0.039" stop-color="#07ff4d"/><stop offset="0.355" stop-color="#74ff39"/><stop offset="0.625" stop-color="#e8ff23"/><stop offset="0.678" stop-color="#fffd1e"/><stop offset="0.822" stop-color="#ffc30d"/><stop offset="1.000" stop-color="#ff9300"/></linearGradient><linearGradient id="c178" gradientUnits="userSpaceOnUse" x1="1160" x2="1317" y1="0" y2="0"><stop offset="0.000" stop-color="#00ff52"/><stop offset="0.038" stop-color="#06ff50"/><stop offset="0.338" stop-color="#72ff3d"/><stop offset="0.592" stop-color="#e3ff28"/><stop offset="0.650" stop-color="#fffe23"/><stop offset="0.790" stop-color="#ffc310"/><stop offset="0.981" stop-color="#ff8f00"/><stop offset="1.000" stop-color="#ff8b00"/></linearGradient><linearGradient id="c179" gradientUnits="userSpaceOnUse" x1="1159" x2="1320" y1="0" y2="0"><stop offset="0.000" stop-color="#00ff56"/><stop offset="0.031" stop-color="#04ff54"/><stop offset="0.323" stop-color="#70ff41"/><stop offset="0.571" stop-color="#e2ff2c"/><stop offset="0.634" stop-color="#fffb26"/><stop offset="0.770" stop-color="#ffc113"/><stop offset="0.957" stop-color="#ff8d01"/><stop offset="1.000" stop-color="#ff8400"/></linearGradient><linearGradient id="c180" gradientUnits="userSpaceOnUse" x1="1158" x2="1324" y1="0" y2="0"><stop offset="0.000" stop-color="#00ff59"/><stop offset="0.036" stop-color="#06ff57"/><stop offset="0.313" stop-color="#71ff44"/><stop offset="0.554" stop-color="#e4ff30"/><stop offset="0.608" stop-color="#fffc2a"/><stop offset="0.741" stop-color="#ffc116"/><stop offset="0.922" stop-color="#ff8d04"/><stop offset="1.000" stop-color="#ff7c00"/></linearGradient><linearGradient id="c181" gradientUnits="userSpaceOnUse" x1="1158" x2="1328" y1="0" y2="0"><stop offset="0.000" stop-color="#00ff5c"/><stop offset="0.035" stop-color="#07ff5a"/><stop offset="0.306" stop-color="#74ff47"/><stop offset="0.535" stop-color="#e7ff34"/><stop offset="0.582" stop-color="#fffd2f"/><stop offset="0.706" stop-color="#ffc31a"/><stop offset="0.876" stop-color="#ff8f08"/><stop offset="1.000" stop-color="#ff7500"/></linearGradient><linearGradient id="c182" gradientUnits="userSpaceOnUse" x1="1157" x2="1331" y1="0" y2="0"><stop offset="0.000" stop-color="#00ff60"/><stop offset="0.034" stop-color="#07ff5d"/><stop offset="0.293" stop-color="#73ff4b"/><stop offset="0.517" stop-color="#e5ff38"/><stop offset="0.563" stop-color="#fffe33"/><stop offset="0.684" stop-color="#ffc41e"/><stop offset="0.851" stop-color="#ff8f0a"/><stop offset="1.000" stop-color="#ff6f00"/></linearGradient><linearGradient id="c183" gradientUnits="userSpaceOnUse" x1="1156" x2="1335" y1="0" y2="0"><stop offset="0.000" stop-color="#00ff63"/><stop offset="0.028" stop-color="#05ff61"/><stop offset="0.279" stop-color="#71ff50"/><stop offset="0.492" stop-color="#e1ff3d"/><stop offset="0.542" stop-color="#ffff38"/><stop offset="0.659" stop-color="#ffc421"/><stop offset="0.821" stop-color="#ff8e0d"/><stop offset="1.000" stop-color="#ff6800"/></linearGradient><linearGradient id="c184" gradientUnits="userSpaceOnUse" x1="1155" x2="1338" y1="0" y2="0"><stop offset="0.000" stop-color="#00ff67"/><stop offset="0.027" stop-color="#04ff65"/><stop offset="0.273" stop-color="#71ff53"/><stop offset="0.481" stop-color="#e3ff41"/><stop offset="0.530" stop-color="#fffc3c"/><stop offset="0.645" stop-color="#ffc224"/><stop offset="0.803" stop-color="#ff8d0f"/><stop offset="1.000" stop-color="#ff6300"/></linearGradient><linearGradient id="c185" gradientUnits="userSpaceOnUse" x1="1154" x2="1342" y1="0" y2="0"><stop offset="0.000" stop-color="#00ff6a"/><stop offset="0.032" stop-color="#06ff68"/><stop offset="0.266" stop-color="#72ff57"/><stop offset="0.468" stop-color="#e5ff45"/><stop offset="0.511" stop-color="#fffd41"/><stop offset="0.617" stop-color="#ffc429"/><stop offset="0.766" stop-color="#ff8f13"/><stop offset="0.979" stop-color="#ff6000"/><stop offset="1.000" stop-color="#ff5d00"/></linearGradient><linearGradient id="c186" gradientUnits="userSpaceOnUse" x1="1154" x2="1346" y1="0" y2="0"><stop offset="0.000" stop-color="#00ff6e"/><stop offset="0.031" stop-color="#08ff6c"/><stop offset="0.260" stop-color="#76ff5b"/><stop offset="0.453" stop-color="#e8ff4a"/><stop offset="0.490" stop-color="#fffe46"/><stop offset="0.594" stop-color="#ffc42d"/><stop offset="0.740" stop-color="#ff8f16"/><stop offset="0.948" stop-color="#ff6002"/><stop offset="1.000" stop-color="#ff5700"/></linearGradient><linearGradient id="c187" gradientUnits="userSpaceOnUse" x1="1153" x2="1349" y1="0" y2="0"><stop offset="0.000" stop-color="#00ff72"/><stop offset="0.026" stop-color="#05ff70"/><stop offset="0.245" stop-color="#71ff60"/><stop offset="0.434" stop-color="#e3ff4f"/><stop offset="0.474" stop-color="#ffff4b"/><stop offset="0.577" stop-color="#ffc431"/><stop offset="0.714" stop-color="#ff901a"/><stop offset="0.913" stop-color="#ff6105"/><stop offset="1.000" stop-color="#ff5200"/></linearGradient><linearGradient id="c188" gradientUnits="userSpaceOnUse" x1="1152" x2="1353" y1="0" y2="0"><stop offset="0.000" stop-color="#00ff75"/><stop offset="0.025" stop-color="#05ff74"/><stop offset="0.239" stop-color="#71ff64"/><stop offset="0.418" stop-color="#e2ff54"/><stop offset="0.463" stop-color="#fffc4e"/><stop offset="0.562" stop-color="#ffc234"/><stop offset="0.697" stop-color="#ff8e1c"/><stop offset="0.891" stop-color="#ff5f07"/><stop offset="1.000" stop-color="#ff4d00"/></linearGradient><linearGradient id="c189" gradientUnits="userSpaceOnUse" x1="1151" x2="1356" y1="0" y2="0"><stop offset="0.000" stop-color="#00ff79"/><stop offset="0.024" stop-color="#04ff78"/><stop offset="0.229" stop-color="#6fff69"/><stop offset="0.405" stop-color="#e1ff59"/><stop offset="0.449" stop-color="#fffd54"/><stop offset="0.546" stop-color="#ffc238"/><stop offset="0.678" stop-color="#ff8e1f"/><stop offset="0.868" stop-color="#ff5f09"/><stop offset="1.000" stop-color="#ff4900"/></linearGradient><linearGradient id="c190" gradientUnits="userSpaceOnUse" x1="1150" x2="1360" y1="0" y2="0"><stop offset="0.000" stop-color="#00ff7d"/><stop offset="0.024" stop-color="#04ff7c"/><stop offset="0.224" stop-color="#70ff6d"/><stop offset="0.395" stop-color="#e3ff5e"/><stop offset="0.433" stop-color="#fffe59"/><stop offset="0.524" stop-color="#ffc53d"/><stop offset="0.648" stop-color="#ff9124"/><stop offset="0.829" stop-color="#ff610d"/><stop offset="1.000" stop-color="#ff4400"/></linearGradient><linearGradient id="c191" gradientUnits="userSpaceOnUse" x1="1150" x2="1364" y1="0" y2="0"><stop offset="0.000" stop-color="#00ff81"/><stop offset="0.028" stop-color="#08ff7f"/><stop offset="0.220" stop-color="#74ff71"/><stop offset="0.383" stop-color="#e5ff62"/><stop offset="0.416" stop-color="#ffff5f"/><stop offset="0.505" stop-color="#ffc542"/><stop offset="0.626" stop-color="#ff9027"/><stop offset="0.799" stop-color="#ff6110"/><stop offset="1.000" stop-color="#ff4000"/></linearGradient><linearGradient id="c192" gradientUnits="userSpaceOnUse" x1="1149" x2="1367" y1="0" y2="0"><stop offset="0.000" stop-color="#00ff85"/><stop offset="0.023" stop-color="#05ff84"/><stop offset="0.211" stop-color="#72ff76"/><stop offset="0.372" stop-color="#e4ff68"/><stop offset="0.408" stop-color="#fffc63"/><stop offset="0.495" stop-color="#ffc245"/><stop offset="0.615" stop-color="#ff8e2a"/><stop offset="0.784" stop-color="#ff6011"/><stop offset="1.000" stop-color="#ff3c00"/></linearGradient><linearGradient id="c193" gradientUnits="userSpaceOnUse" x1="1148" x2="1371" y1="0" y2="0"><stop offset="0.000" stop-color="#00ff8a"/><stop offset="0.022" stop-color="#05ff88"/><stop offset="0.206" stop-color="#73ff7b"/><stop offset="0.359" stop-color="#e3ff6d"/><stop offset="0.395" stop-color="#fffd69"/><stop offset="0.480" stop-color="#ffc349"/><stop offset="0.596" stop-color="#ff8e2d"/><stop offset="0.762" stop-color="#ff5f14"/><stop offset="1.000" stop-color="#ff3800"/></linearGradient><linearGradient id="c194" gradientUnits="userSpaceOnUse" x1="1147" x2="1374" y1="0" y2="0"><stop offset="0.000" stop-color="#00ff8e"/><stop offset="0.022" stop-color="#04ff8d"/><stop offset="0.198" stop-color="#70ff80"/><stop offset="0.348" stop-color="#e1ff73"/><stop offset="0.383" stop-color="#fffe6f"/><stop offset="0.463" stop-color="#ffc54f"/><stop offset="0.573" stop-color="#ff9132"/><stop offset="0.731" stop-color="#ff6218"/><stop offset="0.969" stop-color="#ff3801"/><stop offset="1.000" stop-color="#ff3400"/></linearGradient><linearGradient id="c195" gradientUnits="userSpaceOnUse" x1="1146" x2="1378" y1="0" y2="0"><stop offset="0.000" stop-color="#00ff93"/><stop offset="0.022" stop-color="#04ff91"/><stop offset="0.194" stop-color="#71ff85"/><stop offset="0.341" stop-color="#e4ff78"/><stop offset="0.371" stop-color="#ffff75"/><stop offset="0.453" stop-color="#ffc352"/><stop offset="0.560" stop-color="#ff8f35"/><stop offset="0.716" stop-color="#ff601a"/><stop offset="0.948" stop-color="#ff3702"/><stop offset="1.000" stop-color="#ff3000"/></linearGradient><linearGradient id="c196" gradientUnits="userSpaceOnUse" x1="1146" x2="1382" y1="0" y2="0"><stop offset="0.000" stop-color="#00ff97"/><stop offset="0.021" stop-color="#06ff96"/><stop offset="0.186" stop-color="#72ff8a"/><stop offset="0.326" stop-color="#e2ff7e"/><stop offset="0.360" stop-color="#fffd79"/><stop offset="0.436" stop-color="#ffc357"/><stop offset="0.542" stop-color="#ff8e38"/><stop offset="0.695" stop-color="#ff5f1d"/><stop offset="0.924" stop-color="#ff3604"/><stop offset="1.000" stop-color="#ff2d00"/></linearGradient><linearGradient id="c197" gradientUnits="userSpaceOnUse" x1="1145" x2="1385" y1="0" y2="0"><stop offset="0.000" stop-color="#00ff9c"/><stop offset="0.021" stop-color="#06ff9a"/><stop offset="0.183" stop-color="#73ff8f"/><stop offset="0.321" stop-color="#e5ff83"/><stop offset="0.350" stop-color="#fffe80"/><stop offset="0.425" stop-color="#ffc35c"/><stop offset="0.529" stop-color="#ff8e3c"/><stop offset="0.675" stop-color="#ff6020"/><stop offset="0.896" stop-color="#ff3707"/><stop offset="1.000" stop-color="#ff2a00"/></linearGradient><linearGradient id="c198" gradientUnits="userSpaceOnUse" x1="1144" x2="1389" y1="0" y2="0"><stop offset="0.000" stop-color="#00ffa1"/><stop offset="0.020" stop-color="#05ff9f"/><stop offset="0.176" stop-color="#71ff95"/><stop offset="0.310" stop-color="#e4ff89"/><stop offset="0.339" stop-color="#ffff86"/><stop offset="0.408" stop-color="#ffc663"/><stop offset="0.506" stop-color="#ff9142"/><stop offset="0.645" stop-color="#ff6224"/><stop offset="0.853" stop-color="#ff390a"/><stop offset="1.000" stop-color="#ff2600"/></linearGradient><linearGradient id="c199" gradientUnits="userSpaceOnUse" x1="1143" x2="1393" y1="0" y2="0"><stop offset="0.000" stop-color="#00ffa5"/><stop offset="0.020" stop-color="#05ffa4"/><stop offset="0.172" stop-color="#71ff9a"/><stop offset="0.300" stop-color="#e2ff90"/><stop offset="0.332" stop-color="#fffc8b"/><stop offset="0.404" stop-color="#ffc165"/><stop offset="0.500" stop-color="#ff8d43"/><stop offset="0.640" stop-color="#ff5e25"/><stop offset="0.852" stop-color="#ff350a"/><stop offset="1.000" stop-color="#ff2300"/></linearGradient><linearGradient id="c200" gradientUnits="userSpaceOnUse" x1="1142" x2="1396" y1="0" y2="0"><stop offset="0.000" stop-color="#00ffaa"/><stop offset="0.020" stop-color="#04ffa9"/><stop offset="0.165" stop-color="#6fffa0"/><stop offset="0.291" stop-color="#e1ff96"/><stop offset="0.323" stop-color="#fffd92"/><stop offset="0.390" stop-color="#ffc46c"/><stop offset="0.484" stop-color="#ff8e48"/><stop offset="0.618" stop-color="#ff6029"/><stop offset="0.819" stop-color="#ff370e"/><stop offset="1.000" stop-color="#ff2000"/></linearGradient><linearGradient id="c201" gradientUnits="userSpaceOnUse" x1="1142" x2="1400" y1="0" y2="0"><stop offset="0.000" stop-color="#00ffaf"/><stop offset="0.019" stop-color="#06ffae"/><stop offset="0.163" stop-color="#73ffa5"/><stop offset="0.283" stop-color="#e3ff9c"/><stop offset="0.310" stop-color="#fffe99"/><stop offset="0.376" stop-color="#ffc471"/><stop offset="0.465" stop-color="#ff904e"/><stop offset="0.593" stop-color="#ff612e"/><stop offset="0.787" stop-color="#ff3811"/><stop offset="1.000" stop-color="#ff1d00"/></linearGradient><linearGradient id="c202" gradientUnits="userSpaceOnUse" x1="1141" x2="1403" y1="0" y2="0"><stop offset="0.000" stop-color="#00ffb5"/><stop offset="0.019" stop-color="#06ffb4"/><stop offset="0.156" stop-color="#71ffab"/><stop offset="0.275" stop-color="#e2ffa3"/><stop offset="0.302" stop-color="#ffffa0"/><stop offset="0.366" stop-color="#ffc477"/><stop offset="0.454" stop-color="#ff8f52"/><stop offset="0.580" stop-color="#ff6031"/><stop offset="0.771" stop-color="#ff3713"/><stop offset="1.000" stop-color="#ff1a00"/></linearGradient><linearGradient id="c203" gradientUnits="userSpaceOnUse" x1="1140" x2="1407" y1="0" y2="0"><stop offset="0.000" stop-color="#00ffba"/><stop offset="0.015" stop-color="#03ffb9"/><stop offset="0.150" stop-color="#6effb2"/><stop offset="0.266" stop-color="#e1ffaa"/><stop offset="0.296" stop-color="#fffca5"/><stop offset="0.360" stop-color="#ffc17a"/><stop offset="0.446" stop-color="#ff8d55"/><stop offset="0.569" stop-color="#ff5f33"/><stop offset="0.757" stop-color="#ff3615"/><stop offset="1.000" stop-color="#ff1700"/></linearGradient><linearGradient id="c204" gradientUnits="userSpaceOnUse" x1="1139" x2="1411" y1="0" y2="0"><stop offset="0.000" stop-color="#00ffc0"/><stop offset="0.018" stop-color="#05ffbf"/><stop offset="0.151" stop-color="#73ffb8"/><stop offset="0.261" stop-color="#e3ffb0"/><stop offset="0.287" stop-color="#fffdad"/><stop offset="0.346" stop-color="#ffc482"/><stop offset="0.426" stop-color="#ff905c"/><stop offset="0.544" stop-color="#ff6138"/><stop offset="0.721" stop-color="#ff3819"/><stop offset="1.000" stop-color="#ff1500"/></linearGradient><linearGradient id="c205" gradientUnits="userSpaceOnUse" x1="1138" x2="1414" y1="0" y2="0"><stop offset="0.000" stop-color="#00ffc5"/><stop offset="0.018" stop-color="#04ffc4"/><stop offset="0.145" stop-color="#70ffbe"/><stop offset="0.254" stop-color="#e2ffb7"/><stop offset="0.279" stop-color="#fffeb5"/><stop offset="0.337" stop-color="#ffc488"/><stop offset="0.417" stop-color="#ff9060"/><stop offset="0.533" stop-color="#ff613b"/><stop offset="0.707" stop-color="#ff371b"/><stop offset="0.986" stop-color="#ff1400"/><stop offset="1.000" stop-color="#ff1200"/></linearGradient><linearGradient id="c206" gradientUnits="userSpaceOnUse" x1="1138" x2="1418" y1="0" y2="0"><stop offset="0.000" stop-color="#00ffcb"/><stop offset="0.018" stop-color="#07ffca"/><stop offset="0.143" stop-color="#74ffc4"/><stop offset="0.246" stop-color="#e5ffbe"/><stop offset="0.268" stop-color="#ffffbd"/><stop offset="0.325" stop-color="#ffc58f"/><stop offset="0.404" stop-color="#ff9065"/><stop offset="0.514" stop-color="#ff6140"/><stop offset="0.682" stop-color="#ff381f"/><stop offset="0.950" stop-color="#ff1402"/><stop offset="1.000" stop-color="#ff1000"/></linearGradient><linearGradient id="c207" gradientUnits="userSpaceOnUse" x1="1137" x2="1421" y1="0" y2="0"><stop offset="0.000" stop-color="#00ffd1"/><stop offset="0.014" stop-color="#03ffd0"/><stop offset="0.134" stop-color="#6effcb"/><stop offset="0.236" stop-color="#dfffc6"/><stop offset="0.264" stop-color="#fffcc2"/><stop offset="0.320" stop-color="#ffc292"/><stop offset="0.398" stop-color="#ff8d68"/><stop offset="0.507" stop-color="#ff5f42"/><stop offset="0.673" stop-color="#ff3620"/><stop offset="0.940" stop-color="#ff1303"/><stop offset="1.000" stop-color="#ff0d00"/></linearGradient><linearGradient id="c208" gradientUnits="userSpaceOnUse" x1="1136" x2="1425" y1="0" y2="0"><stop offset="0.000" stop-color="#00ffd7"/><stop offset="0.014" stop-color="#03ffd7"/><stop offset="0.131" stop-color="#6fffd2"/><stop offset="0.232" stop-color="#e2ffce"/><stop offset="0.256" stop-color="#fffdcb"/><stop offset="0.311" stop-color="#ffc299"/><stop offset="0.388" stop-color="#ff8d6c"/><stop offset="0.495" stop-color="#ff5e45"/><stop offset="0.657" stop-color="#ff3523"/><stop offset="0.917" stop-color="#ff1205"/><stop offset="1.000" stop-color="#ff0b00"/></linearGradient><linearGradient id="c209" gradientUnits="userSpaceOnUse" x1="1135" x2="1429" y1="0" y2="0"><stop offset="0.000" stop-color="#00ffdd"/><stop offset="0.014" stop-color="#02ffdd"/><stop offset="0.126" stop-color="#6dffd9"/><stop offset="0.224" stop-color="#e0ffd5"/><stop offset="0.248" stop-color="#fffed4"/><stop offset="0.299" stop-color="#ffc5a2"/><stop offset="0.371" stop-color="#ff9074"/><stop offset="0.473" stop-color="#ff614c"/><stop offset="0.626" stop-color="#ff3828"/><stop offset="0.871" stop-color="#ff1409"/><stop offset="1.000" stop-color="#ff0900"/></linearGradient><linearGradient id="c210" gradientUnits="userSpaceOnUse" x1="1134" x2="1432" y1="0" y2="0"><stop offset="0.000" stop-color="#00ffe4"/><stop offset="0.017" stop-color="#05ffe3"/><stop offset="0.128" stop-color="#71ffe0"/><stop offset="0.221" stop-color="#e3ffdd"/><stop offset="0.242" stop-color="#ffffdd"/><stop offset="0.295" stop-color="#ffc2a6"/><stop offset="0.366" stop-color="#ff8e78"/><stop offset="0.466" stop-color="#ff5f4e"/><stop offset="0.617" stop-color="#ff362a"/><stop offset="0.859" stop-color="#ff130a"/><stop offset="1.000" stop-color="#ff0700"/></linearGradient><linearGradient id="c211" gradientUnits="userSpaceOnUse" x1="1134" x2="1436" y1="0" y2="0"><stop offset="0.000" stop-color="#00ffea"/><stop offset="0.013" stop-color="#04ffea"/><stop offset="0.119" stop-color="#6fffe8"/><stop offset="0.212" stop-color="#e1ffe6"/><stop offset="0.235" stop-color="#fffce2"/><stop offset="0.285" stop-color="#ffc2ad"/><stop offset="0.354" stop-color="#ff8d7d"/><stop offset="0.454" stop-color="#ff5e52"/><stop offset="0.603" stop-color="#ff352c"/><stop offset="0.841" stop-color="#ff120c"/><stop offset="1.000" stop-color="#ff0400"/></linearGradient><linearGradient id="c212" gradientUnits="userSpaceOnUse" x1="1133" x2="1439" y1="0" y2="0"><stop offset="0.000" stop-color="#00fff1"/><stop offset="0.013" stop-color="#04fff1"/><stop offset="0.118" stop-color="#70ffef"/><stop offset="0.206" stop-color="#e0ffee"/><stop offset="0.229" stop-color="#fffdec"/><stop offset="0.278" stop-color="#ffc2b4"/><stop offset="0.343" stop-color="#ff8f84"/><stop offset="0.438" stop-color="#ff6058"/><stop offset="0.582" stop-color="#ff3730"/><stop offset="0.810" stop-color="#ff130f"/><stop offset="1.000" stop-color="#ff0200"/></linearGradient><linearGradient id="c213" gradientUnits="userSpaceOnUse" x1="1132" x2="1443" y1="0" y2="0"><stop offset="0.000" stop-color="#00fff8"/><stop offset="0.013" stop-color="#03fff8"/><stop offset="0.116" stop-color="#71fff7"/><stop offset="0.203" stop-color="#e3fff7"/><stop offset="0.222" stop-color="#fffef6"/><stop offset="0.267" stop-color="#ffc6bf"/><stop offset="0.331" stop-color="#ff918b"/><stop offset="0.421" stop-color="#ff625e"/><stop offset="0.556" stop-color="#ff3936"/><stop offset="0.772" stop-color="#ff1513"/><stop offset="1.000" stop-color="#ff0000"/></linearGradient><linearGradient id="c214" gradientUnits="userSpaceOnUse" x1="1131" x2="1444" y1="0" y2="0"><stop offset="0.000" stop-color="#00ffff"/><stop offset="0.013" stop-color="#02ffff"/><stop offset="0.112" stop-color="#6effff"/><stop offset="0.198" stop-color="#e0feff"/><stop offset="0.220" stop-color="#fffbfc"/><stop offset="0.265" stop-color="#ffc3c3"/><stop offset="0.329" stop-color="#ff8e8f"/><stop offset="0.419" stop-color="#ff6060"/><stop offset="0.553" stop-color="#ff3738"/><stop offset="0.770" stop-color="#ff1414"/><stop offset="1.000" stop-color="#ff0000"/></linearGradient><linearGradient id="c215" gradientUnits="userSpaceOnUse" x1="1131" x2="1439" y1="0" y2="0"><stop offset="0.000" stop-color="#00f8ff"/><stop offset="0.013" stop-color="#05f8ff"/><stop offset="0.117" stop-color="#73f6ff"/><stop offset="0.205" stop-color="#e5f5ff"/><stop offset="0.224" stop-color="#fff2fc"/><stop offset="0.273" stop-color="#ffb9c1"/><stop offset="0.338" stop-color="#ff878e"/><stop offset="0.432" stop-color="#ff5a5f"/><stop offset="0.575" stop-color="#ff3236"/><stop offset="0.802" stop-color="#ff1013"/><stop offset="1.000" stop-color="#ff0002"/></linearGradient><linearGradient id="c216" gradientUnits="userSpaceOnUse" x1="1130" x2="1434" y1="0" y2="0"><stop offset="0.000" stop-color="#00f1ff"/><stop offset="0.013" stop-color="#04f1ff"/><stop offset="0.118" stop-color="#70efff"/><stop offset="0.207" stop-color="#e0edff"/><stop offset="0.230" stop-color="#ffeafd"/><stop offset="0.280" stop-color="#ffb3c2"/><stop offset="0.345" stop-color="#ff838f"/><stop offset="0.441" stop-color="#ff5760"/><stop offset="0.586" stop-color="#ff3037"/><stop offset="0.816" stop-color="#ff0e14"/><stop offset="1.000" stop-color="#ff0004"/></linearGradient><linearGradient id="c217" gradientUnits="userSpaceOnUse" x1="1129" x2="1429" y1="0" y2="0"><stop offset="0.000" stop-color="#00eaff"/><stop offset="0.013" stop-color="#04eaff"/><stop offset="0.123" stop-color="#71e7ff"/><stop offset="0.217" stop-color="#e4e4ff"/><stop offset="0.237" stop-color="#ffe2fe"/><stop offset="0.287" stop-color="#ffadc4"/><stop offset="0.357" stop-color="#ff7c8e"/><stop offset="0.457" stop-color="#ff515f"/><stop offset="0.607" stop-color="#ff2b36"/><stop offset="0.847" stop-color="#ff0b13"/><stop offset="1.000" stop-color="#ff0006"/></linearGradient><linearGradient id="c218" gradientUnits="userSpaceOnUse" x1="1128" x2="1424" y1="0" y2="0"><stop offset="0.000" stop-color="#00e3ff"/><stop offset="0.014" stop-color="#03e3ff"/><stop offset="0.125" stop-color="#6fe0ff"/><stop offset="0.220" stop-color="#e0dcff"/><stop offset="0.243" stop-color="#ffdafe"/><stop offset="0.294" stop-color="#ffa7c5"/><stop offset="0.365" stop-color="#ff7890"/><stop offset="0.466" stop-color="#ff4e61"/><stop offset="0.618" stop-color="#ff2937"/><stop offset="0.861" stop-color="#ff0a14"/><stop offset="1.000" stop-color="#ff0008"/></linearGradient><linearGradient id="c219" gradientUnits="userSpaceOnUse" x1="1127" x2="1418" y1="0" y2="0"><stop offset="0.000" stop-color="#00ddff"/><stop offset="0.014" stop-color="#02ddff"/><stop offset="0.131" stop-color="#70d8ff"/><stop offset="0.230" stop-color="#e4d4ff"/><stop offset="0.251" stop-color="#ffd3ff"/><stop offset="0.302" stop-color="#ffa1c6"/><stop offset="0.375" stop-color="#ff7491"/><stop offset="0.478" stop-color="#ff4b62"/><stop offset="0.632" stop-color="#ff2738"/><stop offset="0.880" stop-color="#ff0815"/><stop offset="1.000" stop-color="#ff000a"/></linearGradient><linearGradient id="c220" gradientUnits="userSpaceOnUse" x1="1127" x2="1413" y1="0" y2="0"><stop offset="0.000" stop-color="#00d7ff"/><stop offset="0.017" stop-color="#07d6ff"/><stop offset="0.136" stop-color="#75d1ff"/><stop offset="0.238" stop-color="#e8ccff"/><stop offset="0.255" stop-color="#fecbff"/><stop offset="0.311" stop-color="#ff99c4"/><stop offset="0.385" stop-color="#ff6e90"/><stop offset="0.490" stop-color="#ff4762"/><stop offset="0.650" stop-color="#ff2438"/><stop offset="0.906" stop-color="#ff0615"/><stop offset="1.000" stop-color="#ff000c"/></linearGradient><linearGradient id="c221" gradientUnits="userSpaceOnUse" x1="1126" x2="1408" y1="0" y2="0"><stop offset="0.000" stop-color="#00d1ff"/><stop offset="0.018" stop-color="#07d0ff"/><stop offset="0.138" stop-color="#72caff"/><stop offset="0.241" stop-color="#e3c5ff"/><stop offset="0.266" stop-color="#ffc0fc"/><stop offset="0.323" stop-color="#ff91c2"/><stop offset="0.401" stop-color="#ff668d"/><stop offset="0.514" stop-color="#ff405e"/><stop offset="0.684" stop-color="#ff1e35"/><stop offset="0.957" stop-color="#ff0212"/><stop offset="1.000" stop-color="#ff000f"/></linearGradient><linearGradient id="c222" gradientUnits="userSpaceOnUse" x1="1125" x2="1403" y1="0" y2="0"><stop offset="0.000" stop-color="#00cbff"/><stop offset="0.014" stop-color="#03caff"/><stop offset="0.140" stop-color="#70c4ff"/><stop offset="0.248" stop-color="#e3bdff"/><stop offset="0.273" stop-color="#ffb9fc"/><stop offset="0.331" stop-color="#ff8cc3"/><stop offset="0.410" stop-color="#ff628f"/><stop offset="0.525" stop-color="#ff3d60"/><stop offset="0.698" stop-color="#ff1c36"/><stop offset="0.975" stop-color="#ff0013"/><stop offset="1.000" stop-color="#ff0011"/></linearGradient><linearGradient id="c223" gradientUnits="userSpaceOnUse" x1="1124" x2="1398" y1="0" y2="0"><stop offset="0.000" stop-color="#00c5ff"/><stop offset="0.015" stop-color="#03c4ff"/><stop offset="0.142" stop-color="#6ebdff"/><stop offset="0.252" stop-color="#dfb6ff"/><stop offset="0.281" stop-color="#ffb3fd"/><stop offset="0.339" stop-color="#ff87c4"/><stop offset="0.420" stop-color="#ff5f90"/><stop offset="0.536" stop-color="#ff3a61"/><stop offset="0.712" stop-color="#ff1a37"/><stop offset="0.993" stop-color="#ff0014"/><stop offset="1.000" stop-color="#ff0013"/></linearGradient><linearGradient id="c224" gradientUnits="userSpaceOnUse" x1="1123" x2="1392" y1="0" y2="0"><stop offset="0.000" stop-color="#00bfff"/><stop offset="0.019" stop-color="#05beff"/><stop offset="0.152" stop-color="#72b7ff"/><stop offset="0.264" stop-color="#e3afff"/><stop offset="0.290" stop-color="#ffacfe"/><stop offset="0.349" stop-color="#ff81c5"/><stop offset="0.431" stop-color="#ff5b91"/><stop offset="0.550" stop-color="#ff3762"/><stop offset="0.729" stop-color="#ff1839"/><stop offset="1.000" stop-color="#ff0016"/></linearGradient><linearGradient id="c225" gradientUnits="userSpaceOnUse" x1="1123" x2="1387" y1="0" y2="0"><stop offset="0.000" stop-color="#00baff"/><stop offset="0.019" stop-color="#07b9ff"/><stop offset="0.155" stop-color="#73b1ff"/><stop offset="0.273" stop-color="#e7a8ff"/><stop offset="0.295" stop-color="#ffa5fe"/><stop offset="0.356" stop-color="#ff7cc6"/><stop offset="0.443" stop-color="#ff5690"/><stop offset="0.564" stop-color="#ff3462"/><stop offset="0.750" stop-color="#ff1638"/><stop offset="1.000" stop-color="#ff0019"/></linearGradient><linearGradient id="c226" gradientUnits="userSpaceOnUse" x1="1122" x2="1382" y1="0" y2="0"><stop offset="0.000" stop-color="#00b4ff"/><stop offset="0.019" stop-color="#06b3ff"/><stop offset="0.162" stop-color="#74aaff"/><stop offset="0.281" stop-color="#e6a1ff"/><stop offset="0.304" stop-color="#ff9fff"/><stop offset="0.369" stop-color="#ff75c4"/><stop offset="0.458" stop-color="#ff5190"/><stop offset="0.585" stop-color="#ff3061"/><stop offset="0.777" stop-color="#ff1237"/><stop offset="1.000" stop-color="#ff001c"/></linearGradient><linearGradient id="c227" gradientUnits="userSpaceOnUse" x1="1121" x2="1377" y1="0" y2="0"><stop offset="0.000" stop-color="#00afff"/><stop offset="0.020" stop-color="#06aeff"/><stop offset="0.164" stop-color="#72a5ff"/><stop offset="0.289" stop-color="#e69bff"/><stop offset="0.312" stop-color="#ff98ff"/><stop offset="0.379" stop-color="#ff71c5"/><stop offset="0.469" stop-color="#ff4d91"/><stop offset="0.598" stop-color="#ff2d62"/><stop offset="0.793" stop-color="#ff1038"/><stop offset="1.000" stop-color="#ff001e"/></linearGradient><linearGradient id="c228" gradientUnits="userSpaceOnUse" x1="1120" x2="1372" y1="0" y2="0"><stop offset="0.000" stop-color="#00aaff"/><stop offset="0.016" stop-color="#02a9ff"/><stop offset="0.167" stop-color="#709fff"/><stop offset="0.294" stop-color="#e295ff"/><stop offset="0.325" stop-color="#ff90fc"/><stop offset="0.393" stop-color="#ff6ac3"/><stop offset="0.488" stop-color="#ff478e"/><stop offset="0.623" stop-color="#ff2860"/><stop offset="0.825" stop-color="#ff0d37"/><stop offset="1.000" stop-color="#ff0021"/></linearGradient><linearGradient id="c229" gradientUnits="userSpaceOnUse" x1="1119" x2="1366" y1="0" y2="0"><stop offset="0.000" stop-color="#00a5ff"/><stop offset="0.020" stop-color="#04a4ff"/><stop offset="0.174" stop-color="#7199ff"/><stop offset="0.304" stop-color="#e28eff"/><stop offset="0.336" stop-color="#ff8afc"/><stop offset="0.409" stop-color="#ff64c1"/><stop offset="0.506" stop-color="#ff428e"/><stop offset="0.648" stop-color="#ff245f"/><stop offset="0.862" stop-color="#ff0a36"/><stop offset="1.000" stop-color="#ff0025"/></linearGradient><linearGradient id="c230" gradientUnits="userSpaceOnUse" x1="1119" x2="1361" y1="0" y2="0"><stop offset="0.000" stop-color="#00a0ff"/><stop offset="0.021" stop-color="#069fff"/><stop offset="0.178" stop-color="#7294ff"/><stop offset="0.314" stop-color="#e588ff"/><stop offset="0.343" stop-color="#ff84fd"/><stop offset="0.417" stop-color="#ff5fc2"/><stop offset="0.521" stop-color="#ff3e8d"/><stop offset="0.665" stop-color="#ff215f"/><stop offset="0.884" stop-color="#ff0836"/><stop offset="1.000" stop-color="#ff0028"/></linearGradient><linearGradient id="c231" gradientUnits="userSpaceOnUse" x1="1118" x2="1356" y1="0" y2="0"><stop offset="0.000" stop-color="#009bff"/><stop offset="0.021" stop-color="#069aff"/><stop offset="0.185" stop-color="#738eff"/><stop offset="0.324" stop-color="#e582ff"/><stop offset="0.353" stop-color="#ff7efd"/><stop offset="0.429" stop-color="#ff5bc3"/><stop offset="0.534" stop-color="#ff3b8e"/><stop offset="0.685" stop-color="#ff1e5f"/><stop offset="0.912" stop-color="#ff0536"/><stop offset="1.000" stop-color="#ff002b"/></linearGradient><linearGradient id="c232" gradientUnits="userSpaceOnUse" x1="1117" x2="1351" y1="0" y2="0"><stop offset="0.000" stop-color="#0097ff"/><stop offset="0.021" stop-color="#0595ff"/><stop offset="0.188" stop-color="#7189ff"/><stop offset="0.333" stop-color="#e57cff"/><stop offset="0.363" stop-color="#ff79fe"/><stop offset="0.440" stop-color="#ff57c4"/><stop offset="0.547" stop-color="#ff388f"/><stop offset="0.701" stop-color="#ff1c60"/><stop offset="0.932" stop-color="#ff0337"/><stop offset="1.000" stop-color="#ff002e"/></linearGradient><linearGradient id="c233" gradientUnits="userSpaceOnUse" x1="1116" x2="1346" y1="0" y2="0"><stop offset="0.000" stop-color="#0092ff"/><stop offset="0.022" stop-color="#0591ff"/><stop offset="0.196" stop-color="#7284ff"/><stop offset="0.343" stop-color="#e577ff"/><stop offset="0.374" stop-color="#ff73fe"/><stop offset="0.452" stop-color="#ff52c5"/><stop offset="0.561" stop-color="#ff3490"/><stop offset="0.717" stop-color="#ff1961"/><stop offset="0.952" stop-color="#ff0238"/><stop offset="1.000" stop-color="#ff0032"/></linearGradient><linearGradient id="c234" gradientUnits="userSpaceOnUse" x1="1115" x2="1340" y1="0" y2="0"><stop offset="0.000" stop-color="#008eff"/><stop offset="0.022" stop-color="#048cff"/><stop offset="0.200" stop-color="#707fff"/><stop offset="0.351" stop-color="#e171ff"/><stop offset="0.387" stop-color="#ff6eff"/><stop offset="0.467" stop-color="#ff4ec6"/><stop offset="0.578" stop-color="#ff3191"/><stop offset="0.738" stop-color="#ff1762"/><stop offset="0.978" stop-color="#ff0039"/><stop offset="1.000" stop-color="#ff0036"/></linearGradient><linearGradient id="c235" gradientUnits="userSpaceOnUse" x1="1115" x2="1335" y1="0" y2="0"><stop offset="0.000" stop-color="#0089ff"/><stop offset="0.027" stop-color="#0887ff"/><stop offset="0.209" stop-color="#747aff"/><stop offset="0.368" stop-color="#e86bff"/><stop offset="0.400" stop-color="#ff66fc"/><stop offset="0.486" stop-color="#ff47c2"/><stop offset="0.605" stop-color="#ff2b8d"/><stop offset="0.773" stop-color="#ff135f"/><stop offset="1.000" stop-color="#ff003a"/></linearGradient><linearGradient id="c236" gradientUnits="userSpaceOnUse" x1="1114" x2="1330" y1="0" y2="0"><stop offset="0.000" stop-color="#0085ff"/><stop offset="0.023" stop-color="#0584ff"/><stop offset="0.213" stop-color="#7275ff"/><stop offset="0.375" stop-color="#e466ff"/><stop offset="0.412" stop-color="#ff61fc"/><stop offset="0.500" stop-color="#ff43c2"/><stop offset="0.620" stop-color="#ff288e"/><stop offset="0.792" stop-color="#ff1060"/><stop offset="1.000" stop-color="#ff003d"/></linearGradient><linearGradient id="c237" gradientUnits="userSpaceOnUse" x1="1113" x2="1325" y1="0" y2="0"><stop offset="0.000" stop-color="#0081ff"/><stop offset="0.024" stop-color="#057fff"/><stop offset="0.222" stop-color="#7370ff"/><stop offset="0.387" stop-color="#e461ff"/><stop offset="0.425" stop-color="#ff5cfd"/><stop offset="0.514" stop-color="#ff3fc3"/><stop offset="0.637" stop-color="#ff258f"/><stop offset="0.816" stop-color="#ff0e60"/><stop offset="1.000" stop-color="#ff0041"/></linearGradient><linearGradient id="c238" gradientUnits="userSpaceOnUse" x1="1112" x2="1320" y1="0" y2="0"><stop offset="0.000" stop-color="#007dff"/><stop offset="0.024" stop-color="#047bff"/><stop offset="0.226" stop-color="#716cff"/><stop offset="0.399" stop-color="#e45cff"/><stop offset="0.438" stop-color="#ff57fd"/><stop offset="0.529" stop-color="#ff3cc4"/><stop offset="0.659" stop-color="#ff228f"/><stop offset="0.841" stop-color="#ff0b60"/><stop offset="1.000" stop-color="#ff0046"/></linearGradient><linearGradient id="c239" gradientUnits="userSpaceOnUse" x1="1111" x2="1314" y1="0" y2="0"><stop offset="0.000" stop-color="#0079ff"/><stop offset="0.025" stop-color="#0477ff"/><stop offset="0.236" stop-color="#7268ff"/><stop offset="0.414" stop-color="#e457ff"/><stop offset="0.453" stop-color="#ff53fe"/><stop offset="0.547" stop-color="#ff38c5"/><stop offset="0.680" stop-color="#ff1f90"/><stop offset="0.867" stop-color="#ff0961"/><stop offset="1.000" stop-color="#ff004b"/></linearGradient><linearGradient id="c240" gradientUnits="userSpaceOnUse" x1="1111" x2="1309" y1="0" y2="0"><stop offset="0.000" stop-color="#0075ff"/><stop offset="0.030" stop-color="#0873ff"/><stop offset="0.247" stop-color="#7663ff"/><stop offset="0.429" stop-color="#e752ff"/><stop offset="0.465" stop-color="#ff4efe"/><stop offset="0.566" stop-color="#ff33c3"/><stop offset="0.702" stop-color="#ff1b8f"/><stop offset="0.899" stop-color="#ff0660"/><stop offset="1.000" stop-color="#ff004f"/></linearGradient><linearGradient id="c241" gradientUnits="userSpaceOnUse" x1="1110" x2="1304" y1="0" y2="0"><stop offset="0.000" stop-color="#0071ff"/><stop offset="0.026" stop-color="#056fff"/><stop offset="0.247" stop-color="#715fff"/><stop offset="0.438" stop-color="#e34eff"/><stop offset="0.479" stop-color="#ff49ff"/><stop offset="0.582" stop-color="#ff2fc4"/><stop offset="0.722" stop-color="#ff1990"/><stop offset="0.923" stop-color="#ff0461"/><stop offset="1.000" stop-color="#ff0054"/></linearGradient><linearGradient id="c242" gradientUnits="userSpaceOnUse" x1="1109" x2="1299" y1="0" y2="0"><stop offset="0.000" stop-color="#006dff"/><stop offset="0.026" stop-color="#056cff"/><stop offset="0.258" stop-color="#725bff"/><stop offset="0.453" stop-color="#e349ff"/><stop offset="0.500" stop-color="#ff43fc"/><stop offset="0.605" stop-color="#ff2bc3"/><stop offset="0.753" stop-color="#ff158e"/><stop offset="0.963" stop-color="#ff015f"/><stop offset="1.000" stop-color="#ff0059"/></linearGradient><linearGradient id="c243" gradientUnits="userSpaceOnUse" x1="1108" x2="1294" y1="0" y2="0"><stop offset="0.000" stop-color="#006aff"/><stop offset="0.027" stop-color="#0468ff"/><stop offset="0.263" stop-color="#7057ff"/><stop offset="0.468" stop-color="#e344ff"/><stop offset="0.516" stop-color="#ff3ffc"/><stop offset="0.624" stop-color="#ff27c3"/><stop offset="0.774" stop-color="#ff128f"/><stop offset="0.989" stop-color="#ff0060"/><stop offset="1.000" stop-color="#ff005f"/></linearGradient><linearGradient id="c244" gradientUnits="userSpaceOnUse" x1="1107" x2="1288" y1="0" y2="0"><stop offset="0.000" stop-color="#0066ff"/><stop offset="0.033" stop-color="#0664ff"/><stop offset="0.282" stop-color="#7452ff"/><stop offset="0.492" stop-color="#e63fff"/><stop offset="0.536" stop-color="#ff3afd"/><stop offset="0.652" stop-color="#ff23c2"/><stop offset="0.812" stop-color="#ff0e8d"/><stop offset="1.000" stop-color="#ff0065"/></linearGradient><linearGradient id="c245" gradientUnits="userSpaceOnUse" x1="1107" x2="1283" y1="0" y2="0"><stop offset="0.000" stop-color="#0062ff"/><stop offset="0.034" stop-color="#0860ff"/><stop offset="0.290" stop-color="#744eff"/><stop offset="0.506" stop-color="#e63bff"/><stop offset="0.551" stop-color="#ff36fd"/><stop offset="0.670" stop-color="#ff20c3"/><stop offset="0.835" stop-color="#ff0c8e"/><stop offset="1.000" stop-color="#ff006b"/></linearGradient><linearGradient id="c246" gradientUnits="userSpaceOnUse" x1="1106" x2="1278" y1="0" y2="0"><stop offset="0.000" stop-color="#005fff"/><stop offset="0.035" stop-color="#075dff"/><stop offset="0.297" stop-color="#734aff"/><stop offset="0.523" stop-color="#e637ff"/><stop offset="0.570" stop-color="#ff32fe"/><stop offset="0.692" stop-color="#ff1cc4"/><stop offset="0.860" stop-color="#ff098f"/><stop offset="1.000" stop-color="#ff0071"/></linearGradient><linearGradient id="c247" gradientUnits="userSpaceOnUse" x1="1105" x2="1273" y1="0" y2="0"><stop offset="0.000" stop-color="#005cff"/><stop offset="0.030" stop-color="#045aff"/><stop offset="0.304" stop-color="#7147ff"/><stop offset="0.536" stop-color="#e233ff"/><stop offset="0.589" stop-color="#ff2efe"/><stop offset="0.714" stop-color="#ff19c4"/><stop offset="0.887" stop-color="#ff0690"/><stop offset="1.000" stop-color="#ff0077"/></linearGradient><linearGradient id="c248" gradientUnits="userSpaceOnUse" x1="1104" x2="1268" y1="0" y2="0"><stop offset="0.000" stop-color="#0058ff"/><stop offset="0.030" stop-color="#0457ff"/><stop offset="0.317" stop-color="#7243ff"/><stop offset="0.561" stop-color="#e52eff"/><stop offset="0.616" stop-color="#ff28fb"/><stop offset="0.750" stop-color="#ff14c1"/><stop offset="0.933" stop-color="#ff038c"/><stop offset="1.000" stop-color="#ff007e"/></linearGradient><linearGradient id="c249" gradientUnits="userSpaceOnUse" x1="1103" x2="1262" y1="0" y2="0"><stop offset="0.000" stop-color="#0055ff"/><stop offset="0.038" stop-color="#0653ff"/><stop offset="0.333" stop-color="#733fff"/><stop offset="0.585" stop-color="#e52aff"/><stop offset="0.642" stop-color="#ff25fc"/><stop offset="0.780" stop-color="#ff11c1"/><stop offset="0.969" stop-color="#ff008d"/><stop offset="1.000" stop-color="#ff0087"/></linearGradient><linearGradient id="c250" gradientUnits="userSpaceOnUse" x1="1103" x2="1257" y1="0" y2="0"><stop offset="0.000" stop-color="#0052ff"/><stop offset="0.045" stop-color="#094fff"/><stop offset="0.351" stop-color="#763bff"/><stop offset="0.610" stop-color="#e826ff"/><stop offset="0.662" stop-color="#ff21fc"/><stop offset="0.805" stop-color="#ff0ec2"/><stop offset="1.000" stop-color="#ff008e"/></linearGradient><linearGradient id="c251" gradientUnits="userSpaceOnUse" x1="1102" x2="1252" y1="0" y2="0"><stop offset="0.000" stop-color="#004fff"/><stop offset="0.040" stop-color="#074cff"/><stop offset="0.360" stop-color="#7438ff"/><stop offset="0.633" stop-color="#e822ff"/><stop offset="0.687" stop-color="#ff1dfd"/><stop offset="0.833" stop-color="#ff0bc3"/><stop offset="1.000" stop-color="#ff0096"/></linearGradient><linearGradient id="c252" gradientUnits="userSpaceOnUse" x1="1101" x2="1247" y1="0" y2="0"><stop offset="0.000" stop-color="#004cff"/><stop offset="0.041" stop-color="#0649ff"/><stop offset="0.370" stop-color="#7335ff"/><stop offset="0.651" stop-color="#e51fff"/><stop offset="0.712" stop-color="#ff19fd"/><stop offset="0.863" stop-color="#ff08c4"/><stop offset="1.000" stop-color="#ff009f"/></linearGradient><linearGradient id="c253" gradientUnits="userSpaceOnUse" x1="1100" x2="1242" y1="0" y2="0"><stop offset="0.000" stop-color="#0049ff"/><stop offset="0.042" stop-color="#0646ff"/><stop offset="0.387" stop-color="#7331ff"/><stop offset="0.683" stop-color="#e71aff"/><stop offset="0.739" stop-color="#ff15fe"/><stop offset="0.894" stop-color="#ff05c4"/><stop offset="1.000" stop-color="#ff00a8"/></linearGradient><linearGradient id="c254" gradientUnits="userSpaceOnUse" x1="1099" x2="1236" y1="0" y2="0"><stop offset="0.000" stop-color="#0046ff"/><stop offset="0.044" stop-color="#0543ff"/><stop offset="0.401" stop-color="#722eff"/><stop offset="0.708" stop-color="#e417ff"/><stop offset="0.774" stop-color="#ff12fe"/><stop offset="0.942" stop-color="#ff02c3"/><stop offset="1.000" stop-color="#ff00b3"/></linearGradient><linearGradient id="c255" gradientUnits="userSpaceOnUse" x1="1099" x2="1231" y1="0" y2="0"><stop offset="0.000" stop-color="#0043ff"/><stop offset="0.053" stop-color="#0940ff"/><stop offset="0.424" stop-color="#752aff"/><stop offset="0.742" stop-color="#e713ff"/><stop offset="0.811" stop-color="#ff0dfb"/><stop offset="0.985" stop-color="#ff00c2"/><stop offset="1.000" stop-color="#ff00be"/></linearGradient><linearGradient id="c256" gradientUnits="userSpaceOnUse" x1="1098" x2="1226" y1="0" y2="0"><stop offset="0.000" stop-color="#0040ff"/><stop offset="0.047" stop-color="#063dff"/><stop offset="0.438" stop-color="#7327ff"/><stop offset="0.773" stop-color="#e70fff"/><stop offset="0.844" stop-color="#ff0afc"/><stop offset="1.000" stop-color="#ff00c9"/></linearGradient><linearGradient id="c257" gradientUnits="userSpaceOnUse" x1="1097" x2="1221" y1="0" y2="0"><stop offset="0.000" stop-color="#003dff"/><stop offset="0.048" stop-color="#063bff"/><stop offset="0.460" stop-color="#7424ff"/><stop offset="0.806" stop-color="#e70cff"/><stop offset="0.879" stop-color="#ff06fc"/><stop offset="1.000" stop-color="#ff00d5"/></linearGradient><linearGradient id="c258" gradientUnits="userSpaceOnUse" x1="1096" x2="1215" y1="0" y2="0"><stop offset="0.000" stop-color="#003aff"/><stop offset="0.050" stop-color="#0538ff"/><stop offset="0.479" stop-color="#7221ff"/><stop offset="0.849" stop-color="#e609ff"/><stop offset="0.924" stop-color="#ff03fd"/><stop offset="1.000" stop-color="#ff00e4"/></linearGradient><linearGradient id="c259" gradientUnits="userSpaceOnUse" x1="1095" x2="1210" y1="0" y2="0"><stop offset="0.000" stop-color="#0038ff"/><stop offset="0.061" stop-color="#0735ff"/><stop offset="0.504" stop-color="#731eff"/><stop offset="0.887" stop-color="#e605ff"/><stop offset="0.965" stop-color="#ff00fd"/><stop offset="1.000" stop-color="#ff00f2"/></linearGradient><linearGradient id="c260" gradientUnits="userSpaceOnUse" x1="1095" x2="1205" y1="0" y2="0"><stop offset="0.000" stop-color="#0035ff"/><stop offset="0.064" stop-color="#0832ff"/><stop offset="0.536" stop-color="#761aff"/><stop offset="0.936" stop-color="#e901ff"/><stop offset="1.000" stop-color="#fe00ff"/></linearGradient><linearGradient id="c261" gradientUnits="userSpaceOnUse" x1="1094" x2="1200" y1="0" y2="0"><stop offset="0.000" stop-color="#0032ff"/><stop offset="0.066" stop-color="#082fff"/><stop offset="0.557" stop-color="#7517ff"/><stop offset="0.981" stop-color="#e900ff"/><stop offset="1.000" stop-color="#ef00ff"/></linearGradient><linearGradient id="c262" gradientUnits="userSpaceOnUse" x1="1093" x2="1195" y1="0" y2="0"><stop offset="0.000" stop-color="#0030ff"/><stop offset="0.059" stop-color="#062dff"/><stop offset="0.578" stop-color="#7315ff"/><stop offset="1.000" stop-color="#e000ff"/></linearGradient><linearGradient id="c263" gradientUnits="userSpaceOnUse" x1="1092" x2="1189" y1="0" y2="0"><stop offset="0.000" stop-color="#002dff"/><stop offset="0.072" stop-color="#072aff"/><stop offset="0.619" stop-color="#7412ff"/><stop offset="1.000" stop-color="#d000ff"/></linearGradient><linearGradient id="c264" gradientUnits="userSpaceOnUse" x1="1091" x2="1184" y1="0" y2="0"><stop offset="0.000" stop-color="#002bff"/><stop offset="0.075" stop-color="#0728ff"/><stop offset="0.656" stop-color="#740fff"/><stop offset="1.000" stop-color="#c200ff"/></linearGradient><linearGradient id="c265" gradientUnits="userSpaceOnUse" x1="1091" x2="1179" y1="0" y2="0"><stop offset="0.000" stop-color="#0028ff"/><stop offset="0.091" stop-color="#0a25ff"/><stop offset="0.705" stop-color="#770bff"/><stop offset="1.000" stop-color="#b600ff"/></linearGradient><linearGradient id="c266" gradientUnits="userSpaceOnUse" x1="1090" x2="1174" y1="0" y2="0"><stop offset="0.000" stop-color="#0026ff"/><stop offset="0.083" stop-color="#0823ff"/><stop offset="0.726" stop-color="#740aff"/><stop offset="1.000" stop-color="#aa00ff"/></linearGradient><linearGradient id="c267" gradientUnits="userSpaceOnUse" x1="1089" x2="1169" y1="0" y2="0"><stop offset="0.000" stop-color="#0023ff"/><stop offset="0.075" stop-color="#0521ff"/><stop offset="0.762" stop-color="#7207ff"/><stop offset="1.000" stop-color="#9e00ff"/></linearGradient><linearGradient id="c268" gradientUnits="userSpaceOnUse" x1="1088" x2="1163" y1="0" y2="0"><stop offset="0.000" stop-color="#0021ff"/><stop offset="0.093" stop-color="#071eff"/><stop offset="0.827" stop-color="#7304ff"/><stop offset="1.000" stop-color="#9000ff"/></linearGradient><linearGradient id="c269" gradientUnits="userSpaceOnUse" x1="1087" x2="1158" y1="0" y2="0"><stop offset="0.000" stop-color="#001fff"/><stop offset="0.099" stop-color="#061cff"/><stop offset="0.887" stop-color="#7402ff"/><stop offset="1.000" stop-color="#8500ff"/></linearGradient><linearGradient id="c270" gradientUnits="userSpaceOnUse" x1="1087" x2="1153" y1="0" y2="0"><stop offset="0.000" stop-color="#001cff"/><stop offset="0.121" stop-color="#0919ff"/><stop offset="0.970" stop-color="#7600ff"/><stop offset="1.000" stop-color="#7b00ff"/></linearGradient><linearGradient id="c271" gradientUnits="userSpaceOnUse" x1="1086" x2="1148" y1="0" y2="0"><stop offset="0.000" stop-color="#001aff"/><stop offset="0.113" stop-color="#0717ff"/><stop offset="1.000" stop-color="#7100ff"/></linearGradient><linearGradient id="c272" gradientUnits="userSpaceOnUse" x1="1085" x2="1143" y1="0" y2="0"><stop offset="0.000" stop-color="#0018ff"/><stop offset="0.121" stop-color="#0715ff"/><stop offset="1.000" stop-color="#6700ff"/></linearGradient><linearGradient id="c273" gradientUnits="userSpaceOnUse" x1="1084" x2="1137" y1="0" y2="0"><stop offset="0.000" stop-color="#0016ff"/><stop offset="0.132" stop-color="#0613ff"/><stop offset="1.000" stop-color="#5b00ff"/></linearGradient><linearGradient id="c274" gradientUnits="userSpaceOnUse" x1="1084" x2="1132" y1="0" y2="0"><stop offset="0.000" stop-color="#0013ff"/><stop offset="0.229" stop-color="#0e0fff"/><stop offset="1.000" stop-color="#5200ff"/></linearGradient><linearGradient id="c275" gradientUnits="userSpaceOnUse" x1="1083" x2="1127" y1="0" y2="0"><stop offset="0.000" stop-color="#0011ff"/><stop offset="0.205" stop-color="#0b0dff"/><stop offset="1.000" stop-color="#4a00ff"/></linearGradient><linearGradient id="c276" gradientUnits="userSpaceOnUse" x1="1082" x2="1122" y1="0" y2="0"><stop offset="0.000" stop-color="#000fff"/><stop offset="0.200" stop-color="#090cff"/><stop offset="1.000" stop-color="#4100ff"/></linearGradient><linearGradient id="c277" gradientUnits="userSpaceOnUse" x1="1081" x2="1117" y1="0" y2="0"><stop offset="0.000" stop-color="#000dff"/><stop offset="0.194" stop-color="#070aff"/><stop offset="1.000" stop-color="#3900ff"/></linearGradient><linearGradient id="c278" gradientUnits="userSpaceOnUse" x1="1080" x2="1111" y1="0" y2="0"><stop offset="0.000" stop-color="#000bff"/><stop offset="0.258" stop-color="#0808ff"/><stop offset="1.000" stop-color="#2f00ff"/></linearGradient><linearGradient id="c279" gradientUnits="userSpaceOnUse" x1="1080" x2="1106" y1="0" y2="0"><stop offset="0.000" stop-color="#0009ff"/><stop offset="0.462" stop-color="#1004ff"/><stop offset="1.000" stop-color="#2700ff"/></linearGradient><linearGradient id="c280" gradientUnits="userSpaceOnUse" x1="1079" x2="1101" y1="0" y2="0"><stop offset="0.000" stop-color="#0007ff"/><stop offset="0.455" stop-color="#0c03ff"/><stop offset="1.000" stop-color="#2000ff"/></linearGradient><linearGradient id="c281" gradientUnits="userSpaceOnUse" x1="1078" x2="1096" y1="0" y2="0"><stop offset="0.000" stop-color="#0005ff"/><stop offset="0.444" stop-color="#0802ff"/><stop offset="1.000" stop-color="#1900ff"/></linearGradient><linearGradient id="c282" gradientUnits="userSpaceOnUse" x1="1077" x2="1091" y1="0" y2="0"><stop offset="0.000" stop-color="#0004ff"/><stop offset="0.571" stop-color="#0800ff"/><stop offset="1.000" stop-color="#1100ff"/></linearGradient><linearGradient id="c283" gradientUnits="userSpaceOnUse" x1="1077" x2="1085" y1="0" y2="0"><stop offset="0.000" stop-color="#0001ff"/><stop offset="1.000" stop-color="#0900ff"/></linearGradient><clipPath id="ins"><rect x="1373" y="133" width="210" height="163"/></clipPath><clipPath id="instri"><path d="M1067.6 -34.5L2236.0 675.2L1067.6 675.2z"/></clipPath><linearGradient id="c284" gradientUnits="userSpaceOnUse" x1="1371" x2="1585" y1="0" y2="0"><stop offset="0.000" stop-color="#609900"/><stop offset="0.818" stop-color="#999700"/><stop offset="1.000" stop-color="#998a00"/></linearGradient><linearGradient id="c285" gradientUnits="userSpaceOnUse" x1="1371" x2="1585" y1="0" y2="0"><stop offset="0.000" stop-color="#619900"/><stop offset="0.808" stop-color="#999700"/><stop offset="1.000" stop-color="#998900"/></linearGradient><linearGradient id="c286" gradientUnits="userSpaceOnUse" x1="1371" x2="1585" y1="0" y2="0"><stop offset="0.000" stop-color="#619900"/><stop offset="0.794" stop-color="#999700"/><stop offset="1.000" stop-color="#998900"/></linearGradient><linearGradient id="c287" gradientUnits="userSpaceOnUse" x1="1371" x2="1585" y1="0" y2="0"><stop offset="0.000" stop-color="#629900"/><stop offset="0.785" stop-color="#999700"/><stop offset="1.000" stop-color="#998800"/></linearGradient><linearGradient id="c288" gradientUnits="userSpaceOnUse" x1="1371" x2="1585" y1="0" y2="0"><stop offset="0.000" stop-color="#639900"/><stop offset="0.776" stop-color="#999700"/><stop offset="1.000" stop-color="#998700"/></linearGradient><linearGradient id="c289" gradientUnits="userSpaceOnUse" x1="1371" x2="1585" y1="0" y2="0"><stop offset="0.000" stop-color="#639900"/><stop offset="0.762" stop-color="#999700"/><stop offset="1.000" stop-color="#998600"/></linearGradient><linearGradient id="c290" gradientUnits="userSpaceOnUse" x1="1371" x2="1585" y1="0" y2="0"><stop offset="0.000" stop-color="#649900"/><stop offset="0.752" stop-color="#999700"/><stop offset="1.000" stop-color="#998600"/></linearGradient><linearGradient id="c291" gradientUnits="userSpaceOnUse" x1="1371" x2="1585" y1="0" y2="0"><stop offset="0.000" stop-color="#649901"/><stop offset="0.743" stop-color="#999700"/><stop offset="1.000" stop-color="#998500"/></linearGradient><linearGradient id="c292" gradientUnits="userSpaceOnUse" x1="1371" x2="1585" y1="0" y2="0"><stop offset="0.000" stop-color="#659901"/><stop offset="0.729" stop-color="#999700"/><stop offset="1.000" stop-color="#998400"/></linearGradient><linearGradient id="c293" gradientUnits="userSpaceOnUse" x1="1371" x2="1585" y1="0" y2="0"><stop offset="0.000" stop-color="#669901"/><stop offset="0.720" stop-color="#999700"/><stop offset="1.000" stop-color="#998300"/></linearGradient><linearGradient id="c294" gradientUnits="userSpaceOnUse" x1="1371" x2="1585" y1="0" y2="0"><stop offset="0.000" stop-color="#669902"/><stop offset="0.706" stop-color="#999700"/><stop offset="1.000" stop-color="#998300"/></linearGradient><linearGradient id="c295" gradientUnits="userSpaceOnUse" x1="1371" x2="1585" y1="0" y2="0"><stop offset="0.000" stop-color="#679902"/><stop offset="0.696" stop-color="#999700"/><stop offset="1.000" stop-color="#998200"/></linearGradient><linearGradient id="c296" gradientUnits="userSpaceOnUse" x1="1371" x2="1585" y1="0" y2="0"><stop offset="0.000" stop-color="#689903"/><stop offset="0.687" stop-color="#999700"/><stop offset="1.000" stop-color="#998100"/></linearGradient><linearGradient id="c297" gradientUnits="userSpaceOnUse" x1="1371" x2="1585" y1="0" y2="0"><stop offset="0.000" stop-color="#689903"/><stop offset="0.598" stop-color="#959900"/><stop offset="0.696" stop-color="#999500"/><stop offset="1.000" stop-color="#998000"/></linearGradient><linearGradient id="c298" gradientUnits="userSpaceOnUse" x1="1371" x2="1585" y1="0" y2="0"><stop offset="0.000" stop-color="#699903"/><stop offset="0.533" stop-color="#919900"/><stop offset="0.673" stop-color="#999600"/><stop offset="1.000" stop-color="#998000"/></linearGradient><linearGradient id="c299" gradientUnits="userSpaceOnUse" x1="1371" x2="1585" y1="0" y2="0"><stop offset="0.000" stop-color="#6a9904"/><stop offset="0.505" stop-color="#8f9900"/><stop offset="0.659" stop-color="#999700"/><stop offset="1.000" stop-color="#997f00"/></linearGradient><linearGradient id="c300" gradientUnits="userSpaceOnUse" x1="1371" x2="1585" y1="0" y2="0"><stop offset="0.000" stop-color="#6a9904"/><stop offset="0.500" stop-color="#909900"/><stop offset="0.645" stop-color="#999700"/><stop offset="1.000" stop-color="#997e00"/></linearGradient><linearGradient id="c301" gradientUnits="userSpaceOnUse" x1="1371" x2="1585" y1="0" y2="0"><stop offset="0.000" stop-color="#6b9904"/><stop offset="0.505" stop-color="#919900"/><stop offset="0.640" stop-color="#999600"/><stop offset="1.000" stop-color="#997e00"/></linearGradient><linearGradient id="c302" gradientUnits="userSpaceOnUse" x1="1371" x2="1585" y1="0" y2="0"><stop offset="0.000" stop-color="#6c9905"/><stop offset="0.509" stop-color="#929900"/><stop offset="0.626" stop-color="#999600"/><stop offset="1.000" stop-color="#997d00"/></linearGradient><linearGradient id="c303" gradientUnits="userSpaceOnUse" x1="1371" x2="1585" y1="0" y2="0"><stop offset="0.000" stop-color="#6c9905"/><stop offset="0.523" stop-color="#949900"/><stop offset="0.626" stop-color="#999600"/><stop offset="1.000" stop-color="#997c00"/></linearGradient><linearGradient id="c304" gradientUnits="userSpaceOnUse" x1="1371" x2="1585" y1="0" y2="0"><stop offset="0.000" stop-color="#6d9906"/><stop offset="0.537" stop-color="#969900"/><stop offset="0.659" stop-color="#999200"/><stop offset="1.000" stop-color="#997b00"/></linearGradient><linearGradient id="c305" gradientUnits="userSpaceOnUse" x1="1371" x2="1585" y1="0" y2="0"><stop offset="0.000" stop-color="#6e9906"/><stop offset="0.551" stop-color="#989900"/><stop offset="1.000" stop-color="#997b00"/></linearGradient><linearGradient id="c306" gradientUnits="userSpaceOnUse" x1="1371" x2="1585" y1="0" y2="0"><stop offset="0.000" stop-color="#6e9906"/><stop offset="0.570" stop-color="#999700"/><stop offset="1.000" stop-color="#997a00"/></linearGradient><linearGradient id="c307" gradientUnits="userSpaceOnUse" x1="1371" x2="1585" y1="0" y2="0"><stop offset="0.000" stop-color="#6f9907"/><stop offset="0.561" stop-color="#999700"/><stop offset="1.000" stop-color="#997900"/></linearGradient><linearGradient id="c308" gradientUnits="userSpaceOnUse" x1="1371" x2="1585" y1="0" y2="0"><stop offset="0.000" stop-color="#709907"/><stop offset="0.551" stop-color="#999700"/><stop offset="1.000" stop-color="#997900"/></linearGradient><linearGradient id="c309" gradientUnits="userSpaceOnUse" x1="1371" x2="1585" y1="0" y2="0"><stop offset="0.000" stop-color="#719908"/><stop offset="0.542" stop-color="#999700"/><stop offset="1.000" stop-color="#997800"/></linearGradient><linearGradient id="c310" gradientUnits="userSpaceOnUse" x1="1371" x2="1585" y1="0" y2="0"><stop offset="0.000" stop-color="#719908"/><stop offset="0.528" stop-color="#999700"/><stop offset="1.000" stop-color="#997700"/></linearGradient><linearGradient id="c311" gradientUnits="userSpaceOnUse" x1="1371" x2="1585" y1="0" y2="0"><stop offset="0.000" stop-color="#729908"/><stop offset="0.519" stop-color="#999700"/><stop offset="1.000" stop-color="#997600"/></linearGradient><linearGradient id="c312" gradientUnits="userSpaceOnUse" x1="1371" x2="1585" y1="0" y2="0"><stop offset="0.000" stop-color="#739909"/><stop offset="0.509" stop-color="#999700"/><stop offset="1.000" stop-color="#997600"/></linearGradient><linearGradient id="c313" gradientUnits="userSpaceOnUse" x1="1371" x2="1585" y1="0" y2="0"><stop offset="0.000" stop-color="#749909"/><stop offset="0.495" stop-color="#999701"/><stop offset="1.000" stop-color="#997500"/></linearGradient><linearGradient id="c314" gradientUnits="userSpaceOnUse" x1="1371" x2="1585" y1="0" y2="0"><stop offset="0.000" stop-color="#74990a"/><stop offset="0.486" stop-color="#999702"/><stop offset="1.000" stop-color="#997400"/></linearGradient><linearGradient id="c315" gradientUnits="userSpaceOnUse" x1="1371" x2="1585" y1="0" y2="0"><stop offset="0.000" stop-color="#75990a"/><stop offset="0.472" stop-color="#999702"/><stop offset="1.000" stop-color="#997400"/></linearGradient><linearGradient id="c316" gradientUnits="userSpaceOnUse" x1="1371" x2="1585" y1="0" y2="0"><stop offset="0.000" stop-color="#76990a"/><stop offset="0.463" stop-color="#999703"/><stop offset="1.000" stop-color="#997300"/></linearGradient><linearGradient id="c317" gradientUnits="userSpaceOnUse" x1="1371" x2="1585" y1="0" y2="0"><stop offset="0.000" stop-color="#77990b"/><stop offset="0.453" stop-color="#999703"/><stop offset="0.921" stop-color="#997700"/><stop offset="1.000" stop-color="#997200"/></linearGradient><linearGradient id="c318" gradientUnits="userSpaceOnUse" x1="1371" x2="1585" y1="0" y2="0"><stop offset="0.000" stop-color="#77990b"/><stop offset="0.439" stop-color="#999704"/><stop offset="0.893" stop-color="#997800"/><stop offset="1.000" stop-color="#997200"/></linearGradient><linearGradient id="c319" gradientUnits="userSpaceOnUse" x1="1371" x2="1585" y1="0" y2="0"><stop offset="0.000" stop-color="#78990c"/><stop offset="0.430" stop-color="#999705"/><stop offset="0.888" stop-color="#997700"/><stop offset="1.000" stop-color="#997100"/></linearGradient><linearGradient id="c320" gradientUnits="userSpaceOnUse" x1="1371" x2="1585" y1="0" y2="0"><stop offset="0.000" stop-color="#79990c"/><stop offset="0.421" stop-color="#999705"/><stop offset="0.897" stop-color="#997600"/><stop offset="1.000" stop-color="#997000"/></linearGradient><linearGradient id="c321" gradientUnits="userSpaceOnUse" x1="1371" x2="1585" y1="0" y2="0"><stop offset="0.000" stop-color="#7a990d"/><stop offset="0.407" stop-color="#999706"/><stop offset="0.907" stop-color="#997500"/><stop offset="1.000" stop-color="#997000"/></linearGradient><linearGradient id="c322" gradientUnits="userSpaceOnUse" x1="1371" x2="1585" y1="0" y2="0"><stop offset="0.000" stop-color="#7a990d"/><stop offset="0.397" stop-color="#999706"/><stop offset="0.921" stop-color="#997300"/><stop offset="1.000" stop-color="#996f00"/></linearGradient><linearGradient id="c323" gradientUnits="userSpaceOnUse" x1="1371" x2="1585" y1="0" y2="0"><stop offset="0.000" stop-color="#7b990e"/><stop offset="0.383" stop-color="#999707"/><stop offset="0.930" stop-color="#997200"/><stop offset="1.000" stop-color="#996e00"/></linearGradient><linearGradient id="c324" gradientUnits="userSpaceOnUse" x1="1371" x2="1585" y1="0" y2="0"><stop offset="0.000" stop-color="#7c990e"/><stop offset="0.374" stop-color="#999708"/><stop offset="0.921" stop-color="#997200"/><stop offset="1.000" stop-color="#996e00"/></linearGradient><linearGradient id="c325" gradientUnits="userSpaceOnUse" x1="1371" x2="1585" y1="0" y2="0"><stop offset="0.000" stop-color="#7d990e"/><stop offset="0.364" stop-color="#999708"/><stop offset="0.911" stop-color="#997200"/><stop offset="1.000" stop-color="#996d00"/></linearGradient><linearGradient id="c326" gradientUnits="userSpaceOnUse" x1="1371" x2="1585" y1="0" y2="0"><stop offset="0.000" stop-color="#7e990f"/><stop offset="0.350" stop-color="#999709"/><stop offset="0.893" stop-color="#997200"/><stop offset="1.000" stop-color="#996c00"/></linearGradient><linearGradient id="c327" gradientUnits="userSpaceOnUse" x1="1371" x2="1585" y1="0" y2="0"><stop offset="0.000" stop-color="#7e990f"/><stop offset="0.341" stop-color="#99970a"/><stop offset="0.883" stop-color="#997200"/><stop offset="1.000" stop-color="#996c00"/></linearGradient><linearGradient id="c328" gradientUnits="userSpaceOnUse" x1="1371" x2="1585" y1="0" y2="0"><stop offset="0.000" stop-color="#7f9910"/><stop offset="0.332" stop-color="#99970a"/><stop offset="0.874" stop-color="#997200"/><stop offset="1.000" stop-color="#996b00"/></linearGradient><linearGradient id="c329" gradientUnits="userSpaceOnUse" x1="1371" x2="1585" y1="0" y2="0"><stop offset="0.000" stop-color="#809910"/><stop offset="0.318" stop-color="#99970b"/><stop offset="0.855" stop-color="#997201"/><stop offset="1.000" stop-color="#996a00"/></linearGradient><linearGradient id="c330" gradientUnits="userSpaceOnUse" x1="1371" x2="1585" y1="0" y2="0"><stop offset="0.000" stop-color="#819911"/><stop offset="0.308" stop-color="#99970c"/><stop offset="0.846" stop-color="#997201"/><stop offset="1.000" stop-color="#996a00"/></linearGradient><linearGradient id="c331" gradientUnits="userSpaceOnUse" x1="1371" x2="1585" y1="0" y2="0"><stop offset="0.000" stop-color="#829911"/><stop offset="0.294" stop-color="#99970c"/><stop offset="0.827" stop-color="#997202"/><stop offset="1.000" stop-color="#996900"/></linearGradient><linearGradient id="c332" gradientUnits="userSpaceOnUse" x1="1371" x2="1585" y1="0" y2="0"><stop offset="0.000" stop-color="#839912"/><stop offset="0.285" stop-color="#99970d"/><stop offset="0.818" stop-color="#997203"/><stop offset="1.000" stop-color="#996800"/></linearGradient><linearGradient id="c333" gradientUnits="userSpaceOnUse" x1="1371" x2="1585" y1="0" y2="0"><stop offset="0.000" stop-color="#849912"/><stop offset="0.276" stop-color="#99970e"/><stop offset="0.808" stop-color="#997203"/><stop offset="1.000" stop-color="#996800"/></linearGradient><linearGradient id="c334" gradientUnits="userSpaceOnUse" x1="1371" x2="1585" y1="0" y2="0"><stop offset="0.000" stop-color="#849913"/><stop offset="0.262" stop-color="#99970e"/><stop offset="0.794" stop-color="#997204"/><stop offset="1.000" stop-color="#996701"/></linearGradient><linearGradient id="c335" gradientUnits="userSpaceOnUse" x1="1371" x2="1585" y1="0" y2="0"><stop offset="0.000" stop-color="#859913"/><stop offset="0.252" stop-color="#99970f"/><stop offset="0.780" stop-color="#997204"/><stop offset="1.000" stop-color="#996601"/></linearGradient><linearGradient id="c336" gradientUnits="userSpaceOnUse" x1="1371" x2="1585" y1="0" y2="0"><stop offset="0.000" stop-color="#869914"/><stop offset="0.243" stop-color="#999710"/><stop offset="0.771" stop-color="#997205"/><stop offset="1.000" stop-color="#996601"/></linearGradient><linearGradient id="c337" gradientUnits="userSpaceOnUse" x1="1371" x2="1585" y1="0" y2="0"><stop offset="0.000" stop-color="#879914"/><stop offset="0.229" stop-color="#999710"/><stop offset="0.757" stop-color="#997205"/><stop offset="1.000" stop-color="#996501"/></linearGradient><linearGradient id="c338" gradientUnits="userSpaceOnUse" x1="1371" x2="1585" y1="0" y2="0"><stop offset="0.000" stop-color="#889915"/><stop offset="0.220" stop-color="#999711"/><stop offset="0.743" stop-color="#997206"/><stop offset="1.000" stop-color="#996502"/></linearGradient><linearGradient id="c339" gradientUnits="userSpaceOnUse" x1="1371" x2="1585" y1="0" y2="0"><stop offset="0.000" stop-color="#a4ff00"/><stop offset="0.771" stop-color="#fffc00"/><stop offset="1.000" stop-color="#ffe100"/></linearGradient><linearGradient id="c340" gradientUnits="userSpaceOnUse" x1="1371" x2="1585" y1="0" y2="0"><stop offset="0.000" stop-color="#a5ff00"/><stop offset="0.762" stop-color="#fffc00"/><stop offset="1.000" stop-color="#ffe000"/></linearGradient><linearGradient id="c341" gradientUnits="userSpaceOnUse" x1="1371" x2="1585" y1="0" y2="0"><stop offset="0.000" stop-color="#a6ff01"/><stop offset="0.748" stop-color="#fffc00"/><stop offset="1.000" stop-color="#ffdf00"/></linearGradient><linearGradient id="c342" gradientUnits="userSpaceOnUse" x1="1371" x2="1585" y1="0" y2="0"><stop offset="0.000" stop-color="#a7ff01"/><stop offset="0.738" stop-color="#fffc00"/><stop offset="1.000" stop-color="#ffde00"/></linearGradient><linearGradient id="c343" gradientUnits="userSpaceOnUse" x1="1371" x2="1585" y1="0" y2="0"><stop offset="0.000" stop-color="#a8ff02"/><stop offset="0.729" stop-color="#fffc00"/><stop offset="1.000" stop-color="#ffdc00"/></linearGradient><linearGradient id="c344" gradientUnits="userSpaceOnUse" x1="1371" x2="1585" y1="0" y2="0"><stop offset="0.000" stop-color="#aaff02"/><stop offset="0.715" stop-color="#fffc00"/><stop offset="1.000" stop-color="#ffdb00"/></linearGradient><linearGradient id="c345" gradientUnits="userSpaceOnUse" x1="1371" x2="1585" y1="0" y2="0"><stop offset="0.000" stop-color="#abff03"/><stop offset="0.706" stop-color="#fffc00"/><stop offset="1.000" stop-color="#ffda00"/></linearGradient><linearGradient id="c346" gradientUnits="userSpaceOnUse" x1="1371" x2="1585" y1="0" y2="0"><stop offset="0.000" stop-color="#acff04"/><stop offset="0.692" stop-color="#fffc00"/><stop offset="1.000" stop-color="#ffd900"/></linearGradient><linearGradient id="c347" gradientUnits="userSpaceOnUse" x1="1371" x2="1585" y1="0" y2="0"><stop offset="0.000" stop-color="#adff04"/><stop offset="0.570" stop-color="#f3ff00"/><stop offset="0.692" stop-color="#fffb00"/><stop offset="1.000" stop-color="#ffd700"/></linearGradient><linearGradient id="c348" gradientUnits="userSpaceOnUse" x1="1371" x2="1585" y1="0" y2="0"><stop offset="0.000" stop-color="#aeff05"/><stop offset="0.486" stop-color="#e9ff00"/><stop offset="0.673" stop-color="#fffc00"/><stop offset="1.000" stop-color="#ffd600"/></linearGradient><linearGradient id="c349" gradientUnits="userSpaceOnUse" x1="1371" x2="1585" y1="0" y2="0"><stop offset="0.000" stop-color="#afff05"/><stop offset="0.458" stop-color="#e7ff00"/><stop offset="0.664" stop-color="#fffc00"/><stop offset="1.000" stop-color="#ffd500"/></linearGradient><linearGradient id="c350" gradientUnits="userSpaceOnUse" x1="1371" x2="1585" y1="0" y2="0"><stop offset="0.000" stop-color="#b0ff06"/><stop offset="0.453" stop-color="#e8ff00"/><stop offset="0.654" stop-color="#fffc00"/><stop offset="1.000" stop-color="#ffd400"/></linearGradient><linearGradient id="c351" gradientUnits="userSpaceOnUse" x1="1371" x2="1585" y1="0" y2="0"><stop offset="0.000" stop-color="#b1ff07"/><stop offset="0.453" stop-color="#e9ff00"/><stop offset="0.640" stop-color="#fffc00"/><stop offset="1.000" stop-color="#ffd200"/></linearGradient><linearGradient id="c352" gradientUnits="userSpaceOnUse" x1="1371" x2="1585" y1="0" y2="0"><stop offset="0.000" stop-color="#b2ff07"/><stop offset="0.463" stop-color="#ecff00"/><stop offset="0.631" stop-color="#fffc00"/><stop offset="1.000" stop-color="#ffd100"/></linearGradient><linearGradient id="c353" gradientUnits="userSpaceOnUse" x1="1371" x2="1585" y1="0" y2="0"><stop offset="0.000" stop-color="#b3ff08"/><stop offset="0.477" stop-color="#efff00"/><stop offset="0.621" stop-color="#fffb00"/><stop offset="1.000" stop-color="#ffd000"/></linearGradient><linearGradient id="c354" gradientUnits="userSpaceOnUse" x1="1371" x2="1585" y1="0" y2="0"><stop offset="0.000" stop-color="#b5ff09"/><stop offset="0.491" stop-color="#f2ff00"/><stop offset="0.612" stop-color="#fffb00"/><stop offset="1.000" stop-color="#ffcf00"/></linearGradient><linearGradient id="c355" gradientUnits="userSpaceOnUse" x1="1371" x2="1585" y1="0" y2="0"><stop offset="0.000" stop-color="#b6ff09"/><stop offset="0.509" stop-color="#f6ff00"/><stop offset="0.607" stop-color="#fffa00"/><stop offset="1.000" stop-color="#ffce00"/></linearGradient><linearGradient id="c356" gradientUnits="userSpaceOnUse" x1="1371" x2="1585" y1="0" y2="0"><stop offset="0.000" stop-color="#b7ff0a"/><stop offset="0.528" stop-color="#faff00"/><stop offset="0.626" stop-color="#fff600"/><stop offset="1.000" stop-color="#ffcc00"/></linearGradient><linearGradient id="c357" gradientUnits="userSpaceOnUse" x1="1371" x2="1585" y1="0" y2="0"><stop offset="0.000" stop-color="#b8ff0b"/><stop offset="0.542" stop-color="#feff00"/><stop offset="1.000" stop-color="#ffcb00"/></linearGradient><linearGradient id="c358" gradientUnits="userSpaceOnUse" x1="1371" x2="1585" y1="0" y2="0"><stop offset="0.000" stop-color="#b9ff0b"/><stop offset="0.561" stop-color="#fffc00"/><stop offset="1.000" stop-color="#ffca00"/></linearGradient><linearGradient id="c359" gradientUnits="userSpaceOnUse" x1="1371" x2="1585" y1="0" y2="0"><stop offset="0.000" stop-color="#baff0c"/><stop offset="0.547" stop-color="#fffc00"/><stop offset="1.000" stop-color="#ffc900"/></linearGradient><linearGradient id="c360" gradientUnits="userSpaceOnUse" x1="1371" x2="1585" y1="0" y2="0"><stop offset="0.000" stop-color="#bcff0d"/><stop offset="0.537" stop-color="#fffc00"/><stop offset="1.000" stop-color="#ffc800"/></linearGradient><linearGradient id="c361" gradientUnits="userSpaceOnUse" x1="1371" x2="1585" y1="0" y2="0"><stop offset="0.000" stop-color="#bdff0d"/><stop offset="0.528" stop-color="#fffc00"/><stop offset="1.000" stop-color="#ffc700"/></linearGradient><linearGradient id="c362" gradientUnits="userSpaceOnUse" x1="1371" x2="1585" y1="0" y2="0"><stop offset="0.000" stop-color="#beff0e"/><stop offset="0.514" stop-color="#fffc00"/><stop offset="1.000" stop-color="#ffc500"/></linearGradient><linearGradient id="c363" gradientUnits="userSpaceOnUse" x1="1371" x2="1585" y1="0" y2="0"><stop offset="0.000" stop-color="#bfff0f"/><stop offset="0.505" stop-color="#fffc01"/><stop offset="1.000" stop-color="#ffc400"/></linearGradient><linearGradient id="c364" gradientUnits="userSpaceOnUse" x1="1371" x2="1585" y1="0" y2="0"><stop offset="0.000" stop-color="#c1ff0f"/><stop offset="0.495" stop-color="#fffc02"/><stop offset="1.000" stop-color="#ffc300"/></linearGradient><linearGradient id="c365" gradientUnits="userSpaceOnUse" x1="1371" x2="1585" y1="0" y2="0"><stop offset="0.000" stop-color="#c2ff10"/><stop offset="0.481" stop-color="#fffc03"/><stop offset="1.000" stop-color="#ffc200"/></linearGradient><linearGradient id="c366" gradientUnits="userSpaceOnUse" x1="1371" x2="1585" y1="0" y2="0"><stop offset="0.000" stop-color="#c3ff11"/><stop offset="0.472" stop-color="#fffc04"/><stop offset="0.995" stop-color="#ffc100"/><stop offset="1.000" stop-color="#ffc100"/></linearGradient><linearGradient id="c367" gradientUnits="userSpaceOnUse" x1="1371" x2="1585" y1="0" y2="0"><stop offset="0.000" stop-color="#c4ff11"/><stop offset="0.458" stop-color="#fffc05"/><stop offset="0.893" stop-color="#ffca00"/><stop offset="1.000" stop-color="#ffc000"/></linearGradient><linearGradient id="c368" gradientUnits="userSpaceOnUse" x1="1371" x2="1585" y1="0" y2="0"><stop offset="0.000" stop-color="#c6ff12"/><stop offset="0.449" stop-color="#fffc06"/><stop offset="0.855" stop-color="#ffcc00"/><stop offset="1.000" stop-color="#ffbf00"/></linearGradient><linearGradient id="c369" gradientUnits="userSpaceOnUse" x1="1371" x2="1585" y1="0" y2="0"><stop offset="0.000" stop-color="#c7ff13"/><stop offset="0.439" stop-color="#fffc07"/><stop offset="0.850" stop-color="#ffcc00"/><stop offset="1.000" stop-color="#ffbd00"/></linearGradient><linearGradient id="c370" gradientUnits="userSpaceOnUse" x1="1371" x2="1585" y1="0" y2="0"><stop offset="0.000" stop-color="#c8ff14"/><stop offset="0.425" stop-color="#fffc08"/><stop offset="0.855" stop-color="#ffca00"/><stop offset="1.000" stop-color="#ffbc00"/></linearGradient><linearGradient id="c371" gradientUnits="userSpaceOnUse" x1="1371" x2="1585" y1="0" y2="0"><stop offset="0.000" stop-color="#c9ff14"/><stop offset="0.416" stop-color="#fffc09"/><stop offset="0.864" stop-color="#ffc800"/><stop offset="1.000" stop-color="#ffbb00"/></linearGradient><linearGradient id="c372" gradientUnits="userSpaceOnUse" x1="1371" x2="1585" y1="0" y2="0"><stop offset="0.000" stop-color="#cbff15"/><stop offset="0.407" stop-color="#fffc0a"/><stop offset="0.883" stop-color="#ffc500"/><stop offset="1.000" stop-color="#ffba00"/></linearGradient><linearGradient id="c373" gradientUnits="userSpaceOnUse" x1="1371" x2="1585" y1="0" y2="0"><stop offset="0.000" stop-color="#ccff16"/><stop offset="0.393" stop-color="#fffc0b"/><stop offset="0.897" stop-color="#ffc200"/><stop offset="1.000" stop-color="#ffb900"/></linearGradient><linearGradient id="c374" gradientUnits="userSpaceOnUse" x1="1371" x2="1585" y1="0" y2="0"><stop offset="0.000" stop-color="#cdff17"/><stop offset="0.383" stop-color="#fffc0c"/><stop offset="0.897" stop-color="#ffc100"/><stop offset="1.000" stop-color="#ffb800"/></linearGradient><linearGradient id="c375" gradientUnits="userSpaceOnUse" x1="1371" x2="1585" y1="0" y2="0"><stop offset="0.000" stop-color="#cfff17"/><stop offset="0.369" stop-color="#fffc0d"/><stop offset="0.879" stop-color="#ffc200"/><stop offset="1.000" stop-color="#ffb700"/></linearGradient><linearGradient id="c376" gradientUnits="userSpaceOnUse" x1="1371" x2="1585" y1="0" y2="0"><stop offset="0.000" stop-color="#d0ff18"/><stop offset="0.360" stop-color="#fffc0e"/><stop offset="0.869" stop-color="#ffc100"/><stop offset="1.000" stop-color="#ffb600"/></linearGradient><linearGradient id="c377" gradientUnits="userSpaceOnUse" x1="1371" x2="1585" y1="0" y2="0"><stop offset="0.000" stop-color="#d1ff19"/><stop offset="0.350" stop-color="#fffc0f"/><stop offset="0.860" stop-color="#ffc100"/><stop offset="1.000" stop-color="#ffb400"/></linearGradient><linearGradient id="c378" gradientUnits="userSpaceOnUse" x1="1371" x2="1585" y1="0" y2="0"><stop offset="0.000" stop-color="#d3ff1a"/><stop offset="0.336" stop-color="#fffc10"/><stop offset="0.846" stop-color="#ffc101"/><stop offset="1.000" stop-color="#ffb300"/></linearGradient><linearGradient id="c379" gradientUnits="userSpaceOnUse" x1="1371" x2="1585" y1="0" y2="0"><stop offset="0.000" stop-color="#d4ff1a"/><stop offset="0.327" stop-color="#fffc11"/><stop offset="0.832" stop-color="#ffc102"/><stop offset="1.000" stop-color="#ffb200"/></linearGradient><linearGradient id="c380" gradientUnits="userSpaceOnUse" x1="1371" x2="1585" y1="0" y2="0"><stop offset="0.000" stop-color="#d6ff1b"/><stop offset="0.318" stop-color="#fffc12"/><stop offset="0.822" stop-color="#ffc102"/><stop offset="1.000" stop-color="#ffb100"/></linearGradient><linearGradient id="c381" gradientUnits="userSpaceOnUse" x1="1371" x2="1585" y1="0" y2="0"><stop offset="0.000" stop-color="#d7ff1c"/><stop offset="0.304" stop-color="#fffc14"/><stop offset="0.808" stop-color="#ffc103"/><stop offset="1.000" stop-color="#ffb000"/></linearGradient><linearGradient id="c382" gradientUnits="userSpaceOnUse" x1="1371" x2="1585" y1="0" y2="0"><stop offset="0.000" stop-color="#d8ff1d"/><stop offset="0.294" stop-color="#fffc15"/><stop offset="0.799" stop-color="#ffc104"/><stop offset="1.000" stop-color="#ffaf00"/></linearGradient><linearGradient id="c383" gradientUnits="userSpaceOnUse" x1="1371" x2="1585" y1="0" y2="0"><stop offset="0.000" stop-color="#daff1e"/><stop offset="0.280" stop-color="#fffc16"/><stop offset="0.780" stop-color="#ffc105"/><stop offset="1.000" stop-color="#ffae00"/></linearGradient><linearGradient id="c384" gradientUnits="userSpaceOnUse" x1="1371" x2="1585" y1="0" y2="0"><stop offset="0.000" stop-color="#dbff1e"/><stop offset="0.271" stop-color="#fffc17"/><stop offset="0.771" stop-color="#ffc106"/><stop offset="1.000" stop-color="#ffad00"/></linearGradient><linearGradient id="c385" gradientUnits="userSpaceOnUse" x1="1371" x2="1585" y1="0" y2="0"><stop offset="0.000" stop-color="#ddff1f"/><stop offset="0.262" stop-color="#fffc18"/><stop offset="0.762" stop-color="#ffc107"/><stop offset="1.000" stop-color="#ffac01"/></linearGradient><linearGradient id="c386" gradientUnits="userSpaceOnUse" x1="1371" x2="1585" y1="0" y2="0"><stop offset="0.000" stop-color="#deff20"/><stop offset="0.248" stop-color="#fffc19"/><stop offset="0.743" stop-color="#ffc108"/><stop offset="1.000" stop-color="#ffab01"/></linearGradient><linearGradient id="c387" gradientUnits="userSpaceOnUse" x1="1371" x2="1585" y1="0" y2="0"><stop offset="0.000" stop-color="#e0ff21"/><stop offset="0.238" stop-color="#fffc1a"/><stop offset="0.734" stop-color="#ffc109"/><stop offset="1.000" stop-color="#ffaa02"/></linearGradient><linearGradient id="c388" gradientUnits="userSpaceOnUse" x1="1371" x2="1585" y1="0" y2="0"><stop offset="0.000" stop-color="#e1ff22"/><stop offset="0.229" stop-color="#fffc1b"/><stop offset="0.724" stop-color="#ffc10a"/><stop offset="1.000" stop-color="#ffa902"/></linearGradient><linearGradient id="c389" gradientUnits="userSpaceOnUse" x1="1371" x2="1585" y1="0" y2="0"><stop offset="0.000" stop-color="#e3ff23"/><stop offset="0.215" stop-color="#fffc1c"/><stop offset="0.706" stop-color="#ffc10b"/><stop offset="1.000" stop-color="#ffa803"/></linearGradient><linearGradient id="bbg" x1="0" y1="0" x2="0" y2="1"><stop offset="0" stop-color="#4a4a4a"/><stop offset="1" stop-color="#2a2a2a"/></linearGradient><linearGradient id="selc" x1="0" y1="0" x2="0" y2="1"><stop offset="0" stop-color="#1a1a1a"/><stop offset="1" stop-color="#383838"/></linearGradient><linearGradient id="cell" x1="0" y1="0" x2="0" y2="1"><stop offset="0" stop-color="#a6a6a6"/><stop offset="0.5" stop-color="#7c7c7c"/><stop offset="1" stop-color="#575757"/></linearGradient><linearGradient id="upc" x1="0" y1="0" x2="0" y2="1"><stop offset="0" stop-color="#6a6a6a"/><stop offset="1" stop-color="#9a9a9a"/></linearGradient><linearGradient id="btn" x1="0" y1="0" x2="0" y2="1"><stop offset="0" stop-color="#a4a4a4"/><stop offset="1" stop-color="#626262"/></linearGradient><linearGradient id="btn2" x1="0" y1="0" x2="0" y2="1"><stop offset="0" stop-color="#8c8c8c"/><stop offset="1" stop-color="#5a5a5a"/></linearGradient><linearGradient id="bc" x1="0" y1="0" x2="0" y2="1"><stop offset="0" stop-color="#6e6e6e"/><stop offset="1" stop-color="#a2a2a2"/></linearGradient><linearGradient id="sq" x1="0" y1="0" x2="0" y2="1"><stop offset="0" stop-color="#b4b4b4"/><stop offset="0.5" stop-color="#a2a2a2"/><stop offset="0.5" stop-color="#888"/><stop offset="1" stop-color="#7c7c7c"/></linearGradient><linearGradient id="sqb" x1="0" y1="0" x2="0" y2="1"><stop offset="0" stop-color="#2a2a2a"/><stop offset="0.5" stop-color="#1c1c1c"/><stop offset="0.5" stop-color="#000"/><stop offset="1" stop-color="#000"/></linearGradient><linearGradient id="dkc" x1="0" y1="0" x2="0" y2="1"><stop offset="0" stop-color="#252525"/><stop offset="1" stop-color="#3c3c3c"/></linearGradient><linearGradient id="dkb" x1="0" y1="0" x2="0" y2="1"><stop offset="0" stop-color="#333"/><stop offset="1" stop-color="#272727"/></linearGradient></defs>
<rect x="0" y="0" width="1600" height="870" fill="#303030" />
<rect x="0" y="0" width="1600" height="23" fill="#0098bc" />
<rect x="0" y="23" width="1600" height="65" fill="#222222" />
<rect x="0" y="88" width="1" height="720" fill="#222222" />
<rect x="1599" y="88" width="1" height="720" fill="#222222" />
<rect x="0" y="807" width="1600" height="63" fill="#222222" />
<path d="M10.1 10.9L10.10 3.30A7.6 7.6 0 0 1 13.12 3.93Z" fill="#2aff00"/>
<path d="M10.1 10.9L12.70 3.76A7.6 7.6 0 0 1 15.33 5.38Z" fill="#7fff00"/>
<path d="M10.1 10.9L14.99 5.08A7.6 7.6 0 0 1 16.90 7.50Z" fill="#d4ff00"/>
<path d="M10.1 10.9L16.68 7.10A7.6 7.6 0 0 1 17.65 10.03Z" fill="#ffd400"/>
<path d="M10.1 10.9L17.58 9.58A7.6 7.6 0 0 1 17.49 12.67Z" fill="#ff7f00"/>
<path d="M10.1 10.9L17.58 12.22A7.6 7.6 0 0 1 16.44 15.09Z" fill="#ff2a00"/>
<path d="M10.1 10.9L16.68 14.70A7.6 7.6 0 0 1 14.63 17.00Z" fill="#ff002a"/>
<path d="M10.1 10.9L14.99 16.72A7.6 7.6 0 0 1 12.27 18.18Z" fill="#ff007f"/>
<path d="M10.1 10.9L12.70 18.04A7.6 7.6 0 0 1 9.64 18.49Z" fill="#ff00d4"/>
<path d="M10.1 10.9L10.10 18.50A7.6 7.6 0 0 1 7.08 17.87Z" fill="#d400ff"/>
<path d="M10.1 10.9L7.50 18.04A7.6 7.6 0 0 1 4.87 16.42Z" fill="#7f00ff"/>
<path d="M10.1 10.9L5.21 16.72A7.6 7.6 0 0 1 3.30 14.30Z" fill="#2a00ff"/>
<path d="M10.1 10.9L3.52 14.70A7.6 7.6 0 0 1 2.55 11.77Z" fill="#002aff"/>
<path d="M10.1 10.9L2.62 12.22A7.6 7.6 0 0 1 2.71 9.13Z" fill="#007fff"/>
<path d="M10.1 10.9L2.62 9.58A7.6 7.6 0 0 1 3.76 6.71Z" fill="#00d4ff"/>
<path d="M10.1 10.9L3.52 7.10A7.6 7.6 0 0 1 5.57 4.80Z" fill="#00ffd4"/>
<path d="M10.1 10.9L5.21 5.08A7.6 7.6 0 0 1 7.93 3.62Z" fill="#00ff7f"/>
<path d="M10.1 10.9L7.50 3.76A7.6 7.6 0 0 1 10.56 3.31Z" fill="#00ff2a"/>
<circle cx="10.1" cy="10.9" r="6.2" fill="#000"/>
<text x="10.2" y="13.7" font-size="7.8" fill="#fff" text-anchor="middle" textLength="10.3" lengthAdjust="spacingAndGlyphs" font-weight="bold">CM</text>
<text x="23.5" y="16" font-size="12.5" fill="#fff" textLength="342" lengthAdjust="spacingAndGlyphs">CalMAN 2016 CalMAN Ultimate for Business 109 Days Remaining</text>
<line x1="1479" y1="10.5" x2="1489" y2="10.5" stroke="#fff" stroke-width="1" />
<path d="M1524.5 7.5h8v8h-8z M1526.5 7.5v-2h8v8h-2" fill="none" stroke="#fff" stroke-width="1"/>
<path d="M1570 5l10 10M1580 5l-10 10" stroke="#fff" stroke-width="1.1" fill="none"/>
<path d="M0.5 22.8V48.5a4 4 0 0 0 4 4H178.5a4 4 0 0 0 4 -4V22.8" fill="url(#gbtn)" stroke="#e8f8e8" stroke-width="1"/>
<text x="13.4" y="48.7" font-size="31" fill="#1a7a10" textLength="129.5" lengthAdjust="spacingAndGlyphs" font-weight="bold" opacity="0.45">CalMAN</text>
<text x="13.0" y="48.0" font-size="31" fill="#fff" textLength="129.5" lengthAdjust="spacingAndGlyphs" font-weight="bold">CalMAN</text>
<circle cx="166" cy="37.5" r="10" fill="url(#gdd)"/>
<path d="M160.5 35.5h11l-5.5 5.5z" fill="#fff"/>
<rect x="190" y="35.3" width="1410" height="5" fill="url(#rb)" />
<path d="M-1 58.5H22.5a4 4 0 0 1 4 4V81.5a4 4 0 0 1 -4 4H-1z" fill="url(#pb)" stroke="#d0d0d0" stroke-width="1"/>
<circle cx="13" cy="72" r="10" fill="url(#pbc)"/>
<path d="M10 66.5l5.5 5.5l-5.5 5.5z" fill="#fff"/>
<path d="M29.5 88V62.5a4 4 0 0 1 4 -4H116.5a4 4 0 0 1 4 4V88" fill="url(#tab)" stroke="#858585" stroke-width="1"/>
<line x1="87.5" y1="59" x2="87.5" y2="88" stroke="#858585" stroke-width="1" />
<text x="35.3" y="77.8" font-size="12" fill="#e4e4e4" textLength="46.5" lengthAdjust="spacingAndGlyphs">History 1</text>
<circle cx="103.2" cy="75" r="9.6" fill="url(#plusc)"/>
<text x="103.2" y="79.2" font-size="11" fill="#858585" text-anchor="middle">+</text>
<path d="M1058.5 88V62a4 4 0 0 1 4 -4H1208.8a4 4 0 0 1 4 4V88z" fill="url(#pnl)"/>
<path d="M1058.5 88V62a4 4 0 0 1 4 -4h1.5V88z" fill="#08e008"/>
<path d="M1059.0 88V62a3.5 3.5 0 0 1 3.5 -3.5H1208.8a3.5 3.5 0 0 1 3.5 3.5V88" fill="none" stroke="#686868" stroke-width="1" stroke-opacity="0.8"/>
<text x="1067" y="70" font-size="11.5" fill="#fff" textLength="65.5" lengthAdjust="spacingAndGlyphs">X-Rite i1Pro 2</text>
<text x="1067" y="84" font-size="11.5" fill="#fff" textLength="77.5" lengthAdjust="spacingAndGlyphs">LCD Direct View</text>
<circle cx="1157.5" cy="73.0" r="9.6" fill="url(#ddc)"/>
<path d="M1152.3 72.0h10.4l-5.2 5.5z" fill="#fff"/>
<line x1="1177.5" y1="61" x2="1177.5" y2="88" stroke="#3c3c3c" stroke-width="1" />
<line x1="1178.5" y1="61" x2="1178.5" y2="88" stroke="#777" stroke-width="1" />
<circle cx="1197.6" cy="72.9" r="12.8" fill="#0000f4" stroke="#fff" stroke-width="0.9"/>
<text x="1197.6" y="76.2" font-size="9" fill="#fff" text-anchor="middle" textLength="15.5" lengthAdjust="spacingAndGlyphs" font-weight="bold">236</text>
<path d="M1218.8 88V62a4 4 0 0 1 4 -4H1344a4 4 0 0 1 4 4V88z" fill="url(#pnl)"/>
<path d="M1218.8 88V62a4 4 0 0 1 4 -4h1.5V88z" fill="#f0f000"/>
<path d="M1219.3 88V62a3.5 3.5 0 0 1 3.5 -3.5H1344a3.5 3.5 0 0 1 3.5 3.5V88" fill="none" stroke="#686868" stroke-width="1" stroke-opacity="0.8"/>
<text x="1227.5" y="70" font-size="11.5" fill="#fff" textLength="32.5" lengthAdjust="spacingAndGlyphs">Source</text>
<circle cx="1332.5" cy="73.0" r="9.6" fill="url(#ddc)"/>
<path d="M1327.3 72.0h10.4l-5.2 5.5z" fill="#fff"/>
<path d="M1354.6 88V62a4 4 0 0 1 4 -4H1494a4 4 0 0 1 4 4V88z" fill="url(#pnl)"/>
<path d="M1354.6 88V62a4 4 0 0 1 4 -4h1.5V88z" fill="#f0f000"/>
<path d="M1355.1 88V62a3.5 3.5 0 0 1 3.5 -3.5H1494a3.5 3.5 0 0 1 3.5 3.5V88" fill="none" stroke="#686868" stroke-width="1" stroke-opacity="0.8"/>
<text x="1363.7" y="70" font-size="11.5" fill="#fff" textLength="105" lengthAdjust="spacingAndGlyphs">Direct Display Control</text>
<circle cx="1482" cy="73.0" r="9.6" fill="url(#ddc)"/>
<path d="M1476.8 72.0h10.4l-5.2 5.5z" fill="#fff"/>
<rect x="1501.5" y="58.5" width="33.0" height="27.2" rx="4" fill="url(#tb)" stroke="#dcdcdc" stroke-width="1"/>
<circle cx="1518.0" cy="72" r="10" fill="url(#tbc)"/>
<path d="M1522.45 70.82L1524.31 70.92L1524.31 73.08L1522.45 73.18L1521.98 74.31L1523.23 75.69L1521.69 77.23L1520.31 75.98L1519.18 76.45L1519.08 78.31L1516.92 78.31L1516.82 76.45L1515.69 75.98L1514.31 77.23L1512.77 75.69L1514.02 74.31L1513.55 73.18L1511.69 73.08L1511.69 70.92L1513.55 70.82L1514.02 69.69L1512.77 68.31L1514.31 66.77L1515.69 68.02L1516.82 67.55L1516.92 65.69L1519.08 65.69L1519.18 67.55L1520.31 68.02L1521.69 66.77L1523.23 68.31L1521.98 69.69z M1521 72a3 3 0 1 0 -6 0a3 3 0 1 0 6 0z" fill="#e6e6e6" fill-rule="evenodd"/>
<rect x="1537.5" y="58.5" width="33.0" height="27.2" rx="4" fill="url(#tb)" stroke="#dcdcdc" stroke-width="1"/>
<circle cx="1554.0" cy="72" r="10" fill="url(#tbc)"/>
<text x="1554" y="78" font-size="15" fill="#fff" text-anchor="middle" font-weight="bold">?</text>
<rect x="1573.5" y="58.5" width="32.5" height="27.2" rx="4" fill="url(#tb)" stroke="#dcdcdc" stroke-width="1"/>
<circle cx="1587" cy="72" r="10" fill="url(#tbc)"/>
<path d="M1589.4 66.7l-5.6 4.9l5.6 4.9z" fill="#fff"/>
<text x="23.5" y="139.5" font-size="34" fill="#f0f0f0" textLength="311" lengthAdjust="spacingAndGlyphs" stroke="#f0f0f0" stroke-width="0.4">Saturation Sweeps</text>
<text x="174" y="184" font-size="13" fill="#d0d0d0" text-anchor="middle" textLength="76" lengthAdjust="spacingAndGlyphs">DeltaE 2000</text>
<rect x="42" y="188.6" width="298.7" height="363.4" fill="#222222" />
<line x1="81.4" y1="188.6" x2="81.4" y2="552" stroke="#8c8c8c" stroke-width="1.2" />
<line x1="121.2" y1="188.6" x2="121.2" y2="552" stroke="#8c8c8c" stroke-width="1.2" />
<line x1="161.0" y1="188.6" x2="161.0" y2="552" stroke="#8c8c8c" stroke-width="1.2" />
<line x1="200.9" y1="188.6" x2="200.9" y2="552" stroke="#8c8c8c" stroke-width="1.2" />
<line x1="240.7" y1="188.6" x2="240.7" y2="552" stroke="#8c8c8c" stroke-width="1.2" />
<line x1="280.5" y1="188.6" x2="280.5" y2="552" stroke="#8c8c8c" stroke-width="1.2" />
<line x1="320.3" y1="188.6" x2="320.3" y2="552" stroke="#8c8c8c" stroke-width="1.2" />
<line x1="41.6" y1="552" x2="41.6" y2="556" stroke="#b0b0b0" stroke-width="1.2" />
<text x="41.6" y="572" font-size="13" fill="#d0d0d0" text-anchor="middle" textLength="7.7" lengthAdjust="spacingAndGlyphs">0</text>
<line x1="81.4" y1="552" x2="81.4" y2="556" stroke="#b0b0b0" stroke-width="1.2" />
<text x="81.4" y="572" font-size="13" fill="#d0d0d0" text-anchor="middle" textLength="7.7" lengthAdjust="spacingAndGlyphs">2</text>
<line x1="121.2" y1="552" x2="121.2" y2="556" stroke="#b0b0b0" stroke-width="1.2" />
<text x="121.2" y="572" font-size="13" fill="#d0d0d0" text-anchor="middle" textLength="7.7" lengthAdjust="spacingAndGlyphs">4</text>
<line x1="161.0" y1="552" x2="161.0" y2="556" stroke="#b0b0b0" stroke-width="1.2" />
<text x="161.0" y="572" font-size="13" fill="#d0d0d0" text-anchor="middle" textLength="7.7" lengthAdjust="spacingAndGlyphs">6</text>
<line x1="200.9" y1="552" x2="200.9" y2="556" stroke="#b0b0b0" stroke-width="1.2" />
<text x="200.9" y="572" font-size="13" fill="#d0d0d0" text-anchor="middle" textLength="7.7" lengthAdjust="spacingAndGlyphs">8</text>
<line x1="240.7" y1="552" x2="240.7" y2="556" stroke="#b0b0b0" stroke-width="1.2" />
<text x="240.7" y="572" font-size="13" fill="#d0d0d0" text-anchor="middle" textLength="15.5" lengthAdjust="spacingAndGlyphs">10</text>
<line x1="280.5" y1="552" x2="280.5" y2="556" stroke="#b0b0b0" stroke-width="1.2" />
<text x="280.5" y="572" font-size="13" fill="#d0d0d0" text-anchor="middle" textLength="15.5" lengthAdjust="spacingAndGlyphs">12</text>
<line x1="320.3" y1="552" x2="320.3" y2="556" stroke="#b0b0b0" stroke-width="1.2" />
<text x="320.3" y="572" font-size="13" fill="#d0d0d0" text-anchor="middle" textLength="15.5" lengthAdjust="spacingAndGlyphs">14</text>
<path d="M41.6 188.6H340.7V552H41.6z" fill="none" stroke="#b0b0b0" stroke-width="1.2"/>
<line x1="36" y1="188.6" x2="42" y2="188.6" stroke="#d0d0d0" stroke-width="1.2" />
<line x1="36" y1="249.2" x2="42" y2="249.2" stroke="#d0d0d0" stroke-width="1.2" />
<line x1="36" y1="309.7" x2="42" y2="309.7" stroke="#d0d0d0" stroke-width="1.2" />
<line x1="36" y1="370.3" x2="42" y2="370.3" stroke="#d0d0d0" stroke-width="1.2" />
<line x1="36" y1="430.9" x2="42" y2="430.9" stroke="#d0d0d0" stroke-width="1.2" />
<line x1="36" y1="491.4" x2="42" y2="491.4" stroke="#d0d0d0" stroke-width="1.2" />
<line x1="36" y1="552.0" x2="42" y2="552.0" stroke="#d0d0d0" stroke-width="1.2" />
<text x="40.8" y="224.4" font-size="13.5" fill="#d0d0d0" text-anchor="end" textLength="36.9" lengthAdjust="spacingAndGlyphs">100%</text>
<text x="40.8" y="284.9" font-size="13.5" fill="#d0d0d0" text-anchor="end" textLength="28.9" lengthAdjust="spacingAndGlyphs">80%</text>
<text x="40.8" y="345.5" font-size="13.5" fill="#d0d0d0" text-anchor="end" textLength="28.9" lengthAdjust="spacingAndGlyphs">60%</text>
<text x="40.8" y="406.1" font-size="13.5" fill="#d0d0d0" text-anchor="end" textLength="28.9" lengthAdjust="spacingAndGlyphs">40%</text>
<text x="40.8" y="466.6" font-size="13.5" fill="#d0d0d0" text-anchor="end" textLength="28.9" lengthAdjust="spacingAndGlyphs">20%</text>
<text x="40.8" y="527.2" font-size="13.5" fill="#d0d0d0" text-anchor="end" textLength="24.1" lengthAdjust="spacingAndGlyphs">100</text>
<rect x="42.6" y="194.7" width="56.2" height="5.5" fill="url(#hb1)" stroke="#000" stroke-width="0.9"/>
<rect x="42.6" y="201.9" width="76.9" height="5.5" fill="url(#hb2)" stroke="#000" stroke-width="0.9"/>
<rect x="42.6" y="209.2" width="132.3" height="5.5" fill="url(#hb3)" stroke="#000" stroke-width="0.9"/>
<rect x="42.6" y="216.4" width="57.3" height="5.5" fill="url(#hb4)" stroke="#000" stroke-width="0.9"/>
<rect x="42.6" y="223.7" width="78.6" height="5.5" fill="url(#hb5)" stroke="#000" stroke-width="0.9"/>
<rect x="42.6" y="230.9" width="60.3" height="5.5" fill="url(#hb6)" stroke="#000" stroke-width="0.9"/>
<rect x="42.6" y="255.3" width="47.4" height="5.5" fill="url(#hb7)" stroke="#000" stroke-width="0.9"/>
<rect x="42.6" y="262.5" width="60.3" height="5.5" fill="url(#hb8)" stroke="#000" stroke-width="0.9"/>
<rect x="42.6" y="269.8" width="117.4" height="5.5" fill="url(#hb9)" stroke="#000" stroke-width="0.9"/>
<rect x="42.6" y="277.0" width="55.1" height="5.5" fill="url(#hb10)" stroke="#000" stroke-width="0.9"/>
<rect x="42.6" y="284.3" width="56.2" height="5.5" fill="url(#hb11)" stroke="#000" stroke-width="0.9"/>
<rect x="42.6" y="291.5" width="57.3" height="5.5" fill="url(#hb12)" stroke="#000" stroke-width="0.9"/>
<rect x="42.6" y="315.8" width="42.4" height="5.5" fill="url(#hb13)" stroke="#000" stroke-width="0.9"/>
<rect x="42.6" y="323.1" width="44.6" height="5.5" fill="url(#hb14)" stroke="#000" stroke-width="0.9"/>
<rect x="42.6" y="330.3" width="79.4" height="5.5" fill="url(#hb15)" stroke="#000" stroke-width="0.9"/>
<rect x="42.6" y="337.6" width="43.5" height="5.5" fill="url(#hb16)" stroke="#000" stroke-width="0.9"/>
<rect x="42.6" y="344.8" width="51.5" height="5.5" fill="url(#hb17)" stroke="#000" stroke-width="0.9"/>
<rect x="42.6" y="352.1" width="48.5" height="5.5" fill="url(#hb18)" stroke="#000" stroke-width="0.9"/>
<rect x="42.6" y="376.4" width="47.4" height="5.5" fill="url(#hb19)" stroke="#000" stroke-width="0.9"/>
<rect x="42.6" y="383.6" width="34.4" height="5.5" fill="url(#hb20)" stroke="#000" stroke-width="0.9"/>
<rect x="42.6" y="390.9" width="56.5" height="5.5" fill="url(#hb21)" stroke="#000" stroke-width="0.9"/>
<rect x="42.6" y="398.1" width="39.4" height="5.5" fill="url(#hb22)" stroke="#000" stroke-width="0.9"/>
<rect x="42.6" y="405.4" width="51.5" height="5.5" fill="url(#hb23)" stroke="#000" stroke-width="0.9"/>
<rect x="42.6" y="412.6" width="45.5" height="5.5" fill="url(#hb24)" stroke="#000" stroke-width="0.9"/>
<rect x="42.6" y="437.0" width="52.6" height="5.5" fill="url(#hb25)" stroke="#000" stroke-width="0.9"/>
<rect x="42.6" y="444.2" width="19.2" height="5.5" fill="url(#hb26)" stroke="#000" stroke-width="0.9"/>
<rect x="42.6" y="451.5" width="35.5" height="5.5" fill="url(#hb27)" stroke="#000" stroke-width="0.9"/>
<rect x="42.6" y="458.7" width="42.4" height="5.5" fill="url(#hb28)" stroke="#000" stroke-width="0.9"/>
<rect x="42.6" y="466.0" width="36.3" height="5.5" fill="url(#hb29)" stroke="#000" stroke-width="0.9"/>
<rect x="42.6" y="473.2" width="48.5" height="5.5" fill="url(#hb30)" stroke="#000" stroke-width="0.9"/>
<rect x="42.6" y="541.1" width="43.5" height="5.5" fill="url(#hb31)" stroke="#000" stroke-width="0.9"/>
<rect x="391.2" y="129.9" width="138.7" height="278.0" fill="#222222" />
<line x1="391.2" y1="176.2" x2="529.9" y2="176.2" stroke="#8c8c8c" stroke-width="1.2" />
<line x1="391.2" y1="222.6" x2="529.9" y2="222.6" stroke="#8c8c8c" stroke-width="1.2" />
<line x1="391.2" y1="268.9" x2="529.9" y2="268.9" stroke="#8c8c8c" stroke-width="1.2" />
<line x1="391.2" y1="315.2" x2="529.9" y2="315.2" stroke="#8c8c8c" stroke-width="1.2" />
<line x1="391.2" y1="361.6" x2="529.9" y2="361.6" stroke="#8c8c8c" stroke-width="1.2" />
<path d="M391.2 129.9H529.9V407.9H391.2z" fill="none" stroke="#b0b0b0" stroke-width="1.2"/>
<line x1="386.2" y1="129.9" x2="391.2" y2="129.9" stroke="#d0d0d0" stroke-width="1.2" />
<text x="385.7" y="135.7" font-size="13.5" fill="#d0d0d0" text-anchor="end" textLength="16.1" lengthAdjust="spacingAndGlyphs">15</text>
<line x1="386.2" y1="176.2" x2="391.2" y2="176.2" stroke="#d0d0d0" stroke-width="1.2" />
<text x="385.7" y="182.0" font-size="13.5" fill="#d0d0d0" text-anchor="end" textLength="16.1" lengthAdjust="spacingAndGlyphs">10</text>
<line x1="386.2" y1="222.6" x2="391.2" y2="222.6" stroke="#d0d0d0" stroke-width="1.2" />
<text x="385.7" y="228.4" font-size="13.5" fill="#d0d0d0" text-anchor="end" textLength="8.0" lengthAdjust="spacingAndGlyphs">5</text>
<line x1="386.2" y1="268.9" x2="391.2" y2="268.9" stroke="#d0d0d0" stroke-width="1.2" />
<text x="385.7" y="274.7" font-size="13.5" fill="#d0d0d0" text-anchor="end" textLength="8.0" lengthAdjust="spacingAndGlyphs">0</text>
<line x1="386.2" y1="315.2" x2="391.2" y2="315.2" stroke="#d0d0d0" stroke-width="1.2" />
<text x="385.7" y="321.0" font-size="13.5" fill="#d0d0d0" text-anchor="end" textLength="12.8" lengthAdjust="spacingAndGlyphs">-5</text>
<line x1="386.2" y1="361.6" x2="391.2" y2="361.6" stroke="#d0d0d0" stroke-width="1.2" />
<text x="385.7" y="367.4" font-size="13.5" fill="#d0d0d0" text-anchor="end" textLength="20.9" lengthAdjust="spacingAndGlyphs">-10</text>
<line x1="386.2" y1="407.9" x2="391.2" y2="407.9" stroke="#d0d0d0" stroke-width="1.2" />
<text x="385.7" y="413.7" font-size="13.5" fill="#d0d0d0" text-anchor="end" textLength="20.9" lengthAdjust="spacingAndGlyphs">-15</text>
<line x1="391.2" y1="407.9" x2="391.2" y2="412.9" stroke="#d0d0d0" stroke-width="1.2" />
<line x1="529.9" y1="407.9" x2="529.9" y2="412.9" stroke="#d0d0d0" stroke-width="1.2" />
<text x="447.84999999999997" y="123.8" font-size="13" fill="#d0d0d0" text-anchor="middle" textLength="41.3" lengthAdjust="spacingAndGlyphs">DeltaL</text>
<text x="460.54999999999995" y="422" font-size="13" fill="#d0d0d0" text-anchor="middle" textLength="35.6" lengthAdjust="spacingAndGlyphs">100%</text>
<rect x="405.2" y="266.8" width="110.09999999999997" height="2.3000000000000114" fill="#c4c400" stroke="#000" stroke-width="0.6"/>
<rect x="580.3" y="129.9" width="138.80000000000007" height="278.0" fill="#222222" />
<line x1="580.3" y1="176.2" x2="719.1" y2="176.2" stroke="#8c8c8c" stroke-width="1.2" />
<line x1="580.3" y1="222.6" x2="719.1" y2="222.6" stroke="#8c8c8c" stroke-width="1.2" />
<line x1="580.3" y1="268.9" x2="719.1" y2="268.9" stroke="#8c8c8c" stroke-width="1.2" />
<line x1="580.3" y1="315.2" x2="719.1" y2="315.2" stroke="#8c8c8c" stroke-width="1.2" />
<line x1="580.3" y1="361.6" x2="719.1" y2="361.6" stroke="#8c8c8c" stroke-width="1.2" />
<path d="M580.3 129.9H719.1V407.9H580.3z" fill="none" stroke="#b0b0b0" stroke-width="1.2"/>
<line x1="575.3" y1="129.9" x2="580.3" y2="129.9" stroke="#d0d0d0" stroke-width="1.2" />
<text x="574.8" y="135.7" font-size="13.5" fill="#d0d0d0" text-anchor="end" textLength="16.1" lengthAdjust="spacingAndGlyphs">15</text>
<line x1="575.3" y1="176.2" x2="580.3" y2="176.2" stroke="#d0d0d0" stroke-width="1.2" />
<text x="574.8" y="182.0" font-size="13.5" fill="#d0d0d0" text-anchor="end" textLength="16.1" lengthAdjust="spacingAndGlyphs">10</text>
<line x1="575.3" y1="222.6" x2="580.3" y2="222.6" stroke="#d0d0d0" stroke-width="1.2" />
<text x="574.8" y="228.4" font-size="13.5" fill="#d0d0d0" text-anchor="end" textLength="8.0" lengthAdjust="spacingAndGlyphs">5</text>
<line x1="575.3" y1="268.9" x2="580.3" y2="268.9" stroke="#d0d0d0" stroke-width="1.2" />
<text x="574.8" y="274.7" font-size="13.5" fill="#d0d0d0" text-anchor="end" textLength="8.0" lengthAdjust="spacingAndGlyphs">0</text>
<line x1="575.3" y1="315.2" x2="580.3" y2="315.2" stroke="#d0d0d0" stroke-width="1.2" />
<text x="574.8" y="321.0" font-size="13.5" fill="#d0d0d0" text-anchor="end" textLength="12.8" lengthAdjust="spacingAndGlyphs">-5</text>
<line x1="575.3" y1="361.6" x2="580.3" y2="361.6" stroke="#d0d0d0" stroke-width="1.2" />
<text x="574.8" y="367.4" font-size="13.5" fill="#d0d0d0" text-anchor="end" textLength="20.9" lengthAdjust="spacingAndGlyphs">-10</text>
<line x1="575.3" y1="407.9" x2="580.3" y2="407.9" stroke="#d0d0d0" stroke-width="1.2" />
<text x="574.8" y="413.7" font-size="13.5" fill="#d0d0d0" text-anchor="end" textLength="20.9" lengthAdjust="spacingAndGlyphs">-15</text>
<line x1="580.3" y1="407.9" x2="580.3" y2="412.9" stroke="#d0d0d0" stroke-width="1.2" />
<line x1="719.1" y1="407.9" x2="719.1" y2="412.9" stroke="#d0d0d0" stroke-width="1.2" />
<text x="637.0" y="123.8" font-size="13" fill="#d0d0d0" text-anchor="middle" textLength="43.7" lengthAdjust="spacingAndGlyphs">DeltaC</text>
<text x="649.7" y="422" font-size="13" fill="#d0d0d0" text-anchor="middle" textLength="35.6" lengthAdjust="spacingAndGlyphs">100%</text>
<rect x="595" y="153.2" width="109.60000000000002" height="115.90000000000003" fill="url(#ybar)" stroke="#000" stroke-width="1.2"/>
<rect x="769.7" y="129.9" width="138.79999999999995" height="278.0" fill="#222222" />
<line x1="769.7" y1="176.2" x2="908.5" y2="176.2" stroke="#8c8c8c" stroke-width="1.2" />
<line x1="769.7" y1="222.6" x2="908.5" y2="222.6" stroke="#8c8c8c" stroke-width="1.2" />
<line x1="769.7" y1="268.9" x2="908.5" y2="268.9" stroke="#8c8c8c" stroke-width="1.2" />
<line x1="769.7" y1="315.2" x2="908.5" y2="315.2" stroke="#8c8c8c" stroke-width="1.2" />
<line x1="769.7" y1="361.6" x2="908.5" y2="361.6" stroke="#8c8c8c" stroke-width="1.2" />
<path d="M769.7 129.9H908.5V407.9H769.7z" fill="none" stroke="#b0b0b0" stroke-width="1.2"/>
<line x1="764.7" y1="129.9" x2="769.7" y2="129.9" stroke="#d0d0d0" stroke-width="1.2" />
<text x="764.2" y="135.7" font-size="13.5" fill="#d0d0d0" text-anchor="end" textLength="16.1" lengthAdjust="spacingAndGlyphs">15</text>
<line x1="764.7" y1="176.2" x2="769.7" y2="176.2" stroke="#d0d0d0" stroke-width="1.2" />
<text x="764.2" y="182.0" font-size="13.5" fill="#d0d0d0" text-anchor="end" textLength="16.1" lengthAdjust="spacingAndGlyphs">10</text>
<line x1="764.7" y1="222.6" x2="769.7" y2="222.6" stroke="#d0d0d0" stroke-width="1.2" />
<text x="764.2" y="228.4" font-size="13.5" fill="#d0d0d0" text-anchor="end" textLength="8.0" lengthAdjust="spacingAndGlyphs">5</text>
<line x1="764.7" y1="268.9" x2="769.7" y2="268.9" stroke="#d0d0d0" stroke-width="1.2" />
<text x="764.2" y="274.7" font-size="13.5" fill="#d0d0d0" text-anchor="end" textLength="8.0" lengthAdjust="spacingAndGlyphs">0</text>
<line x1="764.7" y1="315.2" x2="769.7" y2="315.2" stroke="#d0d0d0" stroke-width="1.2" />
<text x="764.2" y="321.0" font-size="13.5" fill="#d0d0d0" text-anchor="end" textLength="12.8" lengthAdjust="spacingAndGlyphs">-5</text>
<line x1="764.7" y1="361.6" x2="769.7" y2="361.6" stroke="#d0d0d0" stroke-width="1.2" />
<text x="764.2" y="367.4" font-size="13.5" fill="#d0d0d0" text-anchor="end" textLength="20.9" lengthAdjust="spacingAndGlyphs">-10</text>
<line x1="764.7" y1="407.9" x2="769.7" y2="407.9" stroke="#d0d0d0" stroke-width="1.2" />
<text x="764.2" y="413.7" font-size="13.5" fill="#d0d0d0" text-anchor="end" textLength="20.9" lengthAdjust="spacingAndGlyphs">-15</text>
<line x1="769.7" y1="407.9" x2="769.7" y2="412.9" stroke="#d0d0d0" stroke-width="1.2" />
<line x1="908.5" y1="407.9" x2="908.5" y2="412.9" stroke="#d0d0d0" stroke-width="1.2" />
<text x="826.4" y="123.8" font-size="13" fill="#d0d0d0" text-anchor="middle" textLength="43.7" lengthAdjust="spacingAndGlyphs">DeltaH</text>
<text x="839.1" y="422" font-size="13" fill="#d0d0d0" text-anchor="middle" textLength="35.6" lengthAdjust="spacingAndGlyphs">100%</text>
<rect x="783.6" y="239.2" width="110.19999999999993" height="29.900000000000034" fill="url(#ybar)" stroke="#000" stroke-width="1.2"/>
<rect x="360" y="436.6" width="567" height="143.4" fill="#000" />
<rect x="380.3" y="443.4" width="94.4" height="116.4" fill="#c0c0a2" />
<rect x="380.3" y="443.4" width="94.4" height="57.6" fill="#bec4a8" shape-rendering="crispEdges"/>
<rect x="381.3" y="444.4" width="92.4" height="114.4" fill="none" stroke="#000" stroke-opacity="0.18" stroke-width="1"/>
<rect x="380.3" y="443.4" width="94.4" height="116.4" fill="none" stroke="#f6f6f6" stroke-width="1.1"/>
<text x="427.5" y="573" font-size="11.5" fill="#fff" text-anchor="middle">20%</text>
<rect x="491.0" y="443.4" width="94.4" height="116.4" fill="#c0c088" />
<rect x="491.0" y="443.4" width="94.4" height="57.6" fill="#bcc688" shape-rendering="crispEdges"/>
<rect x="492.0" y="444.4" width="92.4" height="114.4" fill="none" stroke="#000" stroke-opacity="0.18" stroke-width="1"/>
<rect x="491.0" y="443.4" width="94.4" height="116.4" fill="none" stroke="#f6f6f6" stroke-width="1.1"/>
<text x="538.2" y="573" font-size="11.5" fill="#fff" text-anchor="middle">40%</text>
<rect x="601.7" y="443.4" width="94.4" height="116.4" fill="#bfbf68" />
<rect x="601.7" y="443.4" width="94.4" height="57.6" fill="#bac468" shape-rendering="crispEdges"/>
<rect x="602.7" y="444.4" width="92.4" height="114.4" fill="none" stroke="#000" stroke-opacity="0.18" stroke-width="1"/>
<rect x="601.7" y="443.4" width="94.4" height="116.4" fill="none" stroke="#f6f6f6" stroke-width="1.1"/>
<text x="648.9" y="573" font-size="11.5" fill="#fff" text-anchor="middle">60%</text>
<rect x="712.5" y="443.4" width="94.4" height="116.4" fill="#bfbf48" />
<rect x="712.5" y="443.4" width="94.4" height="57.6" fill="#bac444" shape-rendering="crispEdges"/>
<rect x="713.5" y="444.4" width="92.4" height="114.4" fill="none" stroke="#000" stroke-opacity="0.18" stroke-width="1"/>
<rect x="712.5" y="443.4" width="94.4" height="116.4" fill="none" stroke="#f6f6f6" stroke-width="1.1"/>
<text x="759.7" y="573" font-size="11.5" fill="#fff" text-anchor="middle">80%</text>
<rect x="823.2" y="443.4" width="94.4" height="116.4" fill="#bfbf30" />
<rect x="823.2" y="443.4" width="94.4" height="57.6" fill="#bcc400" shape-rendering="crispEdges"/>
<rect x="824.2" y="444.4" width="92.4" height="114.4" fill="none" stroke="#000" stroke-opacity="0.18" stroke-width="1"/>
<rect x="823.2" y="443.4" width="94.4" height="116.4" fill="none" stroke="#f6f6f6" stroke-width="1.1"/>
<text x="870.4" y="573" font-size="11.5" fill="#fff" text-anchor="middle">100%</text>
<text transform="translate(372.5 484.5) rotate(-90)" font-size="11.5" fill="#fff" textLength="31">Actual</text>
<text transform="translate(372.5 549.5) rotate(-90)" font-size="11.5" fill="#fff" textLength="31">Target</text>
<text x="14.2" y="643.7" font-size="25.4" fill="#f0f0f0" textLength="210" lengthAdjust="spacingAndGlyphs" stroke="#f0f0f0" stroke-width="0.35">Current Reading</text>
<text x="14.2" y="682.0" font-size="22.2" fill="#f0f0f0" textLength="85.4" lengthAdjust="spacingAndGlyphs" stroke="#f0f0f0" stroke-width="0.3">x: 0.419</text>
<text x="14.2" y="717.6" font-size="22.2" fill="#f0f0f0" textLength="99.5" lengthAdjust="spacingAndGlyphs" stroke="#f0f0f0" stroke-width="0.3">y: 0.5306</text>
<text x="14.2" y="753.2" font-size="22.2" fill="#f0f0f0" textLength="93" lengthAdjust="spacingAndGlyphs" stroke="#f0f0f0" stroke-width="0.3">fL: 43.35</text>
<text x="14.2" y="788.8" font-size="22.2" fill="#f0f0f0" textLength="153" lengthAdjust="spacingAndGlyphs" stroke="#f0f0f0" stroke-width="0.3">cd/m²: 148.54</text>
<rect x="339.7" y="625" width="242.59999999999997" height="160" fill="#222222" />
<text x="448" y="622" font-size="13" fill="#d0d0d0" text-anchor="middle" textLength="80" lengthAdjust="spacingAndGlyphs">RGB Balance</text>
<line x1="339.7" y1="640.4" x2="582.3" y2="640.4" stroke="#8c8c8c" stroke-width="1.2" />
<line x1="334.7" y1="640.4" x2="339.7" y2="640.4" stroke="#d0d0d0" stroke-width="1.2" />
<text x="334.2" y="645.1999999999999" font-size="13.5" fill="#d0d0d0" text-anchor="end" textLength="16.1" lengthAdjust="spacingAndGlyphs">50</text>
<line x1="339.7" y1="706.4" x2="582.3" y2="706.4" stroke="#8c8c8c" stroke-width="1.2" />
<line x1="334.7" y1="706.4" x2="339.7" y2="706.4" stroke="#d0d0d0" stroke-width="1.2" />
<text x="334.2" y="711.1999999999999" font-size="13.5" fill="#d0d0d0" text-anchor="end" textLength="8.0" lengthAdjust="spacingAndGlyphs">0</text>
<line x1="339.7" y1="772.4" x2="582.3" y2="772.4" stroke="#8c8c8c" stroke-width="1.2" />
<line x1="334.7" y1="772.4" x2="339.7" y2="772.4" stroke="#d0d0d0" stroke-width="1.2" />
<text x="334.2" y="777.1999999999999" font-size="13.5" fill="#d0d0d0" text-anchor="end" textLength="20.9" lengthAdjust="spacingAndGlyphs">-50</text>
<path d="M339.7 625H582.3V785H339.7z" fill="none" stroke="#b0b0b0" stroke-width="1.2"/>
<line x1="339.7" y1="785" x2="339.7" y2="790" stroke="#d0d0d0" stroke-width="1.2" />
<line x1="582.3" y1="785" x2="582.3" y2="790" stroke="#d0d0d0" stroke-width="1.2" />
<text x="460.6" y="799" font-size="13" fill="#d0d0d0" text-anchor="middle" textLength="35.6" lengthAdjust="spacingAndGlyphs">100%</text>
<rect x="363.8" y="706.4" width="64.2" height="10.6" fill="url(#rbar)" stroke="#000" stroke-width="1.2"/>
<rect x="429.6" y="700.6" width="63.6" height="5.8" fill="url(#gbar)" stroke="#000" stroke-width="1.2"/>
<rect x="494.6" y="706.4" width="63.8" height="77.4" fill="url(#bbar)" stroke="#000" stroke-width="1.2"/>
<rect x="603" y="606" width="691" height="26.7" fill="url(#thd)" />
<rect x="602.8" y="606" width="19.3" height="26.8" fill="#000" />
<text x="781.4" y="624.8" font-size="14" fill="#f0f0f0" textLength="38.5" lengthAdjust="spacingAndGlyphs" stroke="#f0f0f0" stroke-width="0.25">20%</text>
<text x="885.2" y="624.8" font-size="14" fill="#f0f0f0" textLength="38.5" lengthAdjust="spacingAndGlyphs" stroke="#f0f0f0" stroke-width="0.25">40%</text>
<text x="989" y="624.8" font-size="14" fill="#f0f0f0" textLength="38.5" lengthAdjust="spacingAndGlyphs" stroke="#f0f0f0" stroke-width="0.25">60%</text>
<text x="1092.9" y="624.8" font-size="14" fill="#f0f0f0" textLength="38.5" lengthAdjust="spacingAndGlyphs" stroke="#f0f0f0" stroke-width="0.25">80%</text>
<text x="1196.7" y="624.8" font-size="14" fill="#f0f0f0" textLength="49" lengthAdjust="spacingAndGlyphs" stroke="#f0f0f0" stroke-width="0.25">100%</text>
<rect x="622.1" y="632.7" width="671.9" height="25.1" fill="#404040" />
<rect x="602.8" y="632.7" width="19.3" height="25.1" fill="url(#rhd)" />
<text x="628.3" y="651.0" font-size="16" fill="#f0f0f0" textLength="75.5" lengthAdjust="spacingAndGlyphs">x: CIE31</text>
<text x="781.4" y="651.0" font-size="16" fill="#f0f0f0" textLength="64.8" lengthAdjust="spacingAndGlyphs">0.3287</text>
<text x="885.2" y="651.0" font-size="16" fill="#f0f0f0" textLength="64.8" lengthAdjust="spacingAndGlyphs">0.3517</text>
<text x="989" y="651.0" font-size="16" fill="#f0f0f0" textLength="64.8" lengthAdjust="spacingAndGlyphs">0.3728</text>
<text x="1092.9" y="651.0" font-size="16" fill="#f0f0f0" textLength="64.8" lengthAdjust="spacingAndGlyphs">0.3934</text>
<text x="1196.7" y="651.0" font-size="16" fill="#f0f0f0" textLength="64.8" lengthAdjust="spacingAndGlyphs">0.4190</text>
<rect x="622.1" y="657.7" width="671.9" height="25.1" fill="#808080" />
<rect x="602.8" y="657.7" width="19.3" height="25.1" fill="url(#rhd)" />
<text x="628.3" y="676.0" font-size="16" fill="#f0f0f0" textLength="76" lengthAdjust="spacingAndGlyphs">y: CIE31</text>
<text x="781.4" y="676.0" font-size="16" fill="#f0f0f0" textLength="64.8" lengthAdjust="spacingAndGlyphs">0.3642</text>
<text x="885.2" y="676.0" font-size="16" fill="#f0f0f0" textLength="64.8" lengthAdjust="spacingAndGlyphs">0.4057</text>
<text x="989" y="676.0" font-size="16" fill="#f0f0f0" textLength="64.8" lengthAdjust="spacingAndGlyphs">0.4448</text>
<text x="1092.9" y="676.0" font-size="16" fill="#f0f0f0" textLength="64.8" lengthAdjust="spacingAndGlyphs">0.4848</text>
<text x="1196.7" y="676.0" font-size="16" fill="#f0f0f0" textLength="64.8" lengthAdjust="spacingAndGlyphs">0.5306</text>
<rect x="622.1" y="682.7" width="671.9" height="25.1" fill="#404040" />
<rect x="602.8" y="682.7" width="19.3" height="25.1" fill="url(#rhd)" />
<text x="628.3" y="701.0" font-size="16" fill="#f0f0f0" textLength="11.5" lengthAdjust="spacingAndGlyphs">Y</text>
<text x="781.4" y="701.0" font-size="16" fill="#f0f0f0" textLength="88.5" lengthAdjust="spacingAndGlyphs">160.0669</text>
<text x="885.2" y="701.0" font-size="16" fill="#f0f0f0" textLength="88.5" lengthAdjust="spacingAndGlyphs">157.9278</text>
<text x="989" y="701.0" font-size="16" fill="#f0f0f0" textLength="88.5" lengthAdjust="spacingAndGlyphs">154.3467</text>
<text x="1092.9" y="701.0" font-size="16" fill="#f0f0f0" textLength="88.5" lengthAdjust="spacingAndGlyphs">154.0212</text>
<text x="1196.7" y="701.0" font-size="16" fill="#f0f0f0" textLength="88.5" lengthAdjust="spacingAndGlyphs">148.5428</text>
<rect x="622.1" y="707.7" width="671.9" height="25.1" fill="#808080" />
<rect x="602.8" y="707.7" width="19.3" height="25.1" fill="url(#rhd)" />
<text x="628.3" y="726.0" font-size="16" fill="#f0f0f0" textLength="137" lengthAdjust="spacingAndGlyphs">Target x:CIE31</text>
<text x="781.4" y="726.0" font-size="16" fill="#f0f0f0" textLength="64.8" lengthAdjust="spacingAndGlyphs">0.3344</text>
<text x="885.2" y="726.0" font-size="16" fill="#f0f0f0" textLength="64.8" lengthAdjust="spacingAndGlyphs">0.3564</text>
<text x="989" y="726.0" font-size="16" fill="#f0f0f0" textLength="64.8" lengthAdjust="spacingAndGlyphs">0.3773</text>
<text x="1092.9" y="726.0" font-size="16" fill="#f0f0f0" textLength="64.8" lengthAdjust="spacingAndGlyphs">0.3969</text>
<text x="1196.7" y="726.0" font-size="16" fill="#f0f0f0" textLength="64.8" lengthAdjust="spacingAndGlyphs">0.4193</text>
<rect x="622.1" y="732.7" width="671.9" height="25.1" fill="#404040" />
<rect x="602.8" y="732.7" width="19.3" height="25.1" fill="url(#rhd)" />
<text x="628.3" y="751.0" font-size="16" fill="#f0f0f0" textLength="138" lengthAdjust="spacingAndGlyphs">Target y:CIE31</text>
<text x="781.4" y="751.0" font-size="16" fill="#f0f0f0" textLength="64.8" lengthAdjust="spacingAndGlyphs">0.3648</text>
<text x="885.2" y="751.0" font-size="16" fill="#f0f0f0" textLength="64.8" lengthAdjust="spacingAndGlyphs">0.4013</text>
<text x="989" y="751.0" font-size="16" fill="#f0f0f0" textLength="64.8" lengthAdjust="spacingAndGlyphs">0.4358</text>
<text x="1092.9" y="751.0" font-size="16" fill="#f0f0f0" textLength="64.8" lengthAdjust="spacingAndGlyphs">0.4682</text>
<text x="1196.7" y="751.0" font-size="16" fill="#f0f0f0" textLength="64.8" lengthAdjust="spacingAndGlyphs">0.5053</text>
<rect x="622.1" y="757.7" width="671.9" height="25.1" fill="#808080" />
<rect x="602.8" y="757.7" width="19.3" height="25.1" fill="url(#rhd)" />
<text x="628.3" y="776.0" font-size="16" fill="#f0f0f0" textLength="79" lengthAdjust="spacingAndGlyphs">Target Y</text>
<text x="781.4" y="776.0" font-size="16" fill="#f0f0f0" textLength="88.5" lengthAdjust="spacingAndGlyphs">155.1639</text>
<text x="885.2" y="776.0" font-size="16" fill="#f0f0f0" textLength="88.5" lengthAdjust="spacingAndGlyphs">152.4404</text>
<text x="989" y="776.0" font-size="16" fill="#f0f0f0" textLength="88.5" lengthAdjust="spacingAndGlyphs">150.3477</text>
<text x="1092.9" y="776.0" font-size="16" fill="#f0f0f0" textLength="88.5" lengthAdjust="spacingAndGlyphs">148.7053</text>
<text x="1196.7" y="776.0" font-size="16" fill="#f0f0f0" textLength="88.5" lengthAdjust="spacingAndGlyphs">147.1176</text>
<rect x="933.3" y="101" width="665.7" height="491.6" fill="#1c1c1c" />
<rect x="940" y="107" width="652.8" height="479.2" fill="#303030" />
<text x="1266" y="122.3" font-size="13" fill="#d0d0d0" text-anchor="middle" textLength="73" lengthAdjust="spacingAndGlyphs">CIE 1931 xy</text>
<rect x="968.2" y="127" width="620.8" height="434.4" fill="#222222" />
<g clip-path="url(#hs)"><g shape-rendering="crispEdges"><rect x="1010" y="130" width="38" height="3" fill="url(#c1)"/><rect x="1003" y="133" width="57" height="3" fill="url(#c2)"/><rect x="998" y="136" width="71" height="3" fill="url(#c3)"/><rect x="994" y="139" width="83" height="3" fill="url(#c4)"/><rect x="992" y="142" width="93" height="3" fill="url(#c5)"/><rect x="989" y="145" width="103" height="3" fill="url(#c6)"/><rect x="987" y="148" width="112" height="3" fill="url(#c7)"/><rect x="985" y="151" width="121" height="3" fill="url(#c8)"/><rect x="983" y="154" width="129" height="3" fill="url(#c9)"/><rect x="982" y="157" width="136" height="3" fill="url(#c10)"/><rect x="980" y="160" width="144" height="3" fill="url(#c11)"/><rect x="979" y="163" width="151" height="3" fill="url(#c12)"/><rect x="978" y="166" width="158" height="3" fill="url(#c13)"/><rect x="977" y="169" width="164" height="3" fill="url(#c14)"/><rect x="976" y="172" width="170" height="3" fill="url(#c15)"/><rect x="975" y="175" width="177" height="3" fill="url(#c16)"/><rect x="974" y="178" width="183" height="3" fill="url(#c17)"/><rect x="973" y="181" width="189" height="3" fill="url(#c18)"/><rect x="973" y="184" width="194" height="3" fill="url(#c19)"/><rect x="972" y="187" width="200" height="3" fill="url(#c20)"/><rect x="972" y="190" width="205" height="3" fill="url(#c21)"/><rect x="971" y="193" width="211" height="3" fill="url(#c22)"/><rect x="971" y="196" width="215" height="3" fill="url(#c23)"/><rect x="970" y="199" width="221" height="3" fill="url(#c24)"/><rect x="970" y="202" width="226" height="3" fill="url(#c25)"/><rect x="970" y="205" width="230" height="3" fill="url(#c26)"/><rect x="969" y="208" width="236" height="3" fill="url(#c27)"/><rect x="969" y="211" width="241" height="3" fill="url(#c28)"/><rect x="969" y="214" width="245" height="3" fill="url(#c29)"/><rect x="969" y="217" width="250" height="3" fill="url(#c30)"/><rect x="969" y="220" width="254" height="3" fill="url(#c31)"/><rect x="969" y="223" width="259" height="3" fill="url(#c32)"/><rect x="968" y="226" width="264" height="3" fill="url(#c33)"/><rect x="968" y="229" width="269" height="3" fill="url(#c34)"/><rect x="968" y="232" width="273" height="3" fill="url(#c35)"/><rect x="968" y="235" width="278" height="3" fill="url(#c36)"/><rect x="968" y="238" width="282" height="3" fill="url(#c37)"/><rect x="969" y="241" width="285" height="3" fill="url(#c38)"/><rect x="969" y="244" width="290" height="3" fill="url(#c39)"/><rect x="969" y="247" width="294" height="3" fill="url(#c40)"/><rect x="969" y="250" width="299" height="3" fill="url(#c41)"/><rect x="969" y="253" width="303" height="3" fill="url(#c42)"/><rect x="969" y="256" width="307" height="3" fill="url(#c43)"/><rect x="969" y="259" width="312" height="3" fill="url(#c44)"/><rect x="970" y="262" width="315" height="3" fill="url(#c45)"/><rect x="970" y="265" width="319" height="3" fill="url(#c46)"/><rect x="970" y="268" width="324" height="3" fill="url(#c47)"/><rect x="971" y="271" width="327" height="3" fill="url(#c48)"/><rect x="971" y="274" width="331" height="3" fill="url(#c49)"/><rect x="971" y="277" width="336" height="3" fill="url(#c50)"/><rect x="971" y="280" width="340" height="3" fill="url(#c51)"/><rect x="972" y="283" width="343" height="3" fill="url(#c52)"/><rect x="972" y="286" width="348" height="3" fill="url(#c53)"/><rect x="973" y="289" width="351" height="3" fill="url(#c54)"/><rect x="973" y="292" width="355" height="3" fill="url(#c55)"/><rect x="973" y="295" width="360" height="3" fill="url(#c56)"/><rect x="974" y="298" width="363" height="3" fill="url(#c57)"/><rect x="974" y="301" width="367" height="3" fill="url(#c58)"/><rect x="975" y="304" width="371" height="3" fill="url(#c59)"/><rect x="975" y="307" width="375" height="3" fill="url(#c60)"/><rect x="976" y="310" width="378" height="3" fill="url(#c61)"/><rect x="976" y="313" width="383" height="3" fill="url(#c62)"/><rect x="977" y="316" width="386" height="3" fill="url(#c63)"/><rect x="977" y="319" width="390" height="3" fill="url(#c64)"/><rect x="978" y="322" width="394" height="3" fill="url(#c65)"/><rect x="978" y="325" width="398" height="3" fill="url(#c66)"/><rect x="979" y="328" width="401" height="3" fill="url(#c67)"/><rect x="980" y="331" width="405" height="3" fill="url(#c68)"/><rect x="980" y="334" width="409" height="3" fill="url(#c69)"/><rect x="981" y="337" width="412" height="3" fill="url(#c70)"/><rect x="981" y="340" width="417" height="3" fill="url(#c71)"/><rect x="982" y="343" width="420" height="3" fill="url(#c72)"/><rect x="983" y="346" width="423" height="3" fill="url(#c73)"/><rect x="983" y="349" width="427" height="3" fill="url(#c74)"/><rect x="984" y="352" width="431" height="3" fill="url(#c75)"/><rect x="985" y="355" width="434" height="3" fill="url(#c76)"/><rect x="985" y="358" width="438" height="3" fill="url(#c77)"/><rect x="986" y="361" width="442" height="3" fill="url(#c78)"/><rect x="987" y="364" width="445" height="3" fill="url(#c79)"/><rect x="988" y="367" width="448" height="3" fill="url(#c80)"/><rect x="988" y="370" width="453" height="3" fill="url(#c81)"/><rect x="989" y="373" width="456" height="3" fill="url(#c82)"/><rect x="990" y="376" width="459" height="3" fill="url(#c83)"/><rect x="991" y="379" width="463" height="3" fill="url(#c84)"/><rect x="992" y="382" width="466" height="3" fill="url(#c85)"/><rect x="992" y="385" width="470" height="3" fill="url(#c86)"/><rect x="993" y="388" width="474" height="3" fill="url(#c87)"/><rect x="994" y="391" width="477" height="3" fill="url(#c88)"/><rect x="995" y="394" width="480" height="3" fill="url(#c89)"/><rect x="996" y="397" width="484" height="3" fill="url(#c90)"/><rect x="997" y="400" width="487" height="3" fill="url(#c91)"/><rect x="998" y="403" width="490" height="3" fill="url(#c92)"/><rect x="999" y="406" width="494" height="3" fill="url(#c93)"/><rect x="999" y="409" width="498" height="3" fill="url(#c94)"/><rect x="1000" y="412" width="501" height="3" fill="url(#c95)"/><rect x="1001" y="415" width="504" height="3" fill="url(#c96)"/><rect x="1002" y="418" width="508" height="3" fill="url(#c97)"/><rect x="1003" y="421" width="511" height="3" fill="url(#c98)"/><rect x="1004" y="424" width="509" height="3" fill="url(#c99)"/><rect x="1005" y="427" width="498" height="3" fill="url(#c100)"/><rect x="1006" y="430" width="488" height="3" fill="url(#c101)"/><rect x="1007" y="433" width="478" height="3" fill="url(#c102)"/><rect x="1008" y="436" width="468" height="3" fill="url(#c103)"/><rect x="1010" y="439" width="456" height="3" fill="url(#c104)"/><rect x="1011" y="442" width="446" height="3" fill="url(#c105)"/><rect x="1012" y="445" width="436" height="3" fill="url(#c106)"/><rect x="1013" y="448" width="425" height="3" fill="url(#c107)"/><rect x="1014" y="451" width="415" height="3" fill="url(#c108)"/><rect x="1015" y="454" width="405" height="3" fill="url(#c109)"/><rect x="1016" y="457" width="395" height="3" fill="url(#c110)"/><rect x="1018" y="460" width="383" height="3" fill="url(#c111)"/><rect x="1019" y="463" width="373" height="3" fill="url(#c112)"/><rect x="1020" y="466" width="363" height="3" fill="url(#c113)"/><rect x="1022" y="469" width="352" height="3" fill="url(#c114)"/><rect x="1023" y="472" width="341" height="3" fill="url(#c115)"/><rect x="1025" y="475" width="330" height="3" fill="url(#c116)"/><rect x="1026" y="478" width="320" height="3" fill="url(#c117)"/><rect x="1028" y="481" width="309" height="3" fill="url(#c118)"/><rect x="1029" y="484" width="298" height="3" fill="url(#c119)"/><rect x="1031" y="487" width="287" height="3" fill="url(#c120)"/><rect x="1032" y="490" width="277" height="3" fill="url(#c121)"/><rect x="1034" y="493" width="266" height="3" fill="url(#c122)"/><rect x="1035" y="496" width="255" height="3" fill="url(#c123)"/><rect x="1037" y="499" width="244" height="3" fill="url(#c124)"/><rect x="1039" y="502" width="233" height="3" fill="url(#c125)"/><rect x="1040" y="505" width="222" height="3" fill="url(#c126)"/><rect x="1042" y="508" width="211" height="3" fill="url(#c127)"/><rect x="1044" y="511" width="200" height="3" fill="url(#c128)"/><rect x="1046" y="514" width="189" height="3" fill="url(#c129)"/><rect x="1048" y="517" width="177" height="3" fill="url(#c130)"/><rect x="1050" y="520" width="166" height="3" fill="url(#c131)"/><rect x="1052" y="523" width="155" height="3" fill="url(#c132)"/><rect x="1054" y="526" width="144" height="3" fill="url(#c133)"/><rect x="1056" y="529" width="132" height="3" fill="url(#c134)"/><rect x="1059" y="532" width="120" height="3" fill="url(#c135)"/><rect x="1061" y="535" width="109" height="3" fill="url(#c136)"/><rect x="1064" y="538" width="97" height="3" fill="url(#c137)"/><rect x="1067" y="541" width="84" height="3" fill="url(#c138)"/><rect x="1071" y="544" width="71" height="3" fill="url(#c139)"/><rect x="1075" y="547" width="58" height="3" fill="url(#c140)"/><rect x="1079" y="550" width="45" height="3" fill="url(#c141)"/><rect x="1084" y="553" width="30" height="3" fill="url(#c142)"/><rect x="1089" y="556" width="16" height="3" fill="url(#c143)"/></g></g>
<g clip-path="url(#tri)"><g shape-rendering="crispEdges"><rect x="1187" y="250" width="7" height="2" fill="url(#c144)"/><rect x="1186" y="252" width="12" height="2" fill="url(#c145)"/><rect x="1185" y="254" width="16" height="2" fill="url(#c146)"/><rect x="1185" y="256" width="20" height="2" fill="url(#c147)"/><rect x="1184" y="258" width="24" height="2" fill="url(#c148)"/><rect x="1183" y="260" width="29" height="2" fill="url(#c149)"/><rect x="1182" y="262" width="34" height="2" fill="url(#c150)"/><rect x="1181" y="264" width="38" height="2" fill="url(#c151)"/><rect x="1181" y="266" width="42" height="2" fill="url(#c152)"/><rect x="1180" y="268" width="46" height="2" fill="url(#c153)"/><rect x="1179" y="270" width="51" height="2" fill="url(#c154)"/><rect x="1178" y="272" width="56" height="2" fill="url(#c155)"/><rect x="1178" y="274" width="59" height="2" fill="url(#c156)"/><rect x="1177" y="276" width="64" height="2" fill="url(#c157)"/><rect x="1176" y="278" width="68" height="2" fill="url(#c158)"/><rect x="1175" y="280" width="73" height="2" fill="url(#c159)"/><rect x="1174" y="282" width="78" height="2" fill="url(#c160)"/><rect x="1174" y="284" width="81" height="2" fill="url(#c161)"/><rect x="1173" y="286" width="86" height="2" fill="url(#c162)"/><rect x="1172" y="288" width="91" height="2" fill="url(#c163)"/><rect x="1171" y="290" width="95" height="2" fill="url(#c164)"/><rect x="1170" y="292" width="100" height="2" fill="url(#c165)"/><rect x="1170" y="294" width="103" height="2" fill="url(#c166)"/><rect x="1169" y="296" width="108" height="2" fill="url(#c167)"/><rect x="1168" y="298" width="113" height="2" fill="url(#c168)"/><rect x="1167" y="300" width="117" height="2" fill="url(#c169)"/><rect x="1166" y="302" width="122" height="2" fill="url(#c170)"/><rect x="1166" y="304" width="125" height="2" fill="url(#c171)"/><rect x="1165" y="306" width="130" height="2" fill="url(#c172)"/><rect x="1164" y="308" width="135" height="2" fill="url(#c173)"/><rect x="1163" y="310" width="139" height="2" fill="url(#c174)"/><rect x="1162" y="312" width="144" height="2" fill="url(#c175)"/><rect x="1162" y="314" width="147" height="2" fill="url(#c176)"/><rect x="1161" y="316" width="152" height="2" fill="url(#c177)"/><rect x="1160" y="318" width="157" height="2" fill="url(#c178)"/><rect x="1159" y="320" width="161" height="2" fill="url(#c179)"/><rect x="1158" y="322" width="166" height="2" fill="url(#c180)"/><rect x="1158" y="324" width="170" height="2" fill="url(#c181)"/><rect x="1157" y="326" width="174" height="2" fill="url(#c182)"/><rect x="1156" y="328" width="179" height="2" fill="url(#c183)"/><rect x="1155" y="330" width="183" height="2" fill="url(#c184)"/><rect x="1154" y="332" width="188" height="2" fill="url(#c185)"/><rect x="1154" y="334" width="192" height="2" fill="url(#c186)"/><rect x="1153" y="336" width="196" height="2" fill="url(#c187)"/><rect x="1152" y="338" width="201" height="2" fill="url(#c188)"/><rect x="1151" y="340" width="205" height="2" fill="url(#c189)"/><rect x="1150" y="342" width="210" height="2" fill="url(#c190)"/><rect x="1150" y="344" width="214" height="2" fill="url(#c191)"/><rect x="1149" y="346" width="218" height="2" fill="url(#c192)"/><rect x="1148" y="348" width="223" height="2" fill="url(#c193)"/><rect x="1147" y="350" width="227" height="2" fill="url(#c194)"/><rect x="1146" y="352" width="232" height="2" fill="url(#c195)"/><rect x="1146" y="354" width="236" height="2" fill="url(#c196)"/><rect x="1145" y="356" width="240" height="2" fill="url(#c197)"/><rect x="1144" y="358" width="245" height="2" fill="url(#c198)"/><rect x="1143" y="360" width="250" height="2" fill="url(#c199)"/><rect x="1142" y="362" width="254" height="2" fill="url(#c200)"/><rect x="1142" y="364" width="258" height="2" fill="url(#c201)"/><rect x="1141" y="366" width="262" height="2" fill="url(#c202)"/><rect x="1140" y="368" width="267" height="2" fill="url(#c203)"/><rect x="1139" y="370" width="272" height="2" fill="url(#c204)"/><rect x="1138" y="372" width="276" height="2" fill="url(#c205)"/><rect x="1138" y="374" width="280" height="2" fill="url(#c206)"/><rect x="1137" y="376" width="284" height="2" fill="url(#c207)"/><rect x="1136" y="378" width="289" height="2" fill="url(#c208)"/><rect x="1135" y="380" width="294" height="2" fill="url(#c209)"/><rect x="1134" y="382" width="298" height="2" fill="url(#c210)"/><rect x="1134" y="384" width="302" height="2" fill="url(#c211)"/><rect x="1133" y="386" width="306" height="2" fill="url(#c212)"/><rect x="1132" y="388" width="311" height="2" fill="url(#c213)"/><rect x="1131" y="390" width="313" height="2" fill="url(#c214)"/><rect x="1131" y="392" width="308" height="2" fill="url(#c215)"/><rect x="1130" y="394" width="304" height="2" fill="url(#c216)"/><rect x="1129" y="396" width="300" height="2" fill="url(#c217)"/><rect x="1128" y="398" width="296" height="2" fill="url(#c218)"/><rect x="1127" y="400" width="291" height="2" fill="url(#c219)"/><rect x="1127" y="402" width="286" height="2" fill="url(#c220)"/><rect x="1126" y="404" width="282" height="2" fill="url(#c221)"/><rect x="1125" y="406" width="278" height="2" fill="url(#c222)"/><rect x="1124" y="408" width="274" height="2" fill="url(#c223)"/><rect x="1123" y="410" width="269" height="2" fill="url(#c224)"/><rect x="1123" y="412" width="264" height="2" fill="url(#c225)"/><rect x="1122" y="414" width="260" height="2" fill="url(#c226)"/><rect x="1121" y="416" width="256" height="2" fill="url(#c227)"/><rect x="1120" y="418" width="252" height="2" fill="url(#c228)"/><rect x="1119" y="420" width="247" height="2" fill="url(#c229)"/><rect x="1119" y="422" width="242" height="2" fill="url(#c230)"/><rect x="1118" y="424" width="238" height="2" fill="url(#c231)"/><rect x="1117" y="426" width="234" height="2" fill="url(#c232)"/><rect x="1116" y="428" width="230" height="2" fill="url(#c233)"/><rect x="1115" y="430" width="225" height="2" fill="url(#c234)"/><rect x="1115" y="432" width="220" height="2" fill="url(#c235)"/><rect x="1114" y="434" width="216" height="2" fill="url(#c236)"/><rect x="1113" y="436" width="212" height="2" fill="url(#c237)"/><rect x="1112" y="438" width="208" height="2" fill="url(#c238)"/><rect x="1111" y="440" width="203" height="2" fill="url(#c239)"/><rect x="1111" y="442" width="198" height="2" fill="url(#c240)"/><rect x="1110" y="444" width="194" height="2" fill="url(#c241)"/><rect x="1109" y="446" width="190" height="2" fill="url(#c242)"/><rect x="1108" y="448" width="186" height="2" fill="url(#c243)"/><rect x="1107" y="450" width="181" height="2" fill="url(#c244)"/><rect x="1107" y="452" width="176" height="2" fill="url(#c245)"/><rect x="1106" y="454" width="172" height="2" fill="url(#c246)"/><rect x="1105" y="456" width="168" height="2" fill="url(#c247)"/><rect x="1104" y="458" width="164" height="2" fill="url(#c248)"/><rect x="1103" y="460" width="159" height="2" fill="url(#c249)"/><rect x="1103" y="462" width="154" height="2" fill="url(#c250)"/><rect x="1102" y="464" width="150" height="2" fill="url(#c251)"/><rect x="1101" y="466" width="146" height="2" fill="url(#c252)"/><rect x="1100" y="468" width="142" height="2" fill="url(#c253)"/><rect x="1099" y="470" width="137" height="2" fill="url(#c254)"/><rect x="1099" y="472" width="132" height="2" fill="url(#c255)"/><rect x="1098" y="474" width="128" height="2" fill="url(#c256)"/><rect x="1097" y="476" width="124" height="2" fill="url(#c257)"/><rect x="1096" y="478" width="119" height="2" fill="url(#c258)"/><rect x="1095" y="480" width="115" height="2" fill="url(#c259)"/><rect x="1095" y="482" width="110" height="2" fill="url(#c260)"/><rect x="1094" y="484" width="106" height="2" fill="url(#c261)"/><rect x="1093" y="486" width="102" height="2" fill="url(#c262)"/><rect x="1092" y="488" width="97" height="2" fill="url(#c263)"/><rect x="1091" y="490" width="93" height="2" fill="url(#c264)"/><rect x="1091" y="492" width="88" height="2" fill="url(#c265)"/><rect x="1090" y="494" width="84" height="2" fill="url(#c266)"/><rect x="1089" y="496" width="80" height="2" fill="url(#c267)"/><rect x="1088" y="498" width="75" height="2" fill="url(#c268)"/><rect x="1087" y="500" width="71" height="2" fill="url(#c269)"/><rect x="1087" y="502" width="66" height="2" fill="url(#c270)"/><rect x="1086" y="504" width="62" height="2" fill="url(#c271)"/><rect x="1085" y="506" width="58" height="2" fill="url(#c272)"/><rect x="1084" y="508" width="53" height="2" fill="url(#c273)"/><rect x="1084" y="510" width="48" height="2" fill="url(#c274)"/><rect x="1083" y="512" width="44" height="2" fill="url(#c275)"/><rect x="1082" y="514" width="40" height="2" fill="url(#c276)"/><rect x="1081" y="516" width="36" height="2" fill="url(#c277)"/><rect x="1080" y="518" width="31" height="2" fill="url(#c278)"/><rect x="1080" y="520" width="26" height="2" fill="url(#c279)"/><rect x="1079" y="522" width="22" height="2" fill="url(#c280)"/><rect x="1078" y="524" width="18" height="2" fill="url(#c281)"/><rect x="1077" y="526" width="14" height="2" fill="url(#c282)"/><rect x="1077" y="528" width="8" height="2" fill="url(#c283)"/></g></g>
<path d="M968.2 127H1589V561.4H968.2z" fill="none" stroke="#b0b0b0" stroke-width="1.2"/>
<line x1="968.2" y1="561.4" x2="968.2" y2="566.4" stroke="#d0d0d0" stroke-width="1.2" />
<line x1="963.2" y1="561.4" x2="968.2" y2="561.4" stroke="#d0d0d0" stroke-width="1.2" />
<text x="968.2" y="579.7" font-size="13" fill="#d0d0d0" text-anchor="middle" textLength="7.7" lengthAdjust="spacingAndGlyphs">0</text>
<text x="962" y="566.3" font-size="13" fill="#d0d0d0" text-anchor="end" textLength="7.7" lengthAdjust="spacingAndGlyphs">0</text>
<line x1="1042.1" y1="561.4" x2="1042.1" y2="566.4" stroke="#d0d0d0" stroke-width="1.2" />
<line x1="963.2" y1="509.9" x2="968.2" y2="509.9" stroke="#d0d0d0" stroke-width="1.2" />
<text x="1042.1" y="579.7" font-size="13" fill="#d0d0d0" text-anchor="middle" textLength="19.3" lengthAdjust="spacingAndGlyphs">0.1</text>
<text x="962" y="514.8" font-size="13" fill="#d0d0d0" text-anchor="end" textLength="19.3" lengthAdjust="spacingAndGlyphs">0.1</text>
<line x1="1116.0" y1="561.4" x2="1116.0" y2="566.4" stroke="#d0d0d0" stroke-width="1.2" />
<line x1="963.2" y1="458.3" x2="968.2" y2="458.3" stroke="#d0d0d0" stroke-width="1.2" />
<text x="1116.0" y="579.7" font-size="13" fill="#d0d0d0" text-anchor="middle" textLength="19.3" lengthAdjust="spacingAndGlyphs">0.2</text>
<text x="962" y="463.2" font-size="13" fill="#d0d0d0" text-anchor="end" textLength="19.3" lengthAdjust="spacingAndGlyphs">0.2</text>
<line x1="1189.9" y1="561.4" x2="1189.9" y2="566.4" stroke="#d0d0d0" stroke-width="1.2" />
<line x1="963.2" y1="406.8" x2="968.2" y2="406.8" stroke="#d0d0d0" stroke-width="1.2" />
<text x="1189.9" y="579.7" font-size="13" fill="#d0d0d0" text-anchor="middle" textLength="19.3" lengthAdjust="spacingAndGlyphs">0.3</text>
<text x="962" y="411.7" font-size="13" fill="#d0d0d0" text-anchor="end" textLength="19.3" lengthAdjust="spacingAndGlyphs">0.3</text>
<line x1="1263.8" y1="561.4" x2="1263.8" y2="566.4" stroke="#d0d0d0" stroke-width="1.2" />
<line x1="963.2" y1="355.2" x2="968.2" y2="355.2" stroke="#d0d0d0" stroke-width="1.2" />
<text x="1263.8" y="579.7" font-size="13" fill="#d0d0d0" text-anchor="middle" textLength="19.3" lengthAdjust="spacingAndGlyphs">0.4</text>
<text x="962" y="360.1" font-size="13" fill="#d0d0d0" text-anchor="end" textLength="19.3" lengthAdjust="spacingAndGlyphs">0.4</text>
<line x1="1337.7" y1="561.4" x2="1337.7" y2="566.4" stroke="#d0d0d0" stroke-width="1.2" />
<line x1="963.2" y1="303.7" x2="968.2" y2="303.7" stroke="#d0d0d0" stroke-width="1.2" />
<text x="1337.7" y="579.7" font-size="13" fill="#d0d0d0" text-anchor="middle" textLength="19.3" lengthAdjust="spacingAndGlyphs">0.5</text>
<text x="962" y="308.6" font-size="13" fill="#d0d0d0" text-anchor="end" textLength="19.3" lengthAdjust="spacingAndGlyphs">0.5</text>
<line x1="1411.6" y1="561.4" x2="1411.6" y2="566.4" stroke="#d0d0d0" stroke-width="1.2" />
<line x1="963.2" y1="252.2" x2="968.2" y2="252.2" stroke="#d0d0d0" stroke-width="1.2" />
<text x="1411.6" y="579.7" font-size="13" fill="#d0d0d0" text-anchor="middle" textLength="19.3" lengthAdjust="spacingAndGlyphs">0.6</text>
<text x="962" y="257.1" font-size="13" fill="#d0d0d0" text-anchor="end" textLength="19.3" lengthAdjust="spacingAndGlyphs">0.6</text>
<line x1="1485.5" y1="561.4" x2="1485.5" y2="566.4" stroke="#d0d0d0" stroke-width="1.2" />
<line x1="963.2" y1="200.6" x2="968.2" y2="200.6" stroke="#d0d0d0" stroke-width="1.2" />
<text x="1485.5" y="579.7" font-size="13" fill="#d0d0d0" text-anchor="middle" textLength="19.3" lengthAdjust="spacingAndGlyphs">0.7</text>
<text x="962" y="205.5" font-size="13" fill="#d0d0d0" text-anchor="end" textLength="19.3" lengthAdjust="spacingAndGlyphs">0.7</text>
<line x1="1559.4" y1="561.4" x2="1559.4" y2="566.4" stroke="#d0d0d0" stroke-width="1.2" />
<line x1="963.2" y1="149.1" x2="968.2" y2="149.1" stroke="#d0d0d0" stroke-width="1.2" />
<text x="1559.4" y="579.7" font-size="13" fill="#d0d0d0" text-anchor="middle" textLength="19.3" lengthAdjust="spacingAndGlyphs">0.8</text>
<text x="962" y="154.0" font-size="13" fill="#d0d0d0" text-anchor="end" textLength="19.3" lengthAdjust="spacingAndGlyphs">0.8</text>
<g clip-path="url(#ins)"><g shape-rendering="crispEdges"><rect x="1371" y="133" width="214" height="3" fill="url(#c284)"/><rect x="1371" y="136" width="214" height="3" fill="url(#c285)"/><rect x="1371" y="139" width="214" height="3" fill="url(#c286)"/><rect x="1371" y="142" width="214" height="3" fill="url(#c287)"/><rect x="1371" y="145" width="214" height="3" fill="url(#c288)"/><rect x="1371" y="148" width="214" height="3" fill="url(#c289)"/><rect x="1371" y="151" width="214" height="3" fill="url(#c290)"/><rect x="1371" y="154" width="214" height="3" fill="url(#c291)"/><rect x="1371" y="157" width="214" height="3" fill="url(#c292)"/><rect x="1371" y="160" width="214" height="3" fill="url(#c293)"/><rect x="1371" y="163" width="214" height="3" fill="url(#c294)"/><rect x="1371" y="166" width="214" height="3" fill="url(#c295)"/><rect x="1371" y="169" width="214" height="3" fill="url(#c296)"/><rect x="1371" y="172" width="214" height="3" fill="url(#c297)"/><rect x="1371" y="175" width="214" height="3" fill="url(#c298)"/><rect x="1371" y="178" width="214" height="3" fill="url(#c299)"/><rect x="1371" y="181" width="214" height="3" fill="url(#c300)"/><rect x="1371" y="184" width="214" height="3" fill="url(#c301)"/><rect x="1371" y="187" width="214" height="3" fill="url(#c302)"/><rect x="1371" y="190" width="214" height="3" fill="url(#c303)"/><rect x="1371" y="193" width="214" height="3" fill="url(#c304)"/><rect x="1371" y="196" width="214" height="3" fill="url(#c305)"/><rect x="1371" y="199" width="214" height="3" fill="url(#c306)"/><rect x="1371" y="202" width="214" height="3" fill="url(#c307)"/><rect x="1371" y="205" width="214" height="3" fill="url(#c308)"/><rect x="1371" y="208" width="214" height="3" fill="url(#c309)"/><rect x="1371" y="211" width="214" height="3" fill="url(#c310)"/><rect x="1371" y="214" width="214" height="3" fill="url(#c311)"/><rect x="1371" y="217" width="214" height="3" fill="url(#c312)"/><rect x="1371" y="220" width="214" height="3" fill="url(#c313)"/><rect x="1371" y="223" width="214" height="3" fill="url(#c314)"/><rect x="1371" y="226" width="214" height="3" fill="url(#c315)"/><rect x="1371" y="229" width="214" height="3" fill="url(#c316)"/><rect x="1371" y="232" width="214" height="3" fill="url(#c317)"/><rect x="1371" y="235" width="214" height="3" fill="url(#c318)"/><rect x="1371" y="238" width="214" height="3" fill="url(#c319)"/><rect x="1371" y="241" width="214" height="3" fill="url(#c320)"/><rect x="1371" y="244" width="214" height="3" fill="url(#c321)"/><rect x="1371" y="247" width="214" height="3" fill="url(#c322)"/><rect x="1371" y="250" width="214" height="3" fill="url(#c323)"/><rect x="1371" y="253" width="214" height="3" fill="url(#c324)"/><rect x="1371" y="256" width="214" height="3" fill="url(#c325)"/><rect x="1371" y="259" width="214" height="3" fill="url(#c326)"/><rect x="1371" y="262" width="214" height="3" fill="url(#c327)"/><rect x="1371" y="265" width="214" height="3" fill="url(#c328)"/><rect x="1371" y="268" width="214" height="3" fill="url(#c329)"/><rect x="1371" y="271" width="214" height="3" fill="url(#c330)"/><rect x="1371" y="274" width="214" height="3" fill="url(#c331)"/><rect x="1371" y="277" width="214" height="3" fill="url(#c332)"/><rect x="1371" y="280" width="214" height="3" fill="url(#c333)"/><rect x="1371" y="283" width="214" height="3" fill="url(#c334)"/><rect x="1371" y="286" width="214" height="3" fill="url(#c335)"/><rect x="1371" y="289" width="214" height="3" fill="url(#c336)"/><rect x="1371" y="292" width="214" height="3" fill="url(#c337)"/><rect x="1371" y="295" width="214" height="3" fill="url(#c338)"/></g><g clip-path="url(#instri)"><g shape-rendering="crispEdges"><rect x="1371" y="145" width="214" height="3" fill="url(#c339)"/><rect x="1371" y="148" width="214" height="3" fill="url(#c340)"/><rect x="1371" y="151" width="214" height="3" fill="url(#c341)"/><rect x="1371" y="154" width="214" height="3" fill="url(#c342)"/><rect x="1371" y="157" width="214" height="3" fill="url(#c343)"/><rect x="1371" y="160" width="214" height="3" fill="url(#c344)"/><rect x="1371" y="163" width="214" height="3" fill="url(#c345)"/><rect x="1371" y="166" width="214" height="3" fill="url(#c346)"/><rect x="1371" y="169" width="214" height="3" fill="url(#c347)"/><rect x="1371" y="172" width="214" height="3" fill="url(#c348)"/><rect x="1371" y="175" width="214" height="3" fill="url(#c349)"/><rect x="1371" y="178" width="214" height="3" fill="url(#c350)"/><rect x="1371" y="181" width="214" height="3" fill="url(#c351)"/><rect x="1371" y="184" width="214" height="3" fill="url(#c352)"/><rect x="1371" y="187" width="214" height="3" fill="url(#c353)"/><rect x="1371" y="190" width="214" height="3" fill="url(#c354)"/><rect x="1371" y="193" width="214" height="3" fill="url(#c355)"/><rect x="1371" y="196" width="214" height="3" fill="url(#c356)"/><rect x="1371" y="199" width="214" height="3" fill="url(#c357)"/><rect x="1371" y="202" width="214" height="3" fill="url(#c358)"/><rect x="1371" y="205" width="214" height="3" fill="url(#c359)"/><rect x="1371" y="208" width="214" height="3" fill="url(#c360)"/><rect x="1371" y="211" width="214" height="3" fill="url(#c361)"/><rect x="1371" y="214" width="214" height="3" fill="url(#c362)"/><rect x="1371" y="217" width="214" height="3" fill="url(#c363)"/><rect x="1371" y="220" width="214" height="3" fill="url(#c364)"/><rect x="1371" y="223" width="214" height="3" fill="url(#c365)"/><rect x="1371" y="226" width="214" height="3" fill="url(#c366)"/><rect x="1371" y="229" width="214" height="3" fill="url(#c367)"/><rect x="1371" y="232" width="214" height="3" fill="url(#c368)"/><rect x="1371" y="235" width="214" height="3" fill="url(#c369)"/><rect x="1371" y="238" width="214" height="3" fill="url(#c370)"/><rect x="1371" y="241" width="214" height="3" fill="url(#c371)"/><rect x="1371" y="244" width="214" height="3" fill="url(#c372)"/><rect x="1371" y="247" width="214" height="3" fill="url(#c373)"/><rect x="1371" y="250" width="214" height="3" fill="url(#c374)"/><rect x="1371" y="253" width="214" height="3" fill="url(#c375)"/><rect x="1371" y="256" width="214" height="3" fill="url(#c376)"/><rect x="1371" y="259" width="214" height="3" fill="url(#c377)"/><rect x="1371" y="262" width="214" height="3" fill="url(#c378)"/><rect x="1371" y="265" width="214" height="3" fill="url(#c379)"/><rect x="1371" y="268" width="214" height="3" fill="url(#c380)"/><rect x="1371" y="271" width="214" height="3" fill="url(#c381)"/><rect x="1371" y="274" width="214" height="3" fill="url(#c382)"/><rect x="1371" y="277" width="214" height="3" fill="url(#c383)"/><rect x="1371" y="280" width="214" height="3" fill="url(#c384)"/><rect x="1371" y="283" width="214" height="3" fill="url(#c385)"/><rect x="1371" y="286" width="214" height="3" fill="url(#c386)"/><rect x="1371" y="289" width="214" height="3" fill="url(#c387)"/><rect x="1371" y="292" width="214" height="3" fill="url(#c388)"/><rect x="1371" y="295" width="214" height="3" fill="url(#c389)"/></g></g></g>
<rect x="1373.3" y="133.3" width="209.4" height="162.4" fill="none" stroke="#8c8c8c" stroke-width="1.3"/>
<g fill="none" stroke="#fff" stroke-width="1.25"><rect x="1182.3" y="244.8" width="13.6" height="12.5"/><rect x="1184.8" y="274.9" width="13.6" height="12.5"/><rect x="1186.2" y="302.2" width="13.6" height="12.5"/><rect x="1188.5" y="328.2" width="13.6" height="12.5"/><rect x="1190.3" y="356.2" width="13.6" height="12.5"/><rect x="1271.2" y="293.6" width="13.6" height="12.5"/><rect x="1254.2" y="313.1" width="13.6" height="12.5"/><rect x="1239.8" y="329.9" width="13.6" height="12.5"/><rect x="1224.1" y="346.4" width="13.6" height="12.5"/><rect x="1208.0" y="365.4" width="13.6" height="12.5"/><rect x="1126.9" y="385.1" width="13.6" height="12.5"/><rect x="1140.2" y="385.1" width="13.6" height="12.5"/><rect x="1153.7" y="385.1" width="13.6" height="12.5"/><rect x="1166.6" y="385.1" width="13.6" height="12.5"/><rect x="1179.2" y="385.1" width="13.6" height="12.5"/><rect x="1434.3" y="383.8" width="13.6" height="12.5"/><rect x="1380.3" y="383.8" width="13.6" height="12.5"/><rect x="1333.2" y="383.8" width="13.6" height="12.5"/><rect x="1289.1" y="383.8" width="13.6" height="12.5"/><rect x="1239.6" y="383.8" width="13.6" height="12.5"/><rect x="1071.1" y="522.6" width="13.6" height="12.5"/><rect x="1097.1" y="492.8" width="13.6" height="12.5"/><rect x="1121.2" y="466.2" width="13.6" height="12.5"/><rect x="1144.2" y="440.4" width="13.6" height="12.5"/><rect x="1167.7" y="412.1" width="13.6" height="12.5"/><rect x="1197.6" y="474.8" width="13.6" height="12.5"/><rect x="1196.6" y="455.2" width="13.6" height="12.5"/><rect x="1195.0" y="437.4" width="13.6" height="12.5"/><rect x="1195.0" y="422.1" width="13.6" height="12.5"/><rect x="1194.3" y="403.2" width="13.6" height="12.5"/><rect x="1470.2" y="208.1" width="13.4" height="12.3"/></g>
<rect x="1192.9" y="385.8" width="13.3" height="11.5" fill="none" stroke="#000" stroke-width="1.4"/>
<g stroke="#000" stroke-width="1.1"><ellipse cx="1204.5" cy="241.4" rx="4" ry="3.6" fill="#109010"/><ellipse cx="1203.6" cy="274" rx="4" ry="3.6" fill="#46bc46"/><ellipse cx="1200.3" cy="303.4" rx="4" ry="3.6" fill="#6abc6a"/><ellipse cx="1199.4" cy="332.4" rx="4" ry="3.6" fill="#88bc88"/><ellipse cx="1198.5" cy="360.9" rx="4" ry="3.6" fill="#a1bca1"/><ellipse cx="1277.5" cy="286.9" rx="4" ry="3.6" fill="#c8c800"/><ellipse cx="1258.5" cy="309.2" rx="4" ry="3.6" fill="#bcbc46"/><ellipse cx="1243.6" cy="331" rx="4" ry="3.6" fill="#bcbc6a"/><ellipse cx="1228.4" cy="350.3" rx="4" ry="3.6" fill="#bcbc88"/><ellipse cx="1211.4" cy="371.7" rx="4" ry="3.6" fill="#bcbca1"/><ellipse cx="1141.9" cy="393" rx="4" ry="3.6" fill="#00c8c8"/><ellipse cx="1153.4" cy="393" rx="4" ry="3.6" fill="#46bcbc"/><ellipse cx="1164.4" cy="392.6" rx="4" ry="3.6" fill="#6abcbc"/><ellipse cx="1174.4" cy="392.6" rx="4" ry="3.6" fill="#88bcbc"/><ellipse cx="1185.5" cy="392.6" rx="4" ry="3.6" fill="#a1bcbc"/><ellipse cx="1434.5" cy="386.5" rx="4" ry="3.6" fill="#c00000"/><ellipse cx="1380.5" cy="387.5" rx="4" ry="3.6" fill="#bc4646"/><ellipse cx="1327.5" cy="389" rx="4" ry="3.6" fill="#bc6a6a"/><ellipse cx="1281.5" cy="390.1" rx="4" ry="3.6" fill="#bc8888"/><ellipse cx="1234.5" cy="391" rx="4" ry="3.6" fill="#bca1a1"/><ellipse cx="1083.2" cy="538.5" rx="4" ry="3.6" fill="#0000b0"/><ellipse cx="1105.3" cy="510" rx="4" ry="3.6" fill="#4646bc"/><ellipse cx="1127.4" cy="480.1" rx="4" ry="3.6" fill="#6a6abc"/><ellipse cx="1149.4" cy="451.8" rx="4" ry="3.6" fill="#8888bc"/><ellipse cx="1172" cy="422.4" rx="4" ry="3.6" fill="#a1a1bc"/><ellipse cx="1189" cy="493" rx="4" ry="3.6" fill="#c800c8"/><ellipse cx="1190.6" cy="469.8" rx="4" ry="3.6" fill="#bc46bc"/><ellipse cx="1191.5" cy="450.9" rx="4" ry="3.6" fill="#bc6abc"/><ellipse cx="1191.5" cy="432.8" rx="4" ry="3.6" fill="#bc88bc"/><ellipse cx="1195.4" cy="411.4" rx="4" ry="3.6" fill="#bca1bc"/><ellipse cx="1195.4" cy="392.3" rx="4" ry="3.6" fill="#fff"/><ellipse cx="1476.8" cy="147.1" rx="4.4" ry="3.5" fill="#c8c800"/><ellipse cx="1388.4" cy="268" rx="4.4" ry="3.5" fill="#bcbc46"/></g>
<rect x="0" y="807.3" width="1600" height="62.7" fill="url(#bbg)" />
<rect x="0" y="807.3" width="811" height="62.7" fill="#303030" />
<rect x="1.2" y="807.9" width="44.8" height="61" rx="3.5" fill="url(#cell)"/>
<circle cx="23.5" cy="817.3" r="7.5" fill="url(#upc)"/>
<path d="M18.8 818.8h9.4l-4.7 -5z" fill="#2a2a2a"/>
<rect x="6.1" y="834" width="35.1" height="30.1" rx="2.5" fill="#ffff00"/>
<rect x="52.2" y="807.9" width="149.8" height="61" rx="3.5" fill="url(#cell)"/>
<rect x="57.6" y="813.5" width="139.6" height="35.4" rx="2" fill="#c0c0a2" stroke="#000" stroke-opacity="0.18" stroke-width="1"/>
<text x="127.2" y="864" font-size="11" fill="#242424" text-anchor="middle" stroke="#242424" stroke-width="0.3">20%</text>
<rect x="204.2" y="807.9" width="149.8" height="61" rx="3.5" fill="url(#cell)"/>
<rect x="209.6" y="813.5" width="139.6" height="35.4" rx="2" fill="#c0c088" stroke="#000" stroke-opacity="0.18" stroke-width="1"/>
<text x="279.2" y="864" font-size="11" fill="#242424" text-anchor="middle" stroke="#242424" stroke-width="0.3">40%</text>
<rect x="356.2" y="807.9" width="149.8" height="61" rx="3.5" fill="url(#cell)"/>
<rect x="361.6" y="813.5" width="139.6" height="35.4" rx="2" fill="#bfbf68" stroke="#000" stroke-opacity="0.18" stroke-width="1"/>
<text x="431.2" y="864" font-size="11" fill="#242424" text-anchor="middle" stroke="#242424" stroke-width="0.3">60%</text>
<rect x="508.2" y="807.9" width="149.8" height="61" rx="3.5" fill="url(#cell)"/>
<rect x="513.6" y="813.5" width="139.6" height="35.4" rx="2" fill="#bfbf48" stroke="#000" stroke-opacity="0.18" stroke-width="1"/>
<text x="583.2" y="864" font-size="11" fill="#242424" text-anchor="middle" stroke="#242424" stroke-width="0.3">80%</text>
<rect x="660.2" y="807.9" width="149.8" height="61" rx="3.5" fill="url(#selc)"/>
<rect x="665.6" y="813.5" width="139.6" height="35.4" rx="2" fill="#c0c000" stroke="#000" stroke-opacity="0.18" stroke-width="1"/>
<text x="735.2" y="864" font-size="11" fill="#fff" text-anchor="middle" font-weight="bold">100%</text>
<path d="M1277 827V811.7a3.5 3.5 0 0 1 3.5 -3.5H1321.3a3.5 3.5 0 0 1 3.5 3.5V827z" fill="url(#btn)"/>
<rect x="1277" y="827" width="47.8" height="43" fill="url(#btn2)"/>
<line x1="1277" y1="826.7" x2="1324.8" y2="826.7" stroke="#555" stroke-width="1" />
<circle cx="1301" cy="816.8" r="7" fill="url(#bc)"/>
<path d="M1296.3 818.6h9.4l-4.7 -5z" fill="#2a2a2a"/>
<rect x="1286.2" y="833.2" width="29.8" height="29.4" rx="4" fill="url(#sq)" stroke="#262626" stroke-width="1.7"/>
<rect x="1294.2" y="841.2" width="13.5" height="13.2" fill="url(#sqb)"/>
<path d="M1326.8 837.5V811.7a3.5 3.5 0 0 1 3.5 -3.5H1372.0V837.5z" fill="url(#btn)"/>
<circle cx="1349.4" cy="822.8" r="10" fill="url(#bc)"/>
<rect x="1345.4" y="818.8" width="8" height="8" fill="#222"/>
<rect x="1373.0" y="808.2" width="44.1" height="29.3" fill="url(#btn)"/>
<circle cx="1395.0" cy="822.8" r="10" fill="url(#bc)"/>
<path d="M1391.5 817.8l8 5l-8 5z" fill="#222"/>
<rect x="1418.1" y="808.2" width="43.7" height="29.3" fill="url(#btn)"/>
<circle cx="1439.9" cy="822.8" r="10" fill="url(#bc)"/>
<path d="M1437.3 818.6h-2.7v9.8h2.7M1442.5 818.6h2.7v9.8h-2.7" fill="none" stroke="#222" stroke-width="1.8"/><circle cx="1438.4" cy="823.5" r="0.85" fill="#222"/><circle cx="1441.4" cy="823.5" r="0.85" fill="#222"/>
<rect x="1462.8" y="808.2" width="44.1" height="29.3" fill="url(#btn)"/>
<circle cx="1484.8" cy="822.8" r="10" fill="url(#bc)"/>
<text x="1484.8" y="828.2" font-size="18" fill="#222" text-anchor="middle" textLength="14.5" lengthAdjust="spacingAndGlyphs" font-weight="bold">∞</text>
<rect x="1507.9" y="808.2" width="43.8" height="29.3" fill="url(#btn)"/>
<circle cx="1529.8" cy="822.8" r="10" fill="url(#bc)"/>
<g fill="none" stroke="#222" stroke-width="2.1"><path d="M1525.2 821.8a4.6 4.6 0 0 1 7.8 -2.2"/><path d="M1534.4 823.8a4.6 4.6 0 0 1 -7.8 2.2"/></g><path d="M1531.0 821h4.6v-4.6z M1528.6 824.6h-4.6v4.6z" fill="#222"/>
<path d="M1552.7 837.5V808.2H1594.3a3.5 3.5 0 0 1 3.5 3.5V837.5z" fill="url(#dkb)"/>
<circle cx="1575.2" cy="822.8" r="10" fill="url(#dkc)"/>
<path d="M1326.8 839.2H1462V870H1326.8z" fill="url(#btn)"/>
<path d="M1463 839.2H1594.8a3.5 3.5 0 0 1 3.5 3.5V870H1463z" fill="url(#btn)"/>
<circle cx="1357" cy="854.5" r="10" fill="url(#bc)"/><circle cx="1570" cy="854.5" r="10" fill="url(#bc)"/>
<path d="M1356 850l-4.5 4.5l4.5 4.5M1361 850l-4.5 4.5l4.5 4.5" fill="none" stroke="#2a2a2a" stroke-width="1.6"/>
<path d="M1566 850l4.5 4.5l-4.5 4.5M1571 850l4.5 4.5l-4.5 4.5" fill="none" stroke="#2a2a2a" stroke-width="1.6"/>
<text x="1383.9" y="861.5" font-size="21.8" fill="#2c2c2c" textLength="50" lengthAdjust="spacingAndGlyphs" stroke="#2c2c2c" stroke-width="0.45">Back</text>
<text x="1490.5" y="861.5" font-size="21.8" fill="#2c2c2c" textLength="51.5" lengthAdjust="spacingAndGlyphs" stroke="#2c2c2c" stroke-width="0.45">Next</text>
</svg>
</body></html>
